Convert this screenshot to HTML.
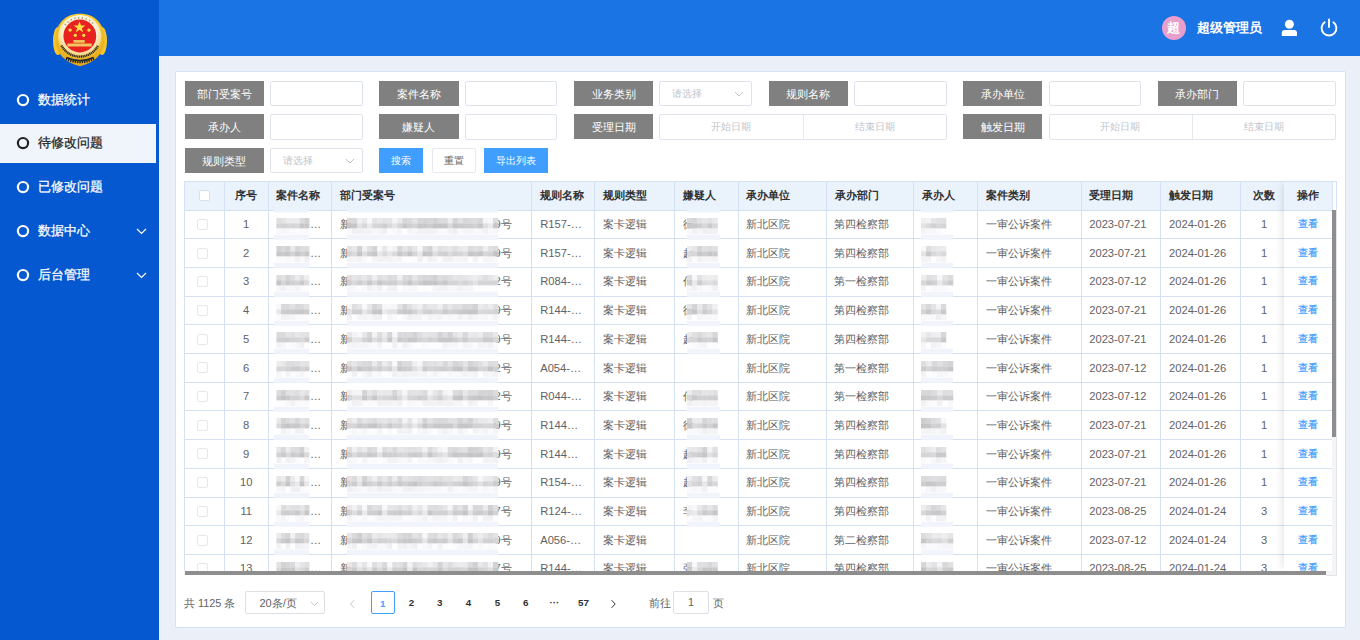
<!DOCTYPE html><html><head><meta charset="utf-8"><style>
*{margin:0;padding:0;box-sizing:border-box}
html,body{width:1360px;height:640px;overflow:hidden;background:#ebf0f8;font-family:"Liberation Sans", sans-serif;}
.ab{position:absolute}
.t{position:absolute;white-space:nowrap}
.lbl{position:absolute;background:#808080;color:#fff;font-size:11.2px;text-align:center;height:25px;line-height:26px;width:79.3px}
.inp{position:absolute;background:#fff;border:1px solid #dfe3ee;border-radius:2px;height:25.5px;width:92.5px}
.ph{position:absolute;color:#c0c4cc;font-size:10.4px;white-space:nowrap}
.hl{position:absolute;height:1px;background:#d3e1f3}
.vl{position:absolute;width:1px;background:#d3e1f3}
.ht{position:absolute;font-size:11.2px;font-weight:bold;color:#303133;white-space:nowrap;line-height:29px;top:181px}
.bt{position:absolute;font-size:11.2px;color:#606266;white-space:nowrap}
.cb{position:absolute;width:11px;height:11px;border:1px solid #dcdfe6;border-radius:2px;background:#fff}
.pg{position:absolute;font-size:9.8px;font-weight:bold;color:#303133;white-space:nowrap;top:591.6px;line-height:22px;text-align:center}

</style></head><body>
<svg width="0" height="0" style="position:absolute"><defs><filter id="mb" x="-10%" y="-30%" width="120%" height="160%"><feGaussianBlur stdDeviation="0.6"/></filter></defs></svg>
<div class="ab" style="left:0;top:0;width:159px;height:640px;background:#0558d0"></div>
<svg class="ab" style="left:50px;top:10px" width="60" height="60" viewBox="0 0 60 60">
<defs><radialGradient id="gd" cx="50%" cy="35%" r="65%"><stop offset="0" stop-color="#fff3a8"/><stop offset="0.55" stop-color="#f7cc2e"/><stop offset="1" stop-color="#e0a318"/></radialGradient>
<radialGradient id="rg" cx="50%" cy="40%" r="55%"><stop offset="0.7" stop-color="#fbf3d6"/><stop offset="1" stop-color="#efd27a"/></radialGradient></defs>
<ellipse cx="8" cy="31" rx="5" ry="14" fill="#f5c52c"/><ellipse cx="52" cy="31" rx="5" ry="14" fill="#f5c52c"/>
<path d="M30 3.8 C45 3.8 54.5 14 54.5 29 C54.5 43 46 52 30 56.2 C14 52 5.5 43 5.5 29 C5.5 14 15 3.8 30 3.8Z" fill="url(#gd)"/>
<circle cx="29.8" cy="26.5" r="21.6" fill="url(#rg)"/>
<circle cx="29.8" cy="26" r="16.4" fill="#e8231f"/>
<path d="M15 15 A18.8 18.8 0 0 1 44.6 15" fill="none" stroke="#6b5a3a" stroke-width="1.6" stroke-dasharray="1.2 2.6" opacity="0.6"/>
<polygon points="29.5,13.1 30.5,16 33.5,16 31.1,17.8 32,20.7 29.5,18.9 27,20.7 27.9,17.8 25.5,16 28.5,16" fill="#ffe04a" transform="translate(29.5 17) scale(1.45) translate(-29.5 -17)"/>
<circle cx="20.1" cy="20.1" r="1.7" fill="#ffe04a"/><circle cx="38.9" cy="20.1" r="1.7" fill="#ffe04a"/>
<circle cx="25.3" cy="25.3" r="1.6" fill="#ffe04a"/><circle cx="33.7" cy="25.3" r="1.6" fill="#ffe04a"/>
<rect x="23.4" y="30" width="11.3" height="2.8" fill="#f0bf5a"/><rect x="17.3" y="33.5" width="24.4" height="3" fill="#f3c55e"/>
<path d="M11.5 35.5 A20.6 20.6 0 0 0 48.1 35.5" fill="none" stroke="#3b2b0c" stroke-width="2.4" stroke-dasharray="1.3 0.5"/>
<path d="M16 48.5 Q30 55 44 48.5" fill="none" stroke="#222" stroke-width="3" stroke-dasharray="1.4 0.9"/>
<path d="M16.5 47.5 Q30 53.5 43.5 47.5" fill="none" stroke="#2a2a2a" stroke-width="1.6"/>
</svg>
<svg class="ab" style="left:15px;top:91.50px" width="16" height="16" viewBox="0 0 16 16"><circle cx="8" cy="8.1" r="5.1" fill="none" stroke="#fff" stroke-width="2.2"/></svg>
<div class="t" style="left:38px;top:90.50px;font-size:12.8px;line-height:18px;-webkit-text-stroke:0.25px #fff;color:#fff">数据统计</div>
<div class="ab" style="left:0;top:123.75px;width:156px;height:39.4px;background:#f0f5fc"></div>
<svg class="ab" style="left:15px;top:135.35px" width="16" height="16" viewBox="0 0 16 16"><circle cx="8" cy="8.1" r="5.1" fill="none" stroke="#222" stroke-width="2.2"/></svg>
<div class="t" style="left:38px;top:134.35px;font-size:12.8px;line-height:18px;-webkit-text-stroke:0.25px #222;color:#222">待修改问题</div>
<svg class="ab" style="left:15px;top:179.20px" width="16" height="16" viewBox="0 0 16 16"><circle cx="8" cy="8.1" r="5.1" fill="none" stroke="#fff" stroke-width="2.2"/></svg>
<div class="t" style="left:38px;top:178.20px;font-size:12.8px;line-height:18px;-webkit-text-stroke:0.25px #fff;color:#fff">已修改问题</div>
<svg class="ab" style="left:15px;top:223.05px" width="16" height="16" viewBox="0 0 16 16"><circle cx="8" cy="8.1" r="5.1" fill="none" stroke="#fff" stroke-width="2.2"/></svg>
<div class="t" style="left:38px;top:222.05px;font-size:12.8px;line-height:18px;-webkit-text-stroke:0.25px #fff;color:#fff">数据中心</div>
<svg class="ab" style="left:136px;top:228.05px" width="11" height="7" viewBox="0 0 11 7"><path d="M1 1 L5.5 5.5 L10 1" fill="none" stroke="#fff" stroke-width="1.2"/></svg>
<svg class="ab" style="left:15px;top:266.90px" width="16" height="16" viewBox="0 0 16 16"><circle cx="8" cy="8.1" r="5.1" fill="none" stroke="#fff" stroke-width="2.2"/></svg>
<div class="t" style="left:38px;top:265.90px;font-size:12.8px;line-height:18px;-webkit-text-stroke:0.25px #fff;color:#fff">后台管理</div>
<svg class="ab" style="left:136px;top:271.90px" width="11" height="7" viewBox="0 0 11 7"><path d="M1 1 L5.5 5.5 L10 1" fill="none" stroke="#fff" stroke-width="1.2"/></svg>
<div class="ab" style="left:159px;top:0;width:1201px;height:55.5px;background:#1b74e4"></div>
<div class="ab" style="left:1161.6px;top:15.7px;width:24.5px;height:24.5px;border-radius:50%;background:#e89fcb;color:#fff;font-size:13px;font-weight:bold;line-height:24.5px;text-align:center">超</div>
<div class="t" style="left:1197px;top:19px;font-size:12.8px;line-height:18px;font-weight:bold;color:#fff">超级管理员</div>
<svg class="ab" style="left:1280px;top:19px" width="18" height="18" viewBox="0 0 18 18"><circle cx="9.4" cy="5.2" r="4.5" fill="#fff"/><path d="M1.8 16.9 V14 Q1.8 11 4.8 11 H14 Q17 11 17 14 V16.9 Z" fill="#fff"/></svg>
<svg class="ab" style="left:1319px;top:17px" width="20" height="21" viewBox="0 0 20 21"><path d="M5.6 5.2 A7.4 7.4 0 1 0 14.4 5.2" fill="none" stroke="#fff" stroke-width="1.9" stroke-linecap="round"/><path d="M10 2.5 V10" stroke="#fff" stroke-width="1.9" stroke-linecap="round"/></svg>
<div class="ab" style="left:175px;top:71px;width:1170.5px;height:557px;background:#fff;border:1px solid #d5e2f3;border-radius:2px"></div>
<div class="lbl" style="left:184.70px;top:80.9px">部门受案号</div>
<div class="inp" style="left:270.20px;top:80.70px"></div>
<div class="lbl" style="left:379.30px;top:80.9px">案件名称</div>
<div class="inp" style="left:464.80px;top:80.70px"></div>
<div class="lbl" style="left:573.90px;top:80.9px">业务类别</div>
<div class="inp" style="left:659.40px;top:80.70px"></div>
<div class="ph" style="left:672.20px;top:86.9px;line-height:13px">请选择</div>
<svg class="ab" style="left:733.90px;top:90.9px" width="10" height="6" viewBox="0 0 10 6"><path d="M1 1 L5 5 L9 1" fill="none" stroke="#c0c4cc" stroke-width="1"/></svg>
<div class="lbl" style="left:768.50px;top:80.9px">规则名称</div>
<div class="inp" style="left:854.00px;top:80.70px"></div>
<div class="lbl" style="left:963.10px;top:80.9px">承办单位</div>
<div class="inp" style="left:1048.60px;top:80.70px"></div>
<div class="lbl" style="left:1157.70px;top:80.9px">承办部门</div>
<div class="inp" style="left:1243.20px;top:80.70px"></div>
<div class="lbl" style="left:184.70px;top:114.4px">承办人</div>
<div class="inp" style="left:270.20px;top:114.20px"></div>
<div class="lbl" style="left:379.30px;top:114.4px">嫌疑人</div>
<div class="inp" style="left:464.80px;top:114.20px"></div>
<div class="lbl" style="left:573.90px;top:114.4px">受理日期</div>
<div class="inp" style="left:659.40px;top:114.20px;width:287.2px"></div>
<div class="ab" style="left:803.00px;top:115.4px;width:1px;height:24px;background:#e4e7ed"></div>
<div class="ph" style="left:659.40px;width:143.60px;text-align:center;top:120.4px;line-height:13px">开始日期</div>
<div class="ph" style="left:803.00px;width:143.60px;text-align:center;top:120.4px;line-height:13px">结束日期</div>
<div class="lbl" style="left:963.10px;top:114.4px">触发日期</div>
<div class="inp" style="left:1048.60px;top:114.20px;width:287.2px"></div>
<div class="ab" style="left:1192.20px;top:115.4px;width:1px;height:24px;background:#e4e7ed"></div>
<div class="ph" style="left:1048.60px;width:143.60px;text-align:center;top:120.4px;line-height:13px">开始日期</div>
<div class="ph" style="left:1192.20px;width:143.60px;text-align:center;top:120.4px;line-height:13px">结束日期</div>
<div class="lbl" style="left:184.7px;top:147.8px">规则类型</div>
<div class="inp" style="left:270.20px;top:147.60px"></div>
<div class="ph" style="left:283.00px;top:153.8px;line-height:13px">请选择</div>
<svg class="ab" style="left:344.70px;top:157.8px" width="10" height="6" viewBox="0 0 10 6"><path d="M1 1 L5 5 L9 1" fill="none" stroke="#c0c4cc" stroke-width="1"/></svg>
<div class="ab" style="left:379px;top:148px;width:44px;height:25px;background:#409eff;color:#fff;font-size:9.6px;line-height:25px;text-align:center">搜索</div>
<div class="ab" style="left:431.8px;top:148px;width:44px;height:25px;background:#fff;border:1px solid #e6e9f0;border-radius:2px;color:#606266;font-size:9.6px;line-height:24px;text-align:center">重置</div>
<div class="ab" style="left:484.3px;top:148px;width:63.4px;height:25px;background:#409eff;color:#fff;font-size:9.6px;line-height:25px;text-align:center">导出列表</div>
<div class="ab" style="left:184.3px;top:181.0px;width:1147.7px;height:29.0px;background:#eaf2fc"></div>
<div class="hl" style="left:184.3px;top:181.0px;width:1147.7px"></div>
<div class="hl" style="left:184.3px;top:209.50px;width:1147.7px"></div>
<div class="hl" style="left:184.3px;top:238.20px;width:1147.7px"></div>
<div class="hl" style="left:184.3px;top:266.90px;width:1147.7px"></div>
<div class="hl" style="left:184.3px;top:295.60px;width:1147.7px"></div>
<div class="hl" style="left:184.3px;top:324.30px;width:1147.7px"></div>
<div class="hl" style="left:184.3px;top:353.00px;width:1147.7px"></div>
<div class="hl" style="left:184.3px;top:381.70px;width:1147.7px"></div>
<div class="hl" style="left:184.3px;top:410.40px;width:1147.7px"></div>
<div class="hl" style="left:184.3px;top:439.10px;width:1147.7px"></div>
<div class="hl" style="left:184.3px;top:467.80px;width:1147.7px"></div>
<div class="hl" style="left:184.3px;top:496.50px;width:1147.7px"></div>
<div class="hl" style="left:184.3px;top:525.20px;width:1147.7px"></div>
<div class="hl" style="left:184.3px;top:553.90px;width:1147.7px"></div>
<div class="vl" style="left:183.80px;top:181.0px;height:390.29999999999995px"></div>
<div class="vl" style="left:223.90px;top:181.0px;height:390.29999999999995px"></div>
<div class="vl" style="left:267.50px;top:181.0px;height:390.29999999999995px"></div>
<div class="vl" style="left:331.10px;top:181.0px;height:390.29999999999995px"></div>
<div class="vl" style="left:531.10px;top:181.0px;height:390.29999999999995px"></div>
<div class="vl" style="left:594.30px;top:181.0px;height:390.29999999999995px"></div>
<div class="vl" style="left:674.00px;top:181.0px;height:390.29999999999995px"></div>
<div class="vl" style="left:737.70px;top:181.0px;height:390.29999999999995px"></div>
<div class="vl" style="left:825.90px;top:181.0px;height:390.29999999999995px"></div>
<div class="vl" style="left:913.10px;top:181.0px;height:390.29999999999995px"></div>
<div class="vl" style="left:977.10px;top:181.0px;height:390.29999999999995px"></div>
<div class="vl" style="left:1080.70px;top:181.0px;height:390.29999999999995px"></div>
<div class="vl" style="left:1160.10px;top:181.0px;height:390.29999999999995px"></div>
<div class="vl" style="left:1240.10px;top:181.0px;height:390.29999999999995px"></div>
<div class="cb" style="left:198.7px;top:190.4px"></div>
<div class="ht" style="left:224.4px;width:43.599999999999994px;text-align:center">序号</div>
<div class="ht" style="left:276.20px">案件名称</div>
<div class="ht" style="left:339.80px">部门受案号</div>
<div class="ht" style="left:539.80px">规则名称</div>
<div class="ht" style="left:603.00px">规则类型</div>
<div class="ht" style="left:682.70px">嫌疑人</div>
<div class="ht" style="left:746.40px">承办单位</div>
<div class="ht" style="left:834.60px">承办部门</div>
<div class="ht" style="left:921.80px">承办人</div>
<div class="ht" style="left:985.80px">案件类别</div>
<div class="ht" style="left:1089.40px">受理日期</div>
<div class="ht" style="left:1168.80px">触发日期</div>
<div class="ht" style="left:1240.6px;width:47px;text-align:center">次数</div>
<div class="ab" style="left:184.3px;top:210.0px;width:1147.7px;height:361.29999999999995px;overflow:hidden">
<div class="cb" style="left:13.20px;top:8.85px;border-color:#e6e8ee"></div>
<div class="bt" style="left:40.10px;top:0.00px;line-height:28.7px;width:43.599999999999994px;text-align:center;">1</div>
<div class="bt" style="left:125.70px;top:0.00px;line-height:28.7px;">…</div>
<div class="bt" style="left:155.70px;top:0.00px;line-height:28.7px;">新</div>
<div class="bt" style="left:310.20px;top:0.00px;line-height:28.7px;">9号</div>
<svg class="ab" style="left:89.60px;top:-2.50px;overflow:visible" width="35.10" height="32" viewBox="0 0 35.10 32"><g filter="url(#mb)"><rect x="2.40" y="10.0" width="4.97" height="5.3" fill="rgb(224,224,226)"/><rect x="7.07" y="10.0" width="4.97" height="5.3" fill="rgb(228,228,230)"/><rect x="11.74" y="10.0" width="4.97" height="5.3" fill="rgb(236,236,238)"/><rect x="16.41" y="10.0" width="4.97" height="5.3" fill="rgb(236,236,238)"/><rect x="21.09" y="10.0" width="4.97" height="5.3" fill="rgb(236,236,238)"/><rect x="25.76" y="10.0" width="4.97" height="5.3" fill="rgb(219,219,221)"/><rect x="30.43" y="10.0" width="4.97" height="5.3" fill="rgb(210,210,212)"/><rect x="2.40" y="15.3" width="4.97" height="5.3" fill="rgb(213,213,215)"/><rect x="7.07" y="15.3" width="4.97" height="5.3" fill="rgb(210,210,212)"/><rect x="11.74" y="15.3" width="4.97" height="5.3" fill="rgb(214,214,216)"/><rect x="16.41" y="15.3" width="4.97" height="5.3" fill="rgb(212,212,214)"/><rect x="21.09" y="15.3" width="4.97" height="5.3" fill="rgb(215,215,217)"/><rect x="25.76" y="15.3" width="4.97" height="5.3" fill="rgb(199,199,201)"/><rect x="30.43" y="15.3" width="4.97" height="5.3" fill="rgb(200,200,202)"/><rect x="2.40" y="20.6" width="4.97" height="5.3" fill="rgb(249,249,251)"/><rect x="7.07" y="20.6" width="4.97" height="5.3" fill="rgb(246,246,248)"/><rect x="11.74" y="20.6" width="4.97" height="5.3" fill="rgb(247,247,249)"/><rect x="16.41" y="20.6" width="4.97" height="5.3" fill="rgb(250,250,252)"/><rect x="21.09" y="20.6" width="4.97" height="5.3" fill="rgb(251,251,253)"/><rect x="25.76" y="20.6" width="4.97" height="5.3" fill="rgb(249,249,251)"/><rect x="30.43" y="20.6" width="4.97" height="5.3" fill="rgb(250,250,252)"/></g><rect x="0" y="26.6" width="35.10" height="5.2" fill="#f1f5fb"/><rect x="0" y="0" width="35.10" height="4.5" fill="#edf3fb"/></svg>
<svg class="ab" style="left:163.00px;top:-2.50px;overflow:visible" width="151.00" height="32" viewBox="0 0 151.00 32"><g filter="url(#mb)"><rect x="0.00" y="10.0" width="5.33" height="5.3" fill="rgb(216,216,218)"/><rect x="5.03" y="10.0" width="5.33" height="5.3" fill="rgb(216,216,218)"/><rect x="10.07" y="10.0" width="5.33" height="5.3" fill="rgb(239,239,241)"/><rect x="15.10" y="10.0" width="5.33" height="5.3" fill="rgb(232,232,234)"/><rect x="20.13" y="10.0" width="5.33" height="5.3" fill="rgb(248,248,250)"/><rect x="25.17" y="10.0" width="5.33" height="5.3" fill="rgb(227,227,229)"/><rect x="30.20" y="10.0" width="5.33" height="5.3" fill="rgb(233,233,235)"/><rect x="35.23" y="10.0" width="5.33" height="5.3" fill="rgb(227,227,229)"/><rect x="40.27" y="10.0" width="5.33" height="5.3" fill="rgb(229,229,231)"/><rect x="45.30" y="10.0" width="5.33" height="5.3" fill="rgb(244,244,246)"/><rect x="50.33" y="10.0" width="5.33" height="5.3" fill="rgb(233,233,235)"/><rect x="55.37" y="10.0" width="5.33" height="5.3" fill="rgb(214,214,216)"/><rect x="60.40" y="10.0" width="5.33" height="5.3" fill="rgb(217,217,219)"/><rect x="65.43" y="10.0" width="5.33" height="5.3" fill="rgb(228,228,230)"/><rect x="70.47" y="10.0" width="5.33" height="5.3" fill="rgb(214,214,216)"/><rect x="75.50" y="10.0" width="5.33" height="5.3" fill="rgb(212,212,214)"/><rect x="80.53" y="10.0" width="5.33" height="5.3" fill="rgb(215,215,217)"/><rect x="85.57" y="10.0" width="5.33" height="5.3" fill="rgb(210,210,212)"/><rect x="90.60" y="10.0" width="5.33" height="5.3" fill="rgb(219,219,221)"/><rect x="95.63" y="10.0" width="5.33" height="5.3" fill="rgb(219,219,221)"/><rect x="100.67" y="10.0" width="5.33" height="5.3" fill="rgb(237,237,239)"/><rect x="105.70" y="10.0" width="5.33" height="5.3" fill="rgb(212,212,214)"/><rect x="110.73" y="10.0" width="5.33" height="5.3" fill="rgb(226,226,228)"/><rect x="115.77" y="10.0" width="5.33" height="5.3" fill="rgb(214,214,216)"/><rect x="120.80" y="10.0" width="5.33" height="5.3" fill="rgb(218,218,220)"/><rect x="125.83" y="10.0" width="5.33" height="5.3" fill="rgb(221,221,223)"/><rect x="130.87" y="10.0" width="5.33" height="5.3" fill="rgb(215,215,217)"/><rect x="135.90" y="10.0" width="5.33" height="5.3" fill="rgb(246,246,248)"/><rect x="140.93" y="10.0" width="5.33" height="5.3" fill="rgb(248,248,250)"/><rect x="145.97" y="10.0" width="5.33" height="5.3" fill="rgb(221,221,223)"/><rect x="0.00" y="15.3" width="5.33" height="5.3" fill="rgb(196,196,198)"/><rect x="5.03" y="15.3" width="5.33" height="5.3" fill="rgb(198,198,200)"/><rect x="10.07" y="15.3" width="5.33" height="5.3" fill="rgb(226,226,228)"/><rect x="15.10" y="15.3" width="5.33" height="5.3" fill="rgb(215,215,217)"/><rect x="20.13" y="15.3" width="5.33" height="5.3" fill="rgb(234,234,236)"/><rect x="25.17" y="15.3" width="5.33" height="5.3" fill="rgb(214,214,216)"/><rect x="30.20" y="15.3" width="5.33" height="5.3" fill="rgb(212,212,214)"/><rect x="35.23" y="15.3" width="5.33" height="5.3" fill="rgb(205,205,207)"/><rect x="40.27" y="15.3" width="5.33" height="5.3" fill="rgb(217,217,219)"/><rect x="45.30" y="15.3" width="5.33" height="5.3" fill="rgb(228,228,230)"/><rect x="50.33" y="15.3" width="5.33" height="5.3" fill="rgb(213,213,215)"/><rect x="55.37" y="15.3" width="5.33" height="5.3" fill="rgb(198,198,200)"/><rect x="60.40" y="15.3" width="5.33" height="5.3" fill="rgb(206,206,208)"/><rect x="65.43" y="15.3" width="5.33" height="5.3" fill="rgb(212,212,214)"/><rect x="70.47" y="15.3" width="5.33" height="5.3" fill="rgb(198,198,200)"/><rect x="75.50" y="15.3" width="5.33" height="5.3" fill="rgb(199,199,201)"/><rect x="80.53" y="15.3" width="5.33" height="5.3" fill="rgb(205,205,207)"/><rect x="85.57" y="15.3" width="5.33" height="5.3" fill="rgb(196,196,198)"/><rect x="90.60" y="15.3" width="5.33" height="5.3" fill="rgb(196,196,198)"/><rect x="95.63" y="15.3" width="5.33" height="5.3" fill="rgb(197,197,199)"/><rect x="100.67" y="15.3" width="5.33" height="5.3" fill="rgb(218,218,220)"/><rect x="105.70" y="15.3" width="5.33" height="5.3" fill="rgb(198,198,200)"/><rect x="110.73" y="15.3" width="5.33" height="5.3" fill="rgb(202,202,204)"/><rect x="115.77" y="15.3" width="5.33" height="5.3" fill="rgb(204,204,206)"/><rect x="120.80" y="15.3" width="5.33" height="5.3" fill="rgb(205,205,207)"/><rect x="125.83" y="15.3" width="5.33" height="5.3" fill="rgb(209,209,211)"/><rect x="130.87" y="15.3" width="5.33" height="5.3" fill="rgb(199,199,201)"/><rect x="135.90" y="15.3" width="5.33" height="5.3" fill="rgb(223,223,225)"/><rect x="140.93" y="15.3" width="5.33" height="5.3" fill="rgb(234,234,236)"/><rect x="145.97" y="15.3" width="5.33" height="5.3" fill="rgb(201,201,203)"/><rect x="0.00" y="20.6" width="5.33" height="5.3" fill="rgb(249,249,251)"/><rect x="5.03" y="20.6" width="5.33" height="5.3" fill="rgb(241,241,243)"/><rect x="10.07" y="20.6" width="5.33" height="5.3" fill="rgb(240,240,242)"/><rect x="15.10" y="20.6" width="5.33" height="5.3" fill="rgb(242,242,244)"/><rect x="20.13" y="20.6" width="5.33" height="5.3" fill="rgb(243,243,245)"/><rect x="25.17" y="20.6" width="5.33" height="5.3" fill="rgb(247,247,249)"/><rect x="30.20" y="20.6" width="5.33" height="5.3" fill="rgb(244,244,246)"/><rect x="35.23" y="20.6" width="5.33" height="5.3" fill="rgb(240,240,242)"/><rect x="40.27" y="20.6" width="5.33" height="5.3" fill="rgb(252,252,254)"/><rect x="45.30" y="20.6" width="5.33" height="5.3" fill="rgb(249,249,251)"/><rect x="50.33" y="20.6" width="5.33" height="5.3" fill="rgb(245,245,247)"/><rect x="55.37" y="20.6" width="5.33" height="5.3" fill="rgb(253,253,255)"/><rect x="60.40" y="20.6" width="5.33" height="5.3" fill="rgb(244,244,246)"/><rect x="65.43" y="20.6" width="5.33" height="5.3" fill="rgb(246,246,248)"/><rect x="70.47" y="20.6" width="5.33" height="5.3" fill="rgb(241,241,243)"/><rect x="75.50" y="20.6" width="5.33" height="5.3" fill="rgb(241,241,243)"/><rect x="80.53" y="20.6" width="5.33" height="5.3" fill="rgb(241,241,243)"/><rect x="85.57" y="20.6" width="5.33" height="5.3" fill="rgb(243,243,245)"/><rect x="90.60" y="20.6" width="5.33" height="5.3" fill="rgb(249,249,251)"/><rect x="95.63" y="20.6" width="5.33" height="5.3" fill="rgb(250,250,252)"/><rect x="100.67" y="20.6" width="5.33" height="5.3" fill="rgb(243,243,245)"/><rect x="105.70" y="20.6" width="5.33" height="5.3" fill="rgb(240,240,242)"/><rect x="110.73" y="20.6" width="5.33" height="5.3" fill="rgb(249,249,251)"/><rect x="115.77" y="20.6" width="5.33" height="5.3" fill="rgb(245,245,247)"/><rect x="120.80" y="20.6" width="5.33" height="5.3" fill="rgb(245,245,247)"/><rect x="125.83" y="20.6" width="5.33" height="5.3" fill="rgb(249,249,251)"/><rect x="130.87" y="20.6" width="5.33" height="5.3" fill="rgb(247,247,249)"/><rect x="135.90" y="20.6" width="5.33" height="5.3" fill="rgb(242,242,244)"/><rect x="140.93" y="20.6" width="5.33" height="5.3" fill="rgb(249,249,251)"/><rect x="145.97" y="20.6" width="5.33" height="5.3" fill="rgb(247,247,249)"/></g><rect x="0" y="26.6" width="151.00" height="5.2" fill="#f1f5fb"/><rect x="0" y="0" width="151.00" height="4.5" fill="#edf3fb"/></svg>
<div class="bt" style="left:355.90px;top:0.00px;line-height:28.7px;">R157-…</div>
<div class="bt" style="left:418.90px;top:0.00px;line-height:28.7px;">案卡逻辑</div>
<div class="bt" style="left:498.30px;top:0.00px;line-height:28.7px;">徐</div>
<svg class="ab" style="left:502.70px;top:-2.50px;overflow:visible" width="33.00" height="32" viewBox="0 0 33.00 32"><g filter="url(#mb)"><rect x="0.00" y="10.0" width="5.38" height="5.3" fill="rgb(218,218,220)"/><rect x="5.08" y="10.0" width="5.38" height="5.3" fill="rgb(214,214,216)"/><rect x="10.17" y="10.0" width="5.38" height="5.3" fill="rgb(225,225,227)"/><rect x="15.25" y="10.0" width="5.38" height="5.3" fill="rgb(231,231,233)"/><rect x="20.33" y="10.0" width="5.38" height="5.3" fill="rgb(226,226,228)"/><rect x="25.42" y="10.0" width="5.38" height="5.3" fill="rgb(233,233,235)"/><rect x="0.00" y="15.3" width="5.38" height="5.3" fill="rgb(200,200,202)"/><rect x="5.08" y="15.3" width="5.38" height="5.3" fill="rgb(201,201,203)"/><rect x="10.17" y="15.3" width="5.38" height="5.3" fill="rgb(205,205,207)"/><rect x="15.25" y="15.3" width="5.38" height="5.3" fill="rgb(215,215,217)"/><rect x="20.33" y="15.3" width="5.38" height="5.3" fill="rgb(202,202,204)"/><rect x="25.42" y="15.3" width="5.38" height="5.3" fill="rgb(216,216,218)"/><rect x="0.00" y="20.6" width="5.38" height="5.3" fill="rgb(249,249,251)"/><rect x="5.08" y="20.6" width="5.38" height="5.3" fill="rgb(241,241,243)"/><rect x="10.17" y="20.6" width="5.38" height="5.3" fill="rgb(246,246,248)"/><rect x="15.25" y="20.6" width="5.38" height="5.3" fill="rgb(240,240,242)"/><rect x="20.33" y="20.6" width="5.38" height="5.3" fill="rgb(241,241,243)"/><rect x="25.42" y="20.6" width="5.38" height="5.3" fill="rgb(241,241,243)"/></g><rect x="0" y="26.6" width="33.00" height="5.2" fill="#f1f5fb"/><rect x="0" y="0" width="33.00" height="4.5" fill="#edf3fb"/></svg>
<div class="bt" style="left:562.20px;top:0.00px;line-height:28.7px;">新北区院</div>
<div class="bt" style="left:650.00px;top:0.00px;line-height:28.7px;">第四检察部</div>
<svg class="ab" style="left:736.70px;top:-2.50px;overflow:visible" width="32.00" height="32" viewBox="0 0 32.00 32"><g filter="url(#mb)"><rect x="0.00" y="10.0" width="5.30" height="5.3" fill="rgb(240,240,242)"/><rect x="5.00" y="10.0" width="5.30" height="5.3" fill="rgb(242,242,244)"/><rect x="10.00" y="10.0" width="5.30" height="5.3" fill="rgb(230,230,232)"/><rect x="15.00" y="10.0" width="5.30" height="5.3" fill="rgb(226,226,228)"/><rect x="20.00" y="10.0" width="5.30" height="5.3" fill="rgb(224,224,226)"/><rect x="0.00" y="15.3" width="5.30" height="5.3" fill="rgb(228,228,230)"/><rect x="5.00" y="15.3" width="5.30" height="5.3" fill="rgb(218,218,220)"/><rect x="10.00" y="15.3" width="5.30" height="5.3" fill="rgb(209,209,211)"/><rect x="15.00" y="15.3" width="5.30" height="5.3" fill="rgb(215,215,217)"/><rect x="20.00" y="15.3" width="5.30" height="5.3" fill="rgb(212,212,214)"/><rect x="0.00" y="20.6" width="5.30" height="5.3" fill="rgb(243,243,245)"/><rect x="5.00" y="20.6" width="5.30" height="5.3" fill="rgb(247,247,249)"/><rect x="10.00" y="20.6" width="5.30" height="5.3" fill="rgb(248,248,250)"/><rect x="15.00" y="20.6" width="5.30" height="5.3" fill="rgb(250,250,252)"/><rect x="20.00" y="20.6" width="5.30" height="5.3" fill="rgb(253,253,255)"/></g><rect x="0" y="26.6" width="32.00" height="5.2" fill="#f1f5fb"/><rect x="0" y="0" width="32.00" height="4.5" fill="#edf3fb"/></svg>
<div class="bt" style="left:801.50px;top:0.00px;line-height:28.7px;">一审公诉案件</div>
<div class="bt" style="left:904.90px;top:0.00px;line-height:28.7px;">2023-07-21</div>
<div class="bt" style="left:984.70px;top:0.00px;line-height:28.7px;">2024-01-26</div>
<div class="bt" style="left:1056.30px;top:0.00px;line-height:28.7px;width:47px;text-align:center;">1</div>
<div class="cb" style="left:13.20px;top:37.55px;border-color:#e6e8ee"></div>
<div class="bt" style="left:40.10px;top:28.70px;line-height:28.7px;width:43.599999999999994px;text-align:center;">2</div>
<div class="bt" style="left:125.70px;top:28.70px;line-height:28.7px;">…</div>
<div class="bt" style="left:155.70px;top:28.70px;line-height:28.7px;">新</div>
<div class="bt" style="left:310.20px;top:28.70px;line-height:28.7px;">9号</div>
<svg class="ab" style="left:89.60px;top:26.20px;overflow:visible" width="35.10" height="32" viewBox="0 0 35.10 32"><g filter="url(#mb)"><rect x="2.40" y="10.0" width="4.97" height="5.3" fill="rgb(209,209,211)"/><rect x="7.07" y="10.0" width="4.97" height="5.3" fill="rgb(217,217,219)"/><rect x="11.74" y="10.0" width="4.97" height="5.3" fill="rgb(210,210,212)"/><rect x="16.41" y="10.0" width="4.97" height="5.3" fill="rgb(234,234,236)"/><rect x="21.09" y="10.0" width="4.97" height="5.3" fill="rgb(214,214,216)"/><rect x="25.76" y="10.0" width="4.97" height="5.3" fill="rgb(222,222,224)"/><rect x="30.43" y="10.0" width="4.97" height="5.3" fill="rgb(220,220,222)"/><rect x="2.40" y="15.3" width="4.97" height="5.3" fill="rgb(198,198,200)"/><rect x="7.07" y="15.3" width="4.97" height="5.3" fill="rgb(202,202,204)"/><rect x="11.74" y="15.3" width="4.97" height="5.3" fill="rgb(198,198,200)"/><rect x="16.41" y="15.3" width="4.97" height="5.3" fill="rgb(210,210,212)"/><rect x="21.09" y="15.3" width="4.97" height="5.3" fill="rgb(197,197,199)"/><rect x="25.76" y="15.3" width="4.97" height="5.3" fill="rgb(207,207,209)"/><rect x="30.43" y="15.3" width="4.97" height="5.3" fill="rgb(200,200,202)"/><rect x="2.40" y="20.6" width="4.97" height="5.3" fill="rgb(251,251,253)"/><rect x="7.07" y="20.6" width="4.97" height="5.3" fill="rgb(251,251,253)"/><rect x="11.74" y="20.6" width="4.97" height="5.3" fill="rgb(248,248,250)"/><rect x="16.41" y="20.6" width="4.97" height="5.3" fill="rgb(249,249,251)"/><rect x="21.09" y="20.6" width="4.97" height="5.3" fill="rgb(242,242,244)"/><rect x="25.76" y="20.6" width="4.97" height="5.3" fill="rgb(249,249,251)"/><rect x="30.43" y="20.6" width="4.97" height="5.3" fill="rgb(240,240,242)"/></g><rect x="0" y="26.6" width="35.10" height="5.2" fill="#f1f5fb"/></svg>
<svg class="ab" style="left:163.00px;top:26.20px;overflow:visible" width="151.00" height="32" viewBox="0 0 151.00 32"><g filter="url(#mb)"><rect x="0.00" y="10.0" width="5.33" height="5.3" fill="rgb(226,226,228)"/><rect x="5.03" y="10.0" width="5.33" height="5.3" fill="rgb(232,232,234)"/><rect x="10.07" y="10.0" width="5.33" height="5.3" fill="rgb(209,209,211)"/><rect x="15.10" y="10.0" width="5.33" height="5.3" fill="rgb(242,242,244)"/><rect x="20.13" y="10.0" width="5.33" height="5.3" fill="rgb(224,224,226)"/><rect x="25.17" y="10.0" width="5.33" height="5.3" fill="rgb(211,211,213)"/><rect x="30.20" y="10.0" width="5.33" height="5.3" fill="rgb(248,248,250)"/><rect x="35.23" y="10.0" width="5.33" height="5.3" fill="rgb(230,230,232)"/><rect x="40.27" y="10.0" width="5.33" height="5.3" fill="rgb(248,248,250)"/><rect x="45.30" y="10.0" width="5.33" height="5.3" fill="rgb(241,241,243)"/><rect x="50.33" y="10.0" width="5.33" height="5.3" fill="rgb(213,213,215)"/><rect x="55.37" y="10.0" width="5.33" height="5.3" fill="rgb(229,229,231)"/><rect x="60.40" y="10.0" width="5.33" height="5.3" fill="rgb(220,220,222)"/><rect x="65.43" y="10.0" width="5.33" height="5.3" fill="rgb(231,231,233)"/><rect x="70.47" y="10.0" width="5.33" height="5.3" fill="rgb(248,248,250)"/><rect x="75.50" y="10.0" width="5.33" height="5.3" fill="rgb(220,220,222)"/><rect x="80.53" y="10.0" width="5.33" height="5.3" fill="rgb(211,211,213)"/><rect x="85.57" y="10.0" width="5.33" height="5.3" fill="rgb(238,238,240)"/><rect x="90.60" y="10.0" width="5.33" height="5.3" fill="rgb(225,225,227)"/><rect x="95.63" y="10.0" width="5.33" height="5.3" fill="rgb(228,228,230)"/><rect x="100.67" y="10.0" width="5.33" height="5.3" fill="rgb(232,232,234)"/><rect x="105.70" y="10.0" width="5.33" height="5.3" fill="rgb(223,223,225)"/><rect x="110.73" y="10.0" width="5.33" height="5.3" fill="rgb(233,233,235)"/><rect x="115.77" y="10.0" width="5.33" height="5.3" fill="rgb(236,236,238)"/><rect x="120.80" y="10.0" width="5.33" height="5.3" fill="rgb(220,220,222)"/><rect x="125.83" y="10.0" width="5.33" height="5.3" fill="rgb(225,225,227)"/><rect x="130.87" y="10.0" width="5.33" height="5.3" fill="rgb(221,221,223)"/><rect x="135.90" y="10.0" width="5.33" height="5.3" fill="rgb(239,239,241)"/><rect x="140.93" y="10.0" width="5.33" height="5.3" fill="rgb(224,224,226)"/><rect x="145.97" y="10.0" width="5.33" height="5.3" fill="rgb(220,220,222)"/><rect x="0.00" y="15.3" width="5.33" height="5.3" fill="rgb(211,211,213)"/><rect x="5.03" y="15.3" width="5.33" height="5.3" fill="rgb(218,218,220)"/><rect x="10.07" y="15.3" width="5.33" height="5.3" fill="rgb(197,197,199)"/><rect x="15.10" y="15.3" width="5.33" height="5.3" fill="rgb(222,222,224)"/><rect x="20.13" y="15.3" width="5.33" height="5.3" fill="rgb(205,205,207)"/><rect x="25.17" y="15.3" width="5.33" height="5.3" fill="rgb(198,198,200)"/><rect x="30.20" y="15.3" width="5.33" height="5.3" fill="rgb(231,231,233)"/><rect x="35.23" y="15.3" width="5.33" height="5.3" fill="rgb(218,218,220)"/><rect x="40.27" y="15.3" width="5.33" height="5.3" fill="rgb(230,230,232)"/><rect x="45.30" y="15.3" width="5.33" height="5.3" fill="rgb(217,217,219)"/><rect x="50.33" y="15.3" width="5.33" height="5.3" fill="rgb(198,198,200)"/><rect x="55.37" y="15.3" width="5.33" height="5.3" fill="rgb(209,209,211)"/><rect x="60.40" y="15.3" width="5.33" height="5.3" fill="rgb(196,196,198)"/><rect x="65.43" y="15.3" width="5.33" height="5.3" fill="rgb(214,214,216)"/><rect x="70.47" y="15.3" width="5.33" height="5.3" fill="rgb(232,232,234)"/><rect x="75.50" y="15.3" width="5.33" height="5.3" fill="rgb(196,196,198)"/><rect x="80.53" y="15.3" width="5.33" height="5.3" fill="rgb(198,198,200)"/><rect x="85.57" y="15.3" width="5.33" height="5.3" fill="rgb(223,223,225)"/><rect x="90.60" y="15.3" width="5.33" height="5.3" fill="rgb(209,209,211)"/><rect x="95.63" y="15.3" width="5.33" height="5.3" fill="rgb(208,208,210)"/><rect x="100.67" y="15.3" width="5.33" height="5.3" fill="rgb(218,218,220)"/><rect x="105.70" y="15.3" width="5.33" height="5.3" fill="rgb(210,210,212)"/><rect x="110.73" y="15.3" width="5.33" height="5.3" fill="rgb(213,213,215)"/><rect x="115.77" y="15.3" width="5.33" height="5.3" fill="rgb(220,220,222)"/><rect x="120.80" y="15.3" width="5.33" height="5.3" fill="rgb(198,198,200)"/><rect x="125.83" y="15.3" width="5.33" height="5.3" fill="rgb(203,203,205)"/><rect x="130.87" y="15.3" width="5.33" height="5.3" fill="rgb(199,199,201)"/><rect x="135.90" y="15.3" width="5.33" height="5.3" fill="rgb(215,215,217)"/><rect x="140.93" y="15.3" width="5.33" height="5.3" fill="rgb(211,211,213)"/><rect x="145.97" y="15.3" width="5.33" height="5.3" fill="rgb(196,196,198)"/><rect x="0.00" y="20.6" width="5.33" height="5.3" fill="rgb(243,243,245)"/><rect x="5.03" y="20.6" width="5.33" height="5.3" fill="rgb(246,246,248)"/><rect x="10.07" y="20.6" width="5.33" height="5.3" fill="rgb(243,243,245)"/><rect x="15.10" y="20.6" width="5.33" height="5.3" fill="rgb(249,249,251)"/><rect x="20.13" y="20.6" width="5.33" height="5.3" fill="rgb(254,254,256)"/><rect x="25.17" y="20.6" width="5.33" height="5.3" fill="rgb(245,245,247)"/><rect x="30.20" y="20.6" width="5.33" height="5.3" fill="rgb(243,243,245)"/><rect x="35.23" y="20.6" width="5.33" height="5.3" fill="rgb(242,242,244)"/><rect x="40.27" y="20.6" width="5.33" height="5.3" fill="rgb(242,242,244)"/><rect x="45.30" y="20.6" width="5.33" height="5.3" fill="rgb(247,247,249)"/><rect x="50.33" y="20.6" width="5.33" height="5.3" fill="rgb(245,245,247)"/><rect x="55.37" y="20.6" width="5.33" height="5.3" fill="rgb(253,253,255)"/><rect x="60.40" y="20.6" width="5.33" height="5.3" fill="rgb(254,254,256)"/><rect x="65.43" y="20.6" width="5.33" height="5.3" fill="rgb(253,253,255)"/><rect x="70.47" y="20.6" width="5.33" height="5.3" fill="rgb(240,240,242)"/><rect x="75.50" y="20.6" width="5.33" height="5.3" fill="rgb(251,251,253)"/><rect x="80.53" y="20.6" width="5.33" height="5.3" fill="rgb(241,241,243)"/><rect x="85.57" y="20.6" width="5.33" height="5.3" fill="rgb(244,244,246)"/><rect x="90.60" y="20.6" width="5.33" height="5.3" fill="rgb(253,253,255)"/><rect x="95.63" y="20.6" width="5.33" height="5.3" fill="rgb(242,242,244)"/><rect x="100.67" y="20.6" width="5.33" height="5.3" fill="rgb(241,241,243)"/><rect x="105.70" y="20.6" width="5.33" height="5.3" fill="rgb(247,247,249)"/><rect x="110.73" y="20.6" width="5.33" height="5.3" fill="rgb(247,247,249)"/><rect x="115.77" y="20.6" width="5.33" height="5.3" fill="rgb(244,244,246)"/><rect x="120.80" y="20.6" width="5.33" height="5.3" fill="rgb(254,254,256)"/><rect x="125.83" y="20.6" width="5.33" height="5.3" fill="rgb(243,243,245)"/><rect x="130.87" y="20.6" width="5.33" height="5.3" fill="rgb(253,253,255)"/><rect x="135.90" y="20.6" width="5.33" height="5.3" fill="rgb(246,246,248)"/><rect x="140.93" y="20.6" width="5.33" height="5.3" fill="rgb(246,246,248)"/><rect x="145.97" y="20.6" width="5.33" height="5.3" fill="rgb(250,250,252)"/></g><rect x="0" y="26.6" width="151.00" height="5.2" fill="#f1f5fb"/></svg>
<div class="bt" style="left:355.90px;top:28.70px;line-height:28.7px;">R157-…</div>
<div class="bt" style="left:418.90px;top:28.70px;line-height:28.7px;">案卡逻辑</div>
<div class="bt" style="left:498.30px;top:28.70px;line-height:28.7px;">赵</div>
<svg class="ab" style="left:502.70px;top:26.20px;overflow:visible" width="33.00" height="32" viewBox="0 0 33.00 32"><g filter="url(#mb)"><rect x="0.00" y="10.0" width="5.38" height="5.3" fill="rgb(236,236,238)"/><rect x="5.08" y="10.0" width="5.38" height="5.3" fill="rgb(230,230,232)"/><rect x="10.17" y="10.0" width="5.38" height="5.3" fill="rgb(212,212,214)"/><rect x="15.25" y="10.0" width="5.38" height="5.3" fill="rgb(224,224,226)"/><rect x="20.33" y="10.0" width="5.38" height="5.3" fill="rgb(219,219,221)"/><rect x="25.42" y="10.0" width="5.38" height="5.3" fill="rgb(223,223,225)"/><rect x="0.00" y="15.3" width="5.38" height="5.3" fill="rgb(217,217,219)"/><rect x="5.08" y="15.3" width="5.38" height="5.3" fill="rgb(215,215,217)"/><rect x="10.17" y="15.3" width="5.38" height="5.3" fill="rgb(198,198,200)"/><rect x="15.25" y="15.3" width="5.38" height="5.3" fill="rgb(204,204,206)"/><rect x="20.33" y="15.3" width="5.38" height="5.3" fill="rgb(197,197,199)"/><rect x="25.42" y="15.3" width="5.38" height="5.3" fill="rgb(204,204,206)"/><rect x="0.00" y="20.6" width="5.38" height="5.3" fill="rgb(240,240,242)"/><rect x="5.08" y="20.6" width="5.38" height="5.3" fill="rgb(250,250,252)"/><rect x="10.17" y="20.6" width="5.38" height="5.3" fill="rgb(242,242,244)"/><rect x="15.25" y="20.6" width="5.38" height="5.3" fill="rgb(246,246,248)"/><rect x="20.33" y="20.6" width="5.38" height="5.3" fill="rgb(247,247,249)"/><rect x="25.42" y="20.6" width="5.38" height="5.3" fill="rgb(243,243,245)"/></g><rect x="0" y="26.6" width="33.00" height="5.2" fill="#f1f5fb"/></svg>
<div class="bt" style="left:562.20px;top:28.70px;line-height:28.7px;">新北区院</div>
<div class="bt" style="left:650.00px;top:28.70px;line-height:28.7px;">第四检察部</div>
<svg class="ab" style="left:736.70px;top:26.20px;overflow:visible" width="32.00" height="32" viewBox="0 0 32.00 32"><g filter="url(#mb)"><rect x="0.00" y="10.0" width="5.30" height="5.3" fill="rgb(248,248,250)"/><rect x="5.00" y="10.0" width="5.30" height="5.3" fill="rgb(222,222,224)"/><rect x="10.00" y="10.0" width="5.30" height="5.3" fill="rgb(231,231,233)"/><rect x="15.00" y="10.0" width="5.30" height="5.3" fill="rgb(234,234,236)"/><rect x="20.00" y="10.0" width="5.30" height="5.3" fill="rgb(236,236,238)"/><rect x="0.00" y="15.3" width="5.30" height="5.3" fill="rgb(228,228,230)"/><rect x="5.00" y="15.3" width="5.30" height="5.3" fill="rgb(200,200,202)"/><rect x="10.00" y="15.3" width="5.30" height="5.3" fill="rgb(216,216,218)"/><rect x="15.00" y="15.3" width="5.30" height="5.3" fill="rgb(223,223,225)"/><rect x="20.00" y="15.3" width="5.30" height="5.3" fill="rgb(216,216,218)"/><rect x="0.00" y="20.6" width="5.30" height="5.3" fill="rgb(243,243,245)"/><rect x="5.00" y="20.6" width="5.30" height="5.3" fill="rgb(243,243,245)"/><rect x="10.00" y="20.6" width="5.30" height="5.3" fill="rgb(253,253,255)"/><rect x="15.00" y="20.6" width="5.30" height="5.3" fill="rgb(247,247,249)"/><rect x="20.00" y="20.6" width="5.30" height="5.3" fill="rgb(244,244,246)"/></g><rect x="0" y="26.6" width="32.00" height="5.2" fill="#f1f5fb"/></svg>
<div class="bt" style="left:801.50px;top:28.70px;line-height:28.7px;">一审公诉案件</div>
<div class="bt" style="left:904.90px;top:28.70px;line-height:28.7px;">2023-07-21</div>
<div class="bt" style="left:984.70px;top:28.70px;line-height:28.7px;">2024-01-26</div>
<div class="bt" style="left:1056.30px;top:28.70px;line-height:28.7px;width:47px;text-align:center;">1</div>
<div class="cb" style="left:13.20px;top:66.25px;border-color:#e6e8ee"></div>
<div class="bt" style="left:40.10px;top:57.40px;line-height:28.7px;width:43.599999999999994px;text-align:center;">3</div>
<div class="bt" style="left:125.70px;top:57.40px;line-height:28.7px;">…</div>
<div class="bt" style="left:155.70px;top:57.40px;line-height:28.7px;">新</div>
<div class="bt" style="left:310.20px;top:57.40px;line-height:28.7px;">2号</div>
<svg class="ab" style="left:89.60px;top:54.90px;overflow:visible" width="35.10" height="32" viewBox="0 0 35.10 32"><g filter="url(#mb)"><rect x="2.40" y="10.0" width="4.97" height="5.3" fill="rgb(220,220,222)"/><rect x="7.07" y="10.0" width="4.97" height="5.3" fill="rgb(226,226,228)"/><rect x="11.74" y="10.0" width="4.97" height="5.3" fill="rgb(212,212,214)"/><rect x="16.41" y="10.0" width="4.97" height="5.3" fill="rgb(223,223,225)"/><rect x="21.09" y="10.0" width="4.97" height="5.3" fill="rgb(236,236,238)"/><rect x="25.76" y="10.0" width="4.97" height="5.3" fill="rgb(225,225,227)"/><rect x="30.43" y="10.0" width="4.97" height="5.3" fill="rgb(239,239,241)"/><rect x="2.40" y="15.3" width="4.97" height="5.3" fill="rgb(196,196,198)"/><rect x="7.07" y="15.3" width="4.97" height="5.3" fill="rgb(213,213,215)"/><rect x="11.74" y="15.3" width="4.97" height="5.3" fill="rgb(201,201,203)"/><rect x="16.41" y="15.3" width="4.97" height="5.3" fill="rgb(207,207,209)"/><rect x="21.09" y="15.3" width="4.97" height="5.3" fill="rgb(212,212,214)"/><rect x="25.76" y="15.3" width="4.97" height="5.3" fill="rgb(201,201,203)"/><rect x="30.43" y="15.3" width="4.97" height="5.3" fill="rgb(218,218,220)"/><rect x="2.40" y="20.6" width="4.97" height="5.3" fill="rgb(246,246,248)"/><rect x="7.07" y="20.6" width="4.97" height="5.3" fill="rgb(242,242,244)"/><rect x="11.74" y="20.6" width="4.97" height="5.3" fill="rgb(247,247,249)"/><rect x="16.41" y="20.6" width="4.97" height="5.3" fill="rgb(247,247,249)"/><rect x="21.09" y="20.6" width="4.97" height="5.3" fill="rgb(243,243,245)"/><rect x="25.76" y="20.6" width="4.97" height="5.3" fill="rgb(250,250,252)"/><rect x="30.43" y="20.6" width="4.97" height="5.3" fill="rgb(254,254,256)"/></g><rect x="0" y="26.6" width="35.10" height="5.2" fill="#f1f5fb"/></svg>
<svg class="ab" style="left:163.00px;top:54.90px;overflow:visible" width="151.00" height="32" viewBox="0 0 151.00 32"><g filter="url(#mb)"><rect x="0.00" y="10.0" width="5.33" height="5.3" fill="rgb(222,222,224)"/><rect x="5.03" y="10.0" width="5.33" height="5.3" fill="rgb(230,230,232)"/><rect x="10.07" y="10.0" width="5.33" height="5.3" fill="rgb(226,226,228)"/><rect x="15.10" y="10.0" width="5.33" height="5.3" fill="rgb(232,232,234)"/><rect x="20.13" y="10.0" width="5.33" height="5.3" fill="rgb(222,222,224)"/><rect x="25.17" y="10.0" width="5.33" height="5.3" fill="rgb(239,239,241)"/><rect x="30.20" y="10.0" width="5.33" height="5.3" fill="rgb(223,223,225)"/><rect x="35.23" y="10.0" width="5.33" height="5.3" fill="rgb(227,227,229)"/><rect x="40.27" y="10.0" width="5.33" height="5.3" fill="rgb(218,218,220)"/><rect x="45.30" y="10.0" width="5.33" height="5.3" fill="rgb(220,220,222)"/><rect x="50.33" y="10.0" width="5.33" height="5.3" fill="rgb(241,241,243)"/><rect x="55.37" y="10.0" width="5.33" height="5.3" fill="rgb(219,219,221)"/><rect x="60.40" y="10.0" width="5.33" height="5.3" fill="rgb(215,215,217)"/><rect x="65.43" y="10.0" width="5.33" height="5.3" fill="rgb(231,231,233)"/><rect x="70.47" y="10.0" width="5.33" height="5.3" fill="rgb(218,218,220)"/><rect x="75.50" y="10.0" width="5.33" height="5.3" fill="rgb(215,215,217)"/><rect x="80.53" y="10.0" width="5.33" height="5.3" fill="rgb(215,215,217)"/><rect x="85.57" y="10.0" width="5.33" height="5.3" fill="rgb(210,210,212)"/><rect x="90.60" y="10.0" width="5.33" height="5.3" fill="rgb(222,222,224)"/><rect x="95.63" y="10.0" width="5.33" height="5.3" fill="rgb(218,218,220)"/><rect x="100.67" y="10.0" width="5.33" height="5.3" fill="rgb(223,223,225)"/><rect x="105.70" y="10.0" width="5.33" height="5.3" fill="rgb(230,230,232)"/><rect x="110.73" y="10.0" width="5.33" height="5.3" fill="rgb(228,228,230)"/><rect x="115.77" y="10.0" width="5.33" height="5.3" fill="rgb(230,230,232)"/><rect x="120.80" y="10.0" width="5.33" height="5.3" fill="rgb(234,234,236)"/><rect x="125.83" y="10.0" width="5.33" height="5.3" fill="rgb(237,237,239)"/><rect x="130.87" y="10.0" width="5.33" height="5.3" fill="rgb(231,231,233)"/><rect x="135.90" y="10.0" width="5.33" height="5.3" fill="rgb(223,223,225)"/><rect x="140.93" y="10.0" width="5.33" height="5.3" fill="rgb(230,230,232)"/><rect x="145.97" y="10.0" width="5.33" height="5.3" fill="rgb(237,237,239)"/><rect x="0.00" y="15.3" width="5.33" height="5.3" fill="rgb(208,208,210)"/><rect x="5.03" y="15.3" width="5.33" height="5.3" fill="rgb(216,216,218)"/><rect x="10.07" y="15.3" width="5.33" height="5.3" fill="rgb(206,206,208)"/><rect x="15.10" y="15.3" width="5.33" height="5.3" fill="rgb(216,216,218)"/><rect x="20.13" y="15.3" width="5.33" height="5.3" fill="rgb(199,199,201)"/><rect x="25.17" y="15.3" width="5.33" height="5.3" fill="rgb(216,216,218)"/><rect x="30.20" y="15.3" width="5.33" height="5.3" fill="rgb(199,199,201)"/><rect x="35.23" y="15.3" width="5.33" height="5.3" fill="rgb(208,208,210)"/><rect x="40.27" y="15.3" width="5.33" height="5.3" fill="rgb(205,205,207)"/><rect x="45.30" y="15.3" width="5.33" height="5.3" fill="rgb(206,206,208)"/><rect x="50.33" y="15.3" width="5.33" height="5.3" fill="rgb(218,218,220)"/><rect x="55.37" y="15.3" width="5.33" height="5.3" fill="rgb(207,207,209)"/><rect x="60.40" y="15.3" width="5.33" height="5.3" fill="rgb(197,197,199)"/><rect x="65.43" y="15.3" width="5.33" height="5.3" fill="rgb(213,213,215)"/><rect x="70.47" y="15.3" width="5.33" height="5.3" fill="rgb(204,204,206)"/><rect x="75.50" y="15.3" width="5.33" height="5.3" fill="rgb(196,196,198)"/><rect x="80.53" y="15.3" width="5.33" height="5.3" fill="rgb(198,198,200)"/><rect x="85.57" y="15.3" width="5.33" height="5.3" fill="rgb(197,197,199)"/><rect x="90.60" y="15.3" width="5.33" height="5.3" fill="rgb(206,206,208)"/><rect x="95.63" y="15.3" width="5.33" height="5.3" fill="rgb(200,200,202)"/><rect x="100.67" y="15.3" width="5.33" height="5.3" fill="rgb(212,212,214)"/><rect x="105.70" y="15.3" width="5.33" height="5.3" fill="rgb(212,212,214)"/><rect x="110.73" y="15.3" width="5.33" height="5.3" fill="rgb(218,218,220)"/><rect x="115.77" y="15.3" width="5.33" height="5.3" fill="rgb(211,211,213)"/><rect x="120.80" y="15.3" width="5.33" height="5.3" fill="rgb(218,218,220)"/><rect x="125.83" y="15.3" width="5.33" height="5.3" fill="rgb(227,227,229)"/><rect x="130.87" y="15.3" width="5.33" height="5.3" fill="rgb(213,213,215)"/><rect x="135.90" y="15.3" width="5.33" height="5.3" fill="rgb(213,213,215)"/><rect x="140.93" y="15.3" width="5.33" height="5.3" fill="rgb(212,212,214)"/><rect x="145.97" y="15.3" width="5.33" height="5.3" fill="rgb(213,213,215)"/><rect x="0.00" y="20.6" width="5.33" height="5.3" fill="rgb(246,246,248)"/><rect x="5.03" y="20.6" width="5.33" height="5.3" fill="rgb(248,248,250)"/><rect x="10.07" y="20.6" width="5.33" height="5.3" fill="rgb(252,252,254)"/><rect x="15.10" y="20.6" width="5.33" height="5.3" fill="rgb(249,249,251)"/><rect x="20.13" y="20.6" width="5.33" height="5.3" fill="rgb(241,241,243)"/><rect x="25.17" y="20.6" width="5.33" height="5.3" fill="rgb(247,247,249)"/><rect x="30.20" y="20.6" width="5.33" height="5.3" fill="rgb(241,241,243)"/><rect x="35.23" y="20.6" width="5.33" height="5.3" fill="rgb(251,251,253)"/><rect x="40.27" y="20.6" width="5.33" height="5.3" fill="rgb(242,242,244)"/><rect x="45.30" y="20.6" width="5.33" height="5.3" fill="rgb(241,241,243)"/><rect x="50.33" y="20.6" width="5.33" height="5.3" fill="rgb(254,254,256)"/><rect x="55.37" y="20.6" width="5.33" height="5.3" fill="rgb(248,248,250)"/><rect x="60.40" y="20.6" width="5.33" height="5.3" fill="rgb(247,247,249)"/><rect x="65.43" y="20.6" width="5.33" height="5.3" fill="rgb(246,246,248)"/><rect x="70.47" y="20.6" width="5.33" height="5.3" fill="rgb(254,254,256)"/><rect x="75.50" y="20.6" width="5.33" height="5.3" fill="rgb(252,252,254)"/><rect x="80.53" y="20.6" width="5.33" height="5.3" fill="rgb(254,254,256)"/><rect x="85.57" y="20.6" width="5.33" height="5.3" fill="rgb(246,246,248)"/><rect x="90.60" y="20.6" width="5.33" height="5.3" fill="rgb(244,244,246)"/><rect x="95.63" y="20.6" width="5.33" height="5.3" fill="rgb(243,243,245)"/><rect x="100.67" y="20.6" width="5.33" height="5.3" fill="rgb(247,247,249)"/><rect x="105.70" y="20.6" width="5.33" height="5.3" fill="rgb(247,247,249)"/><rect x="110.73" y="20.6" width="5.33" height="5.3" fill="rgb(242,242,244)"/><rect x="115.77" y="20.6" width="5.33" height="5.3" fill="rgb(245,245,247)"/><rect x="120.80" y="20.6" width="5.33" height="5.3" fill="rgb(246,246,248)"/><rect x="125.83" y="20.6" width="5.33" height="5.3" fill="rgb(254,254,256)"/><rect x="130.87" y="20.6" width="5.33" height="5.3" fill="rgb(253,253,255)"/><rect x="135.90" y="20.6" width="5.33" height="5.3" fill="rgb(254,254,256)"/><rect x="140.93" y="20.6" width="5.33" height="5.3" fill="rgb(254,254,256)"/><rect x="145.97" y="20.6" width="5.33" height="5.3" fill="rgb(254,254,256)"/></g><rect x="0" y="26.6" width="151.00" height="5.2" fill="#f1f5fb"/></svg>
<div class="bt" style="left:355.90px;top:57.40px;line-height:28.7px;">R084-…</div>
<div class="bt" style="left:418.90px;top:57.40px;line-height:28.7px;">案卡逻辑</div>
<div class="bt" style="left:498.30px;top:57.40px;line-height:28.7px;">何</div>
<svg class="ab" style="left:502.70px;top:54.90px;overflow:visible" width="33.00" height="32" viewBox="0 0 33.00 32"><g filter="url(#mb)"><rect x="0.00" y="10.0" width="5.38" height="5.3" fill="rgb(220,220,222)"/><rect x="5.08" y="10.0" width="5.38" height="5.3" fill="rgb(248,248,250)"/><rect x="10.17" y="10.0" width="5.38" height="5.3" fill="rgb(225,225,227)"/><rect x="15.25" y="10.0" width="5.38" height="5.3" fill="rgb(235,235,237)"/><rect x="20.33" y="10.0" width="5.38" height="5.3" fill="rgb(237,237,239)"/><rect x="25.42" y="10.0" width="5.38" height="5.3" fill="rgb(236,236,238)"/><rect x="0.00" y="15.3" width="5.38" height="5.3" fill="rgb(206,206,208)"/><rect x="5.08" y="15.3" width="5.38" height="5.3" fill="rgb(233,233,235)"/><rect x="10.17" y="15.3" width="5.38" height="5.3" fill="rgb(204,204,206)"/><rect x="15.25" y="15.3" width="5.38" height="5.3" fill="rgb(220,220,222)"/><rect x="20.33" y="15.3" width="5.38" height="5.3" fill="rgb(224,224,226)"/><rect x="25.42" y="15.3" width="5.38" height="5.3" fill="rgb(217,217,219)"/><rect x="0.00" y="20.6" width="5.38" height="5.3" fill="rgb(247,247,249)"/><rect x="5.08" y="20.6" width="5.38" height="5.3" fill="rgb(241,241,243)"/><rect x="10.17" y="20.6" width="5.38" height="5.3" fill="rgb(247,247,249)"/><rect x="15.25" y="20.6" width="5.38" height="5.3" fill="rgb(251,251,253)"/><rect x="20.33" y="20.6" width="5.38" height="5.3" fill="rgb(249,249,251)"/><rect x="25.42" y="20.6" width="5.38" height="5.3" fill="rgb(241,241,243)"/></g><rect x="0" y="26.6" width="33.00" height="5.2" fill="#f1f5fb"/></svg>
<div class="bt" style="left:562.20px;top:57.40px;line-height:28.7px;">新北区院</div>
<div class="bt" style="left:650.00px;top:57.40px;line-height:28.7px;">第一检察部</div>
<svg class="ab" style="left:736.70px;top:54.90px;overflow:visible" width="32.00" height="32" viewBox="0 0 32.00 32"><g filter="url(#mb)"><rect x="0.00" y="10.0" width="5.63" height="5.3" fill="rgb(238,238,240)"/><rect x="5.33" y="10.0" width="5.63" height="5.3" fill="rgb(222,222,224)"/><rect x="10.67" y="10.0" width="5.63" height="5.3" fill="rgb(227,227,229)"/><rect x="16.00" y="10.0" width="5.63" height="5.3" fill="rgb(248,248,250)"/><rect x="21.33" y="10.0" width="5.63" height="5.3" fill="rgb(228,228,230)"/><rect x="26.67" y="10.0" width="5.63" height="5.3" fill="rgb(220,220,222)"/><rect x="0.00" y="15.3" width="5.63" height="5.3" fill="rgb(215,215,217)"/><rect x="5.33" y="15.3" width="5.63" height="5.3" fill="rgb(202,202,204)"/><rect x="10.67" y="15.3" width="5.63" height="5.3" fill="rgb(209,209,211)"/><rect x="16.00" y="15.3" width="5.63" height="5.3" fill="rgb(233,233,235)"/><rect x="21.33" y="15.3" width="5.63" height="5.3" fill="rgb(215,215,217)"/><rect x="26.67" y="15.3" width="5.63" height="5.3" fill="rgb(202,202,204)"/><rect x="0.00" y="20.6" width="5.63" height="5.3" fill="rgb(243,243,245)"/><rect x="5.33" y="20.6" width="5.63" height="5.3" fill="rgb(253,253,255)"/><rect x="10.67" y="20.6" width="5.63" height="5.3" fill="rgb(248,248,250)"/><rect x="16.00" y="20.6" width="5.63" height="5.3" fill="rgb(249,249,251)"/><rect x="21.33" y="20.6" width="5.63" height="5.3" fill="rgb(249,249,251)"/><rect x="26.67" y="20.6" width="5.63" height="5.3" fill="rgb(253,253,255)"/></g><rect x="0" y="26.6" width="32.00" height="5.2" fill="#f1f5fb"/></svg>
<div class="bt" style="left:801.50px;top:57.40px;line-height:28.7px;">一审公诉案件</div>
<div class="bt" style="left:904.90px;top:57.40px;line-height:28.7px;">2023-07-12</div>
<div class="bt" style="left:984.70px;top:57.40px;line-height:28.7px;">2024-01-26</div>
<div class="bt" style="left:1056.30px;top:57.40px;line-height:28.7px;width:47px;text-align:center;">1</div>
<div class="cb" style="left:13.20px;top:94.95px;border-color:#e6e8ee"></div>
<div class="bt" style="left:40.10px;top:86.10px;line-height:28.7px;width:43.599999999999994px;text-align:center;">4</div>
<div class="bt" style="left:125.70px;top:86.10px;line-height:28.7px;">…</div>
<div class="bt" style="left:155.70px;top:86.10px;line-height:28.7px;">新</div>
<div class="bt" style="left:310.20px;top:86.10px;line-height:28.7px;">9号</div>
<svg class="ab" style="left:89.60px;top:83.60px;overflow:visible" width="35.10" height="32" viewBox="0 0 35.10 32"><g filter="url(#mb)"><rect x="2.40" y="10.0" width="4.97" height="5.3" fill="rgb(247,247,249)"/><rect x="7.07" y="10.0" width="4.97" height="5.3" fill="rgb(217,217,219)"/><rect x="11.74" y="10.0" width="4.97" height="5.3" fill="rgb(218,218,220)"/><rect x="16.41" y="10.0" width="4.97" height="5.3" fill="rgb(225,225,227)"/><rect x="21.09" y="10.0" width="4.97" height="5.3" fill="rgb(216,216,218)"/><rect x="25.76" y="10.0" width="4.97" height="5.3" fill="rgb(218,218,220)"/><rect x="30.43" y="10.0" width="4.97" height="5.3" fill="rgb(226,226,228)"/><rect x="2.40" y="15.3" width="4.97" height="5.3" fill="rgb(231,231,233)"/><rect x="7.07" y="15.3" width="4.97" height="5.3" fill="rgb(206,206,208)"/><rect x="11.74" y="15.3" width="4.97" height="5.3" fill="rgb(202,202,204)"/><rect x="16.41" y="15.3" width="4.97" height="5.3" fill="rgb(202,202,204)"/><rect x="21.09" y="15.3" width="4.97" height="5.3" fill="rgb(200,200,202)"/><rect x="25.76" y="15.3" width="4.97" height="5.3" fill="rgb(200,200,202)"/><rect x="30.43" y="15.3" width="4.97" height="5.3" fill="rgb(204,204,206)"/><rect x="2.40" y="20.6" width="4.97" height="5.3" fill="rgb(251,251,253)"/><rect x="7.07" y="20.6" width="4.97" height="5.3" fill="rgb(242,242,244)"/><rect x="11.74" y="20.6" width="4.97" height="5.3" fill="rgb(243,243,245)"/><rect x="16.41" y="20.6" width="4.97" height="5.3" fill="rgb(246,246,248)"/><rect x="21.09" y="20.6" width="4.97" height="5.3" fill="rgb(250,250,252)"/><rect x="25.76" y="20.6" width="4.97" height="5.3" fill="rgb(250,250,252)"/><rect x="30.43" y="20.6" width="4.97" height="5.3" fill="rgb(252,252,254)"/></g><rect x="0" y="26.6" width="35.10" height="5.2" fill="#f1f5fb"/></svg>
<svg class="ab" style="left:163.00px;top:83.60px;overflow:visible" width="151.00" height="32" viewBox="0 0 151.00 32"><g filter="url(#mb)"><rect x="0.00" y="10.0" width="5.33" height="5.3" fill="rgb(245,245,247)"/><rect x="5.03" y="10.0" width="5.33" height="5.3" fill="rgb(222,222,224)"/><rect x="10.07" y="10.0" width="5.33" height="5.3" fill="rgb(229,229,231)"/><rect x="15.10" y="10.0" width="5.33" height="5.3" fill="rgb(248,248,250)"/><rect x="20.13" y="10.0" width="5.33" height="5.3" fill="rgb(231,231,233)"/><rect x="25.17" y="10.0" width="5.33" height="5.3" fill="rgb(212,212,214)"/><rect x="30.20" y="10.0" width="5.33" height="5.3" fill="rgb(220,220,222)"/><rect x="35.23" y="10.0" width="5.33" height="5.3" fill="rgb(246,246,248)"/><rect x="40.27" y="10.0" width="5.33" height="5.3" fill="rgb(246,246,248)"/><rect x="45.30" y="10.0" width="5.33" height="5.3" fill="rgb(246,246,248)"/><rect x="50.33" y="10.0" width="5.33" height="5.3" fill="rgb(227,227,229)"/><rect x="55.37" y="10.0" width="5.33" height="5.3" fill="rgb(211,211,213)"/><rect x="60.40" y="10.0" width="5.33" height="5.3" fill="rgb(223,223,225)"/><rect x="65.43" y="10.0" width="5.33" height="5.3" fill="rgb(234,234,236)"/><rect x="70.47" y="10.0" width="5.33" height="5.3" fill="rgb(239,239,241)"/><rect x="75.50" y="10.0" width="5.33" height="5.3" fill="rgb(222,222,224)"/><rect x="80.53" y="10.0" width="5.33" height="5.3" fill="rgb(231,231,233)"/><rect x="85.57" y="10.0" width="5.33" height="5.3" fill="rgb(230,230,232)"/><rect x="90.60" y="10.0" width="5.33" height="5.3" fill="rgb(240,240,242)"/><rect x="95.63" y="10.0" width="5.33" height="5.3" fill="rgb(220,220,222)"/><rect x="100.67" y="10.0" width="5.33" height="5.3" fill="rgb(231,231,233)"/><rect x="105.70" y="10.0" width="5.33" height="5.3" fill="rgb(222,222,224)"/><rect x="110.73" y="10.0" width="5.33" height="5.3" fill="rgb(224,224,226)"/><rect x="115.77" y="10.0" width="5.33" height="5.3" fill="rgb(215,215,217)"/><rect x="120.80" y="10.0" width="5.33" height="5.3" fill="rgb(218,218,220)"/><rect x="125.83" y="10.0" width="5.33" height="5.3" fill="rgb(210,210,212)"/><rect x="130.87" y="10.0" width="5.33" height="5.3" fill="rgb(234,234,236)"/><rect x="135.90" y="10.0" width="5.33" height="5.3" fill="rgb(229,229,231)"/><rect x="140.93" y="10.0" width="5.33" height="5.3" fill="rgb(235,235,237)"/><rect x="145.97" y="10.0" width="5.33" height="5.3" fill="rgb(224,224,226)"/><rect x="0.00" y="15.3" width="5.33" height="5.3" fill="rgb(226,226,228)"/><rect x="5.03" y="15.3" width="5.33" height="5.3" fill="rgb(207,207,209)"/><rect x="10.07" y="15.3" width="5.33" height="5.3" fill="rgb(207,207,209)"/><rect x="15.10" y="15.3" width="5.33" height="5.3" fill="rgb(230,230,232)"/><rect x="20.13" y="15.3" width="5.33" height="5.3" fill="rgb(217,217,219)"/><rect x="25.17" y="15.3" width="5.33" height="5.3" fill="rgb(198,198,200)"/><rect x="30.20" y="15.3" width="5.33" height="5.3" fill="rgb(196,196,198)"/><rect x="35.23" y="15.3" width="5.33" height="5.3" fill="rgb(235,235,237)"/><rect x="40.27" y="15.3" width="5.33" height="5.3" fill="rgb(225,225,227)"/><rect x="45.30" y="15.3" width="5.33" height="5.3" fill="rgb(225,225,227)"/><rect x="50.33" y="15.3" width="5.33" height="5.3" fill="rgb(205,205,207)"/><rect x="55.37" y="15.3" width="5.33" height="5.3" fill="rgb(199,199,201)"/><rect x="60.40" y="15.3" width="5.33" height="5.3" fill="rgb(200,200,202)"/><rect x="65.43" y="15.3" width="5.33" height="5.3" fill="rgb(210,210,212)"/><rect x="70.47" y="15.3" width="5.33" height="5.3" fill="rgb(223,223,225)"/><rect x="75.50" y="15.3" width="5.33" height="5.3" fill="rgb(210,210,212)"/><rect x="80.53" y="15.3" width="5.33" height="5.3" fill="rgb(207,207,209)"/><rect x="85.57" y="15.3" width="5.33" height="5.3" fill="rgb(215,215,217)"/><rect x="90.60" y="15.3" width="5.33" height="5.3" fill="rgb(216,216,218)"/><rect x="95.63" y="15.3" width="5.33" height="5.3" fill="rgb(202,202,204)"/><rect x="100.67" y="15.3" width="5.33" height="5.3" fill="rgb(210,210,212)"/><rect x="105.70" y="15.3" width="5.33" height="5.3" fill="rgb(207,207,209)"/><rect x="110.73" y="15.3" width="5.33" height="5.3" fill="rgb(202,202,204)"/><rect x="115.77" y="15.3" width="5.33" height="5.3" fill="rgb(199,199,201)"/><rect x="120.80" y="15.3" width="5.33" height="5.3" fill="rgb(196,196,198)"/><rect x="125.83" y="15.3" width="5.33" height="5.3" fill="rgb(198,198,200)"/><rect x="130.87" y="15.3" width="5.33" height="5.3" fill="rgb(218,218,220)"/><rect x="135.90" y="15.3" width="5.33" height="5.3" fill="rgb(216,216,218)"/><rect x="140.93" y="15.3" width="5.33" height="5.3" fill="rgb(214,214,216)"/><rect x="145.97" y="15.3" width="5.33" height="5.3" fill="rgb(212,212,214)"/><rect x="0.00" y="20.6" width="5.33" height="5.3" fill="rgb(241,241,243)"/><rect x="5.03" y="20.6" width="5.33" height="5.3" fill="rgb(252,252,254)"/><rect x="10.07" y="20.6" width="5.33" height="5.3" fill="rgb(245,245,247)"/><rect x="15.10" y="20.6" width="5.33" height="5.3" fill="rgb(244,244,246)"/><rect x="20.13" y="20.6" width="5.33" height="5.3" fill="rgb(247,247,249)"/><rect x="25.17" y="20.6" width="5.33" height="5.3" fill="rgb(241,241,243)"/><rect x="30.20" y="20.6" width="5.33" height="5.3" fill="rgb(240,240,242)"/><rect x="35.23" y="20.6" width="5.33" height="5.3" fill="rgb(254,254,256)"/><rect x="40.27" y="20.6" width="5.33" height="5.3" fill="rgb(245,245,247)"/><rect x="45.30" y="20.6" width="5.33" height="5.3" fill="rgb(250,250,252)"/><rect x="50.33" y="20.6" width="5.33" height="5.3" fill="rgb(254,254,256)"/><rect x="55.37" y="20.6" width="5.33" height="5.3" fill="rgb(249,249,251)"/><rect x="60.40" y="20.6" width="5.33" height="5.3" fill="rgb(240,240,242)"/><rect x="65.43" y="20.6" width="5.33" height="5.3" fill="rgb(243,243,245)"/><rect x="70.47" y="20.6" width="5.33" height="5.3" fill="rgb(244,244,246)"/><rect x="75.50" y="20.6" width="5.33" height="5.3" fill="rgb(250,250,252)"/><rect x="80.53" y="20.6" width="5.33" height="5.3" fill="rgb(244,244,246)"/><rect x="85.57" y="20.6" width="5.33" height="5.3" fill="rgb(245,245,247)"/><rect x="90.60" y="20.6" width="5.33" height="5.3" fill="rgb(243,243,245)"/><rect x="95.63" y="20.6" width="5.33" height="5.3" fill="rgb(250,250,252)"/><rect x="100.67" y="20.6" width="5.33" height="5.3" fill="rgb(246,246,248)"/><rect x="105.70" y="20.6" width="5.33" height="5.3" fill="rgb(249,249,251)"/><rect x="110.73" y="20.6" width="5.33" height="5.3" fill="rgb(242,242,244)"/><rect x="115.77" y="20.6" width="5.33" height="5.3" fill="rgb(248,248,250)"/><rect x="120.80" y="20.6" width="5.33" height="5.3" fill="rgb(241,241,243)"/><rect x="125.83" y="20.6" width="5.33" height="5.3" fill="rgb(246,246,248)"/><rect x="130.87" y="20.6" width="5.33" height="5.3" fill="rgb(248,248,250)"/><rect x="135.90" y="20.6" width="5.33" height="5.3" fill="rgb(247,247,249)"/><rect x="140.93" y="20.6" width="5.33" height="5.3" fill="rgb(250,250,252)"/><rect x="145.97" y="20.6" width="5.33" height="5.3" fill="rgb(243,243,245)"/></g><rect x="0" y="26.6" width="151.00" height="5.2" fill="#f1f5fb"/></svg>
<div class="bt" style="left:355.90px;top:86.10px;line-height:28.7px;">R144-…</div>
<div class="bt" style="left:418.90px;top:86.10px;line-height:28.7px;">案卡逻辑</div>
<div class="bt" style="left:498.30px;top:86.10px;line-height:28.7px;">徐</div>
<svg class="ab" style="left:502.70px;top:83.60px;overflow:visible" width="33.00" height="32" viewBox="0 0 33.00 32"><g filter="url(#mb)"><rect x="0.00" y="10.0" width="5.38" height="5.3" fill="rgb(228,228,230)"/><rect x="5.08" y="10.0" width="5.38" height="5.3" fill="rgb(212,212,214)"/><rect x="10.17" y="10.0" width="5.38" height="5.3" fill="rgb(233,233,235)"/><rect x="15.25" y="10.0" width="5.38" height="5.3" fill="rgb(215,215,217)"/><rect x="20.33" y="10.0" width="5.38" height="5.3" fill="rgb(226,226,228)"/><rect x="25.42" y="10.0" width="5.38" height="5.3" fill="rgb(240,240,242)"/><rect x="0.00" y="15.3" width="5.38" height="5.3" fill="rgb(208,208,210)"/><rect x="5.08" y="15.3" width="5.38" height="5.3" fill="rgb(196,196,198)"/><rect x="10.17" y="15.3" width="5.38" height="5.3" fill="rgb(223,223,225)"/><rect x="15.25" y="15.3" width="5.38" height="5.3" fill="rgb(204,204,206)"/><rect x="20.33" y="15.3" width="5.38" height="5.3" fill="rgb(212,212,214)"/><rect x="25.42" y="15.3" width="5.38" height="5.3" fill="rgb(226,226,228)"/><rect x="0.00" y="20.6" width="5.38" height="5.3" fill="rgb(244,244,246)"/><rect x="5.08" y="20.6" width="5.38" height="5.3" fill="rgb(254,254,256)"/><rect x="10.17" y="20.6" width="5.38" height="5.3" fill="rgb(245,245,247)"/><rect x="15.25" y="20.6" width="5.38" height="5.3" fill="rgb(248,248,250)"/><rect x="20.33" y="20.6" width="5.38" height="5.3" fill="rgb(248,248,250)"/><rect x="25.42" y="20.6" width="5.38" height="5.3" fill="rgb(248,248,250)"/></g><rect x="0" y="26.6" width="33.00" height="5.2" fill="#f1f5fb"/></svg>
<div class="bt" style="left:562.20px;top:86.10px;line-height:28.7px;">新北区院</div>
<div class="bt" style="left:650.00px;top:86.10px;line-height:28.7px;">第四检察部</div>
<svg class="ab" style="left:736.70px;top:83.60px;overflow:visible" width="32.00" height="32" viewBox="0 0 32.00 32"><g filter="url(#mb)"><rect x="0.00" y="10.0" width="5.30" height="5.3" fill="rgb(228,228,230)"/><rect x="5.00" y="10.0" width="5.30" height="5.3" fill="rgb(216,216,218)"/><rect x="10.00" y="10.0" width="5.30" height="5.3" fill="rgb(228,228,230)"/><rect x="15.00" y="10.0" width="5.30" height="5.3" fill="rgb(244,244,246)"/><rect x="20.00" y="10.0" width="5.30" height="5.3" fill="rgb(218,218,220)"/><rect x="0.00" y="15.3" width="5.30" height="5.3" fill="rgb(212,212,214)"/><rect x="5.00" y="15.3" width="5.30" height="5.3" fill="rgb(199,199,201)"/><rect x="10.00" y="15.3" width="5.30" height="5.3" fill="rgb(216,216,218)"/><rect x="15.00" y="15.3" width="5.30" height="5.3" fill="rgb(221,221,223)"/><rect x="20.00" y="15.3" width="5.30" height="5.3" fill="rgb(201,201,203)"/><rect x="0.00" y="20.6" width="5.30" height="5.3" fill="rgb(248,248,250)"/><rect x="5.00" y="20.6" width="5.30" height="5.3" fill="rgb(249,249,251)"/><rect x="10.00" y="20.6" width="5.30" height="5.3" fill="rgb(249,249,251)"/><rect x="15.00" y="20.6" width="5.30" height="5.3" fill="rgb(240,240,242)"/><rect x="20.00" y="20.6" width="5.30" height="5.3" fill="rgb(246,246,248)"/></g><rect x="0" y="26.6" width="32.00" height="5.2" fill="#f1f5fb"/></svg>
<div class="bt" style="left:801.50px;top:86.10px;line-height:28.7px;">一审公诉案件</div>
<div class="bt" style="left:904.90px;top:86.10px;line-height:28.7px;">2023-07-21</div>
<div class="bt" style="left:984.70px;top:86.10px;line-height:28.7px;">2024-01-26</div>
<div class="bt" style="left:1056.30px;top:86.10px;line-height:28.7px;width:47px;text-align:center;">1</div>
<div class="cb" style="left:13.20px;top:123.65px;border-color:#e6e8ee"></div>
<div class="bt" style="left:40.10px;top:114.80px;line-height:28.7px;width:43.599999999999994px;text-align:center;">5</div>
<div class="bt" style="left:125.70px;top:114.80px;line-height:28.7px;">…</div>
<div class="bt" style="left:155.70px;top:114.80px;line-height:28.7px;">新</div>
<div class="bt" style="left:310.20px;top:114.80px;line-height:28.7px;">9号</div>
<svg class="ab" style="left:89.60px;top:112.30px;overflow:visible" width="35.10" height="32" viewBox="0 0 35.10 32"><g filter="url(#mb)"><rect x="2.40" y="10.0" width="4.97" height="5.3" fill="rgb(219,219,221)"/><rect x="7.07" y="10.0" width="4.97" height="5.3" fill="rgb(218,218,220)"/><rect x="11.74" y="10.0" width="4.97" height="5.3" fill="rgb(229,229,231)"/><rect x="16.41" y="10.0" width="4.97" height="5.3" fill="rgb(224,224,226)"/><rect x="21.09" y="10.0" width="4.97" height="5.3" fill="rgb(232,232,234)"/><rect x="25.76" y="10.0" width="4.97" height="5.3" fill="rgb(227,227,229)"/><rect x="30.43" y="10.0" width="4.97" height="5.3" fill="rgb(225,225,227)"/><rect x="2.40" y="15.3" width="4.97" height="5.3" fill="rgb(209,209,211)"/><rect x="7.07" y="15.3" width="4.97" height="5.3" fill="rgb(208,208,210)"/><rect x="11.74" y="15.3" width="4.97" height="5.3" fill="rgb(207,207,209)"/><rect x="16.41" y="15.3" width="4.97" height="5.3" fill="rgb(211,211,213)"/><rect x="21.09" y="15.3" width="4.97" height="5.3" fill="rgb(213,213,215)"/><rect x="25.76" y="15.3" width="4.97" height="5.3" fill="rgb(217,217,219)"/><rect x="30.43" y="15.3" width="4.97" height="5.3" fill="rgb(205,205,207)"/><rect x="2.40" y="20.6" width="4.97" height="5.3" fill="rgb(242,242,244)"/><rect x="7.07" y="20.6" width="4.97" height="5.3" fill="rgb(246,246,248)"/><rect x="11.74" y="20.6" width="4.97" height="5.3" fill="rgb(252,252,254)"/><rect x="16.41" y="20.6" width="4.97" height="5.3" fill="rgb(250,250,252)"/><rect x="21.09" y="20.6" width="4.97" height="5.3" fill="rgb(246,246,248)"/><rect x="25.76" y="20.6" width="4.97" height="5.3" fill="rgb(240,240,242)"/><rect x="30.43" y="20.6" width="4.97" height="5.3" fill="rgb(254,254,256)"/></g><rect x="0" y="26.6" width="35.10" height="5.2" fill="#f1f5fb"/></svg>
<svg class="ab" style="left:163.00px;top:112.30px;overflow:visible" width="151.00" height="32" viewBox="0 0 151.00 32"><g filter="url(#mb)"><rect x="0.00" y="10.0" width="5.33" height="5.3" fill="rgb(232,232,234)"/><rect x="5.03" y="10.0" width="5.33" height="5.3" fill="rgb(243,243,245)"/><rect x="10.07" y="10.0" width="5.33" height="5.3" fill="rgb(248,248,250)"/><rect x="15.10" y="10.0" width="5.33" height="5.3" fill="rgb(231,231,233)"/><rect x="20.13" y="10.0" width="5.33" height="5.3" fill="rgb(213,213,215)"/><rect x="25.17" y="10.0" width="5.33" height="5.3" fill="rgb(243,243,245)"/><rect x="30.20" y="10.0" width="5.33" height="5.3" fill="rgb(220,220,222)"/><rect x="35.23" y="10.0" width="5.33" height="5.3" fill="rgb(237,237,239)"/><rect x="40.27" y="10.0" width="5.33" height="5.3" fill="rgb(213,213,215)"/><rect x="45.30" y="10.0" width="5.33" height="5.3" fill="rgb(247,247,249)"/><rect x="50.33" y="10.0" width="5.33" height="5.3" fill="rgb(218,218,220)"/><rect x="55.37" y="10.0" width="5.33" height="5.3" fill="rgb(217,217,219)"/><rect x="60.40" y="10.0" width="5.33" height="5.3" fill="rgb(218,218,220)"/><rect x="65.43" y="10.0" width="5.33" height="5.3" fill="rgb(210,210,212)"/><rect x="70.47" y="10.0" width="5.33" height="5.3" fill="rgb(221,221,223)"/><rect x="75.50" y="10.0" width="5.33" height="5.3" fill="rgb(229,229,231)"/><rect x="80.53" y="10.0" width="5.33" height="5.3" fill="rgb(227,227,229)"/><rect x="85.57" y="10.0" width="5.33" height="5.3" fill="rgb(226,226,228)"/><rect x="90.60" y="10.0" width="5.33" height="5.3" fill="rgb(211,211,213)"/><rect x="95.63" y="10.0" width="5.33" height="5.3" fill="rgb(222,222,224)"/><rect x="100.67" y="10.0" width="5.33" height="5.3" fill="rgb(210,210,212)"/><rect x="105.70" y="10.0" width="5.33" height="5.3" fill="rgb(229,229,231)"/><rect x="110.73" y="10.0" width="5.33" height="5.3" fill="rgb(235,235,237)"/><rect x="115.77" y="10.0" width="5.33" height="5.3" fill="rgb(216,216,218)"/><rect x="120.80" y="10.0" width="5.33" height="5.3" fill="rgb(235,235,237)"/><rect x="125.83" y="10.0" width="5.33" height="5.3" fill="rgb(231,231,233)"/><rect x="130.87" y="10.0" width="5.33" height="5.3" fill="rgb(236,236,238)"/><rect x="135.90" y="10.0" width="5.33" height="5.3" fill="rgb(218,218,220)"/><rect x="140.93" y="10.0" width="5.33" height="5.3" fill="rgb(220,220,222)"/><rect x="145.97" y="10.0" width="5.33" height="5.3" fill="rgb(233,233,235)"/><rect x="0.00" y="15.3" width="5.33" height="5.3" fill="rgb(208,208,210)"/><rect x="5.03" y="15.3" width="5.33" height="5.3" fill="rgb(230,230,232)"/><rect x="10.07" y="15.3" width="5.33" height="5.3" fill="rgb(227,227,229)"/><rect x="15.10" y="15.3" width="5.33" height="5.3" fill="rgb(211,211,213)"/><rect x="20.13" y="15.3" width="5.33" height="5.3" fill="rgb(203,203,205)"/><rect x="25.17" y="15.3" width="5.33" height="5.3" fill="rgb(223,223,225)"/><rect x="30.20" y="15.3" width="5.33" height="5.3" fill="rgb(210,210,212)"/><rect x="35.23" y="15.3" width="5.33" height="5.3" fill="rgb(227,227,229)"/><rect x="40.27" y="15.3" width="5.33" height="5.3" fill="rgb(199,199,201)"/><rect x="45.30" y="15.3" width="5.33" height="5.3" fill="rgb(233,233,235)"/><rect x="50.33" y="15.3" width="5.33" height="5.3" fill="rgb(202,202,204)"/><rect x="55.37" y="15.3" width="5.33" height="5.3" fill="rgb(207,207,209)"/><rect x="60.40" y="15.3" width="5.33" height="5.3" fill="rgb(199,199,201)"/><rect x="65.43" y="15.3" width="5.33" height="5.3" fill="rgb(200,200,202)"/><rect x="70.47" y="15.3" width="5.33" height="5.3" fill="rgb(210,210,212)"/><rect x="75.50" y="15.3" width="5.33" height="5.3" fill="rgb(216,216,218)"/><rect x="80.53" y="15.3" width="5.33" height="5.3" fill="rgb(209,209,211)"/><rect x="85.57" y="15.3" width="5.33" height="5.3" fill="rgb(212,212,214)"/><rect x="90.60" y="15.3" width="5.33" height="5.3" fill="rgb(200,200,202)"/><rect x="95.63" y="15.3" width="5.33" height="5.3" fill="rgb(200,200,202)"/><rect x="100.67" y="15.3" width="5.33" height="5.3" fill="rgb(199,199,201)"/><rect x="105.70" y="15.3" width="5.33" height="5.3" fill="rgb(205,205,207)"/><rect x="110.73" y="15.3" width="5.33" height="5.3" fill="rgb(215,215,217)"/><rect x="115.77" y="15.3" width="5.33" height="5.3" fill="rgb(204,204,206)"/><rect x="120.80" y="15.3" width="5.33" height="5.3" fill="rgb(217,217,219)"/><rect x="125.83" y="15.3" width="5.33" height="5.3" fill="rgb(218,218,220)"/><rect x="130.87" y="15.3" width="5.33" height="5.3" fill="rgb(216,216,218)"/><rect x="135.90" y="15.3" width="5.33" height="5.3" fill="rgb(203,203,205)"/><rect x="140.93" y="15.3" width="5.33" height="5.3" fill="rgb(203,203,205)"/><rect x="145.97" y="15.3" width="5.33" height="5.3" fill="rgb(216,216,218)"/><rect x="0.00" y="20.6" width="5.33" height="5.3" fill="rgb(245,245,247)"/><rect x="5.03" y="20.6" width="5.33" height="5.3" fill="rgb(243,243,245)"/><rect x="10.07" y="20.6" width="5.33" height="5.3" fill="rgb(245,245,247)"/><rect x="15.10" y="20.6" width="5.33" height="5.3" fill="rgb(245,245,247)"/><rect x="20.13" y="20.6" width="5.33" height="5.3" fill="rgb(247,247,249)"/><rect x="25.17" y="20.6" width="5.33" height="5.3" fill="rgb(251,251,253)"/><rect x="30.20" y="20.6" width="5.33" height="5.3" fill="rgb(242,242,244)"/><rect x="35.23" y="20.6" width="5.33" height="5.3" fill="rgb(253,253,255)"/><rect x="40.27" y="20.6" width="5.33" height="5.3" fill="rgb(253,253,255)"/><rect x="45.30" y="20.6" width="5.33" height="5.3" fill="rgb(241,241,243)"/><rect x="50.33" y="20.6" width="5.33" height="5.3" fill="rgb(252,252,254)"/><rect x="55.37" y="20.6" width="5.33" height="5.3" fill="rgb(241,241,243)"/><rect x="60.40" y="20.6" width="5.33" height="5.3" fill="rgb(247,247,249)"/><rect x="65.43" y="20.6" width="5.33" height="5.3" fill="rgb(252,252,254)"/><rect x="70.47" y="20.6" width="5.33" height="5.3" fill="rgb(253,253,255)"/><rect x="75.50" y="20.6" width="5.33" height="5.3" fill="rgb(249,249,251)"/><rect x="80.53" y="20.6" width="5.33" height="5.3" fill="rgb(253,253,255)"/><rect x="85.57" y="20.6" width="5.33" height="5.3" fill="rgb(252,252,254)"/><rect x="90.60" y="20.6" width="5.33" height="5.3" fill="rgb(252,252,254)"/><rect x="95.63" y="20.6" width="5.33" height="5.3" fill="rgb(243,243,245)"/><rect x="100.67" y="20.6" width="5.33" height="5.3" fill="rgb(247,247,249)"/><rect x="105.70" y="20.6" width="5.33" height="5.3" fill="rgb(246,246,248)"/><rect x="110.73" y="20.6" width="5.33" height="5.3" fill="rgb(251,251,253)"/><rect x="115.77" y="20.6" width="5.33" height="5.3" fill="rgb(244,244,246)"/><rect x="120.80" y="20.6" width="5.33" height="5.3" fill="rgb(246,246,248)"/><rect x="125.83" y="20.6" width="5.33" height="5.3" fill="rgb(252,252,254)"/><rect x="130.87" y="20.6" width="5.33" height="5.3" fill="rgb(242,242,244)"/><rect x="135.90" y="20.6" width="5.33" height="5.3" fill="rgb(245,245,247)"/><rect x="140.93" y="20.6" width="5.33" height="5.3" fill="rgb(242,242,244)"/><rect x="145.97" y="20.6" width="5.33" height="5.3" fill="rgb(250,250,252)"/></g><rect x="0" y="26.6" width="151.00" height="5.2" fill="#f1f5fb"/></svg>
<div class="bt" style="left:355.90px;top:114.80px;line-height:28.7px;">R144-…</div>
<div class="bt" style="left:418.90px;top:114.80px;line-height:28.7px;">案卡逻辑</div>
<div class="bt" style="left:498.30px;top:114.80px;line-height:28.7px;">赵</div>
<svg class="ab" style="left:502.70px;top:112.30px;overflow:visible" width="33.00" height="32" viewBox="0 0 33.00 32"><g filter="url(#mb)"><rect x="0.00" y="10.0" width="5.38" height="5.3" fill="rgb(233,233,235)"/><rect x="5.08" y="10.0" width="5.38" height="5.3" fill="rgb(224,224,226)"/><rect x="10.17" y="10.0" width="5.38" height="5.3" fill="rgb(217,217,219)"/><rect x="15.25" y="10.0" width="5.38" height="5.3" fill="rgb(226,226,228)"/><rect x="20.33" y="10.0" width="5.38" height="5.3" fill="rgb(229,229,231)"/><rect x="25.42" y="10.0" width="5.38" height="5.3" fill="rgb(215,215,217)"/><rect x="0.00" y="15.3" width="5.38" height="5.3" fill="rgb(215,215,217)"/><rect x="5.08" y="15.3" width="5.38" height="5.3" fill="rgb(213,213,215)"/><rect x="10.17" y="15.3" width="5.38" height="5.3" fill="rgb(201,201,203)"/><rect x="15.25" y="15.3" width="5.38" height="5.3" fill="rgb(207,207,209)"/><rect x="20.33" y="15.3" width="5.38" height="5.3" fill="rgb(210,210,212)"/><rect x="25.42" y="15.3" width="5.38" height="5.3" fill="rgb(198,198,200)"/><rect x="0.00" y="20.6" width="5.38" height="5.3" fill="rgb(253,253,255)"/><rect x="5.08" y="20.6" width="5.38" height="5.3" fill="rgb(250,250,252)"/><rect x="10.17" y="20.6" width="5.38" height="5.3" fill="rgb(247,247,249)"/><rect x="15.25" y="20.6" width="5.38" height="5.3" fill="rgb(244,244,246)"/><rect x="20.33" y="20.6" width="5.38" height="5.3" fill="rgb(253,253,255)"/><rect x="25.42" y="20.6" width="5.38" height="5.3" fill="rgb(252,252,254)"/></g><rect x="0" y="26.6" width="33.00" height="5.2" fill="#f1f5fb"/></svg>
<div class="bt" style="left:562.20px;top:114.80px;line-height:28.7px;">新北区院</div>
<div class="bt" style="left:650.00px;top:114.80px;line-height:28.7px;">第四检察部</div>
<svg class="ab" style="left:736.70px;top:112.30px;overflow:visible" width="32.00" height="32" viewBox="0 0 32.00 32"><g filter="url(#mb)"><rect x="0.00" y="10.0" width="5.30" height="5.3" fill="rgb(242,242,244)"/><rect x="5.00" y="10.0" width="5.30" height="5.3" fill="rgb(232,232,234)"/><rect x="10.00" y="10.0" width="5.30" height="5.3" fill="rgb(238,238,240)"/><rect x="15.00" y="10.0" width="5.30" height="5.3" fill="rgb(239,239,241)"/><rect x="20.00" y="10.0" width="5.30" height="5.3" fill="rgb(215,215,217)"/><rect x="0.00" y="15.3" width="5.30" height="5.3" fill="rgb(229,229,231)"/><rect x="5.00" y="15.3" width="5.30" height="5.3" fill="rgb(217,217,219)"/><rect x="10.00" y="15.3" width="5.30" height="5.3" fill="rgb(218,218,220)"/><rect x="15.00" y="15.3" width="5.30" height="5.3" fill="rgb(218,218,220)"/><rect x="20.00" y="15.3" width="5.30" height="5.3" fill="rgb(200,200,202)"/><rect x="0.00" y="20.6" width="5.30" height="5.3" fill="rgb(245,245,247)"/><rect x="5.00" y="20.6" width="5.30" height="5.3" fill="rgb(254,254,256)"/><rect x="10.00" y="20.6" width="5.30" height="5.3" fill="rgb(241,241,243)"/><rect x="15.00" y="20.6" width="5.30" height="5.3" fill="rgb(245,245,247)"/><rect x="20.00" y="20.6" width="5.30" height="5.3" fill="rgb(251,251,253)"/></g><rect x="0" y="26.6" width="32.00" height="5.2" fill="#f1f5fb"/></svg>
<div class="bt" style="left:801.50px;top:114.80px;line-height:28.7px;">一审公诉案件</div>
<div class="bt" style="left:904.90px;top:114.80px;line-height:28.7px;">2023-07-21</div>
<div class="bt" style="left:984.70px;top:114.80px;line-height:28.7px;">2024-01-26</div>
<div class="bt" style="left:1056.30px;top:114.80px;line-height:28.7px;width:47px;text-align:center;">1</div>
<div class="cb" style="left:13.20px;top:152.35px;border-color:#e6e8ee"></div>
<div class="bt" style="left:40.10px;top:143.50px;line-height:28.7px;width:43.599999999999994px;text-align:center;">6</div>
<div class="bt" style="left:125.70px;top:143.50px;line-height:28.7px;">…</div>
<div class="bt" style="left:155.70px;top:143.50px;line-height:28.7px;">新</div>
<div class="bt" style="left:310.20px;top:143.50px;line-height:28.7px;">2号</div>
<svg class="ab" style="left:89.60px;top:141.00px;overflow:visible" width="35.10" height="32" viewBox="0 0 35.10 32"><g filter="url(#mb)"><rect x="2.40" y="10.0" width="4.97" height="5.3" fill="rgb(238,238,240)"/><rect x="7.07" y="10.0" width="4.97" height="5.3" fill="rgb(232,232,234)"/><rect x="11.74" y="10.0" width="4.97" height="5.3" fill="rgb(220,220,222)"/><rect x="16.41" y="10.0" width="4.97" height="5.3" fill="rgb(220,220,222)"/><rect x="21.09" y="10.0" width="4.97" height="5.3" fill="rgb(223,223,225)"/><rect x="25.76" y="10.0" width="4.97" height="5.3" fill="rgb(228,228,230)"/><rect x="30.43" y="10.0" width="4.97" height="5.3" fill="rgb(226,226,228)"/><rect x="2.40" y="15.3" width="4.97" height="5.3" fill="rgb(215,215,217)"/><rect x="7.07" y="15.3" width="4.97" height="5.3" fill="rgb(217,217,219)"/><rect x="11.74" y="15.3" width="4.97" height="5.3" fill="rgb(210,210,212)"/><rect x="16.41" y="15.3" width="4.97" height="5.3" fill="rgb(205,205,207)"/><rect x="21.09" y="15.3" width="4.97" height="5.3" fill="rgb(203,203,205)"/><rect x="25.76" y="15.3" width="4.97" height="5.3" fill="rgb(212,212,214)"/><rect x="30.43" y="15.3" width="4.97" height="5.3" fill="rgb(207,207,209)"/><rect x="2.40" y="20.6" width="4.97" height="5.3" fill="rgb(246,246,248)"/><rect x="7.07" y="20.6" width="4.97" height="5.3" fill="rgb(252,252,254)"/><rect x="11.74" y="20.6" width="4.97" height="5.3" fill="rgb(243,243,245)"/><rect x="16.41" y="20.6" width="4.97" height="5.3" fill="rgb(251,251,253)"/><rect x="21.09" y="20.6" width="4.97" height="5.3" fill="rgb(249,249,251)"/><rect x="25.76" y="20.6" width="4.97" height="5.3" fill="rgb(245,245,247)"/><rect x="30.43" y="20.6" width="4.97" height="5.3" fill="rgb(252,252,254)"/></g><rect x="0" y="26.6" width="35.10" height="5.2" fill="#f1f5fb"/></svg>
<svg class="ab" style="left:163.00px;top:141.00px;overflow:visible" width="151.00" height="32" viewBox="0 0 151.00 32"><g filter="url(#mb)"><rect x="0.00" y="10.0" width="5.33" height="5.3" fill="rgb(224,224,226)"/><rect x="5.03" y="10.0" width="5.33" height="5.3" fill="rgb(230,230,232)"/><rect x="10.07" y="10.0" width="5.33" height="5.3" fill="rgb(222,222,224)"/><rect x="15.10" y="10.0" width="5.33" height="5.3" fill="rgb(217,217,219)"/><rect x="20.13" y="10.0" width="5.33" height="5.3" fill="rgb(216,216,218)"/><rect x="25.17" y="10.0" width="5.33" height="5.3" fill="rgb(234,234,236)"/><rect x="30.20" y="10.0" width="5.33" height="5.3" fill="rgb(217,217,219)"/><rect x="35.23" y="10.0" width="5.33" height="5.3" fill="rgb(236,236,238)"/><rect x="40.27" y="10.0" width="5.33" height="5.3" fill="rgb(225,225,227)"/><rect x="45.30" y="10.0" width="5.33" height="5.3" fill="rgb(248,248,250)"/><rect x="50.33" y="10.0" width="5.33" height="5.3" fill="rgb(210,210,212)"/><rect x="55.37" y="10.0" width="5.33" height="5.3" fill="rgb(219,219,221)"/><rect x="60.40" y="10.0" width="5.33" height="5.3" fill="rgb(219,219,221)"/><rect x="65.43" y="10.0" width="5.33" height="5.3" fill="rgb(240,240,242)"/><rect x="70.47" y="10.0" width="5.33" height="5.3" fill="rgb(248,248,250)"/><rect x="75.50" y="10.0" width="5.33" height="5.3" fill="rgb(221,221,223)"/><rect x="80.53" y="10.0" width="5.33" height="5.3" fill="rgb(226,226,228)"/><rect x="85.57" y="10.0" width="5.33" height="5.3" fill="rgb(224,224,226)"/><rect x="90.60" y="10.0" width="5.33" height="5.3" fill="rgb(230,230,232)"/><rect x="95.63" y="10.0" width="5.33" height="5.3" fill="rgb(216,216,218)"/><rect x="100.67" y="10.0" width="5.33" height="5.3" fill="rgb(228,228,230)"/><rect x="105.70" y="10.0" width="5.33" height="5.3" fill="rgb(212,212,214)"/><rect x="110.73" y="10.0" width="5.33" height="5.3" fill="rgb(218,218,220)"/><rect x="115.77" y="10.0" width="5.33" height="5.3" fill="rgb(228,228,230)"/><rect x="120.80" y="10.0" width="5.33" height="5.3" fill="rgb(210,210,212)"/><rect x="125.83" y="10.0" width="5.33" height="5.3" fill="rgb(218,218,220)"/><rect x="130.87" y="10.0" width="5.33" height="5.3" fill="rgb(225,225,227)"/><rect x="135.90" y="10.0" width="5.33" height="5.3" fill="rgb(234,234,236)"/><rect x="140.93" y="10.0" width="5.33" height="5.3" fill="rgb(220,220,222)"/><rect x="145.97" y="10.0" width="5.33" height="5.3" fill="rgb(221,221,223)"/><rect x="0.00" y="15.3" width="5.33" height="5.3" fill="rgb(200,200,202)"/><rect x="5.03" y="15.3" width="5.33" height="5.3" fill="rgb(214,214,216)"/><rect x="10.07" y="15.3" width="5.33" height="5.3" fill="rgb(198,198,200)"/><rect x="15.10" y="15.3" width="5.33" height="5.3" fill="rgb(205,205,207)"/><rect x="20.13" y="15.3" width="5.33" height="5.3" fill="rgb(203,203,205)"/><rect x="25.17" y="15.3" width="5.33" height="5.3" fill="rgb(213,213,215)"/><rect x="30.20" y="15.3" width="5.33" height="5.3" fill="rgb(205,205,207)"/><rect x="35.23" y="15.3" width="5.33" height="5.3" fill="rgb(216,216,218)"/><rect x="40.27" y="15.3" width="5.33" height="5.3" fill="rgb(209,209,211)"/><rect x="45.30" y="15.3" width="5.33" height="5.3" fill="rgb(229,229,231)"/><rect x="50.33" y="15.3" width="5.33" height="5.3" fill="rgb(198,198,200)"/><rect x="55.37" y="15.3" width="5.33" height="5.3" fill="rgb(204,204,206)"/><rect x="60.40" y="15.3" width="5.33" height="5.3" fill="rgb(206,206,208)"/><rect x="65.43" y="15.3" width="5.33" height="5.3" fill="rgb(224,224,226)"/><rect x="70.47" y="15.3" width="5.33" height="5.3" fill="rgb(233,233,235)"/><rect x="75.50" y="15.3" width="5.33" height="5.3" fill="rgb(203,203,205)"/><rect x="80.53" y="15.3" width="5.33" height="5.3" fill="rgb(212,212,214)"/><rect x="85.57" y="15.3" width="5.33" height="5.3" fill="rgb(210,210,212)"/><rect x="90.60" y="15.3" width="5.33" height="5.3" fill="rgb(206,206,208)"/><rect x="95.63" y="15.3" width="5.33" height="5.3" fill="rgb(206,206,208)"/><rect x="100.67" y="15.3" width="5.33" height="5.3" fill="rgb(211,211,213)"/><rect x="105.70" y="15.3" width="5.33" height="5.3" fill="rgb(198,198,200)"/><rect x="110.73" y="15.3" width="5.33" height="5.3" fill="rgb(197,197,199)"/><rect x="115.77" y="15.3" width="5.33" height="5.3" fill="rgb(217,217,219)"/><rect x="120.80" y="15.3" width="5.33" height="5.3" fill="rgb(196,196,198)"/><rect x="125.83" y="15.3" width="5.33" height="5.3" fill="rgb(198,198,200)"/><rect x="130.87" y="15.3" width="5.33" height="5.3" fill="rgb(213,213,215)"/><rect x="135.90" y="15.3" width="5.33" height="5.3" fill="rgb(212,212,214)"/><rect x="140.93" y="15.3" width="5.33" height="5.3" fill="rgb(196,196,198)"/><rect x="145.97" y="15.3" width="5.33" height="5.3" fill="rgb(209,209,211)"/><rect x="0.00" y="20.6" width="5.33" height="5.3" fill="rgb(254,254,256)"/><rect x="5.03" y="20.6" width="5.33" height="5.3" fill="rgb(240,240,242)"/><rect x="10.07" y="20.6" width="5.33" height="5.3" fill="rgb(252,252,254)"/><rect x="15.10" y="20.6" width="5.33" height="5.3" fill="rgb(247,247,249)"/><rect x="20.13" y="20.6" width="5.33" height="5.3" fill="rgb(240,240,242)"/><rect x="25.17" y="20.6" width="5.33" height="5.3" fill="rgb(249,249,251)"/><rect x="30.20" y="20.6" width="5.33" height="5.3" fill="rgb(247,247,249)"/><rect x="35.23" y="20.6" width="5.33" height="5.3" fill="rgb(254,254,256)"/><rect x="40.27" y="20.6" width="5.33" height="5.3" fill="rgb(252,252,254)"/><rect x="45.30" y="20.6" width="5.33" height="5.3" fill="rgb(240,240,242)"/><rect x="50.33" y="20.6" width="5.33" height="5.3" fill="rgb(245,245,247)"/><rect x="55.37" y="20.6" width="5.33" height="5.3" fill="rgb(241,241,243)"/><rect x="60.40" y="20.6" width="5.33" height="5.3" fill="rgb(243,243,245)"/><rect x="65.43" y="20.6" width="5.33" height="5.3" fill="rgb(242,242,244)"/><rect x="70.47" y="20.6" width="5.33" height="5.3" fill="rgb(245,245,247)"/><rect x="75.50" y="20.6" width="5.33" height="5.3" fill="rgb(243,243,245)"/><rect x="80.53" y="20.6" width="5.33" height="5.3" fill="rgb(249,249,251)"/><rect x="85.57" y="20.6" width="5.33" height="5.3" fill="rgb(243,243,245)"/><rect x="90.60" y="20.6" width="5.33" height="5.3" fill="rgb(249,249,251)"/><rect x="95.63" y="20.6" width="5.33" height="5.3" fill="rgb(251,251,253)"/><rect x="100.67" y="20.6" width="5.33" height="5.3" fill="rgb(247,247,249)"/><rect x="105.70" y="20.6" width="5.33" height="5.3" fill="rgb(249,249,251)"/><rect x="110.73" y="20.6" width="5.33" height="5.3" fill="rgb(248,248,250)"/><rect x="115.77" y="20.6" width="5.33" height="5.3" fill="rgb(243,243,245)"/><rect x="120.80" y="20.6" width="5.33" height="5.3" fill="rgb(247,247,249)"/><rect x="125.83" y="20.6" width="5.33" height="5.3" fill="rgb(242,242,244)"/><rect x="130.87" y="20.6" width="5.33" height="5.3" fill="rgb(254,254,256)"/><rect x="135.90" y="20.6" width="5.33" height="5.3" fill="rgb(244,244,246)"/><rect x="140.93" y="20.6" width="5.33" height="5.3" fill="rgb(246,246,248)"/><rect x="145.97" y="20.6" width="5.33" height="5.3" fill="rgb(242,242,244)"/></g><rect x="0" y="26.6" width="151.00" height="5.2" fill="#f1f5fb"/></svg>
<div class="bt" style="left:355.90px;top:143.50px;line-height:28.7px;">A054-…</div>
<div class="bt" style="left:418.90px;top:143.50px;line-height:28.7px;">案卡逻辑</div>
<div class="bt" style="left:562.20px;top:143.50px;line-height:28.7px;">新北区院</div>
<div class="bt" style="left:650.00px;top:143.50px;line-height:28.7px;">第一检察部</div>
<svg class="ab" style="left:736.70px;top:141.00px;overflow:visible" width="32.00" height="32" viewBox="0 0 32.00 32"><g filter="url(#mb)"><rect x="0.00" y="10.0" width="5.63" height="5.3" fill="rgb(222,222,224)"/><rect x="5.33" y="10.0" width="5.63" height="5.3" fill="rgb(236,236,238)"/><rect x="10.67" y="10.0" width="5.63" height="5.3" fill="rgb(217,217,219)"/><rect x="16.00" y="10.0" width="5.63" height="5.3" fill="rgb(224,224,226)"/><rect x="21.33" y="10.0" width="5.63" height="5.3" fill="rgb(216,216,218)"/><rect x="26.67" y="10.0" width="5.63" height="5.3" fill="rgb(211,211,213)"/><rect x="0.00" y="15.3" width="5.63" height="5.3" fill="rgb(205,205,207)"/><rect x="5.33" y="15.3" width="5.63" height="5.3" fill="rgb(213,213,215)"/><rect x="10.67" y="15.3" width="5.63" height="5.3" fill="rgb(204,204,206)"/><rect x="16.00" y="15.3" width="5.63" height="5.3" fill="rgb(208,208,210)"/><rect x="21.33" y="15.3" width="5.63" height="5.3" fill="rgb(206,206,208)"/><rect x="26.67" y="15.3" width="5.63" height="5.3" fill="rgb(198,198,200)"/><rect x="0.00" y="20.6" width="5.63" height="5.3" fill="rgb(242,242,244)"/><rect x="5.33" y="20.6" width="5.63" height="5.3" fill="rgb(252,252,254)"/><rect x="10.67" y="20.6" width="5.63" height="5.3" fill="rgb(252,252,254)"/><rect x="16.00" y="20.6" width="5.63" height="5.3" fill="rgb(246,246,248)"/><rect x="21.33" y="20.6" width="5.63" height="5.3" fill="rgb(248,248,250)"/><rect x="26.67" y="20.6" width="5.63" height="5.3" fill="rgb(252,252,254)"/></g><rect x="0" y="26.6" width="32.00" height="5.2" fill="#f1f5fb"/></svg>
<div class="bt" style="left:801.50px;top:143.50px;line-height:28.7px;">一审公诉案件</div>
<div class="bt" style="left:904.90px;top:143.50px;line-height:28.7px;">2023-07-12</div>
<div class="bt" style="left:984.70px;top:143.50px;line-height:28.7px;">2024-01-26</div>
<div class="bt" style="left:1056.30px;top:143.50px;line-height:28.7px;width:47px;text-align:center;">1</div>
<div class="cb" style="left:13.20px;top:181.05px;border-color:#e6e8ee"></div>
<div class="bt" style="left:40.10px;top:172.20px;line-height:28.7px;width:43.599999999999994px;text-align:center;">7</div>
<div class="bt" style="left:125.70px;top:172.20px;line-height:28.7px;">…</div>
<div class="bt" style="left:155.70px;top:172.20px;line-height:28.7px;">新</div>
<div class="bt" style="left:310.20px;top:172.20px;line-height:28.7px;">2号</div>
<svg class="ab" style="left:89.60px;top:169.70px;overflow:visible" width="35.10" height="32" viewBox="0 0 35.10 32"><g filter="url(#mb)"><rect x="2.40" y="10.0" width="4.97" height="5.3" fill="rgb(220,220,222)"/><rect x="7.07" y="10.0" width="4.97" height="5.3" fill="rgb(209,209,211)"/><rect x="11.74" y="10.0" width="4.97" height="5.3" fill="rgb(225,225,227)"/><rect x="16.41" y="10.0" width="4.97" height="5.3" fill="rgb(226,226,228)"/><rect x="21.09" y="10.0" width="4.97" height="5.3" fill="rgb(222,222,224)"/><rect x="25.76" y="10.0" width="4.97" height="5.3" fill="rgb(232,232,234)"/><rect x="30.43" y="10.0" width="4.97" height="5.3" fill="rgb(225,225,227)"/><rect x="2.40" y="15.3" width="4.97" height="5.3" fill="rgb(204,204,206)"/><rect x="7.07" y="15.3" width="4.97" height="5.3" fill="rgb(197,197,199)"/><rect x="11.74" y="15.3" width="4.97" height="5.3" fill="rgb(203,203,205)"/><rect x="16.41" y="15.3" width="4.97" height="5.3" fill="rgb(211,211,213)"/><rect x="21.09" y="15.3" width="4.97" height="5.3" fill="rgb(210,210,212)"/><rect x="25.76" y="15.3" width="4.97" height="5.3" fill="rgb(218,218,220)"/><rect x="30.43" y="15.3" width="4.97" height="5.3" fill="rgb(201,201,203)"/><rect x="2.40" y="20.6" width="4.97" height="5.3" fill="rgb(253,253,255)"/><rect x="7.07" y="20.6" width="4.97" height="5.3" fill="rgb(252,252,254)"/><rect x="11.74" y="20.6" width="4.97" height="5.3" fill="rgb(248,248,250)"/><rect x="16.41" y="20.6" width="4.97" height="5.3" fill="rgb(242,242,244)"/><rect x="21.09" y="20.6" width="4.97" height="5.3" fill="rgb(250,250,252)"/><rect x="25.76" y="20.6" width="4.97" height="5.3" fill="rgb(251,251,253)"/><rect x="30.43" y="20.6" width="4.97" height="5.3" fill="rgb(249,249,251)"/></g><rect x="0" y="26.6" width="35.10" height="5.2" fill="#f1f5fb"/></svg>
<svg class="ab" style="left:163.00px;top:169.70px;overflow:visible" width="151.00" height="32" viewBox="0 0 151.00 32"><g filter="url(#mb)"><rect x="0.00" y="10.0" width="5.33" height="5.3" fill="rgb(237,237,239)"/><rect x="5.03" y="10.0" width="5.33" height="5.3" fill="rgb(243,243,245)"/><rect x="10.07" y="10.0" width="5.33" height="5.3" fill="rgb(245,245,247)"/><rect x="15.10" y="10.0" width="5.33" height="5.3" fill="rgb(212,212,214)"/><rect x="20.13" y="10.0" width="5.33" height="5.3" fill="rgb(230,230,232)"/><rect x="25.17" y="10.0" width="5.33" height="5.3" fill="rgb(221,221,223)"/><rect x="30.20" y="10.0" width="5.33" height="5.3" fill="rgb(234,234,236)"/><rect x="35.23" y="10.0" width="5.33" height="5.3" fill="rgb(232,232,234)"/><rect x="40.27" y="10.0" width="5.33" height="5.3" fill="rgb(232,232,234)"/><rect x="45.30" y="10.0" width="5.33" height="5.3" fill="rgb(213,213,215)"/><rect x="50.33" y="10.0" width="5.33" height="5.3" fill="rgb(231,231,233)"/><rect x="55.37" y="10.0" width="5.33" height="5.3" fill="rgb(247,247,249)"/><rect x="60.40" y="10.0" width="5.33" height="5.3" fill="rgb(226,226,228)"/><rect x="65.43" y="10.0" width="5.33" height="5.3" fill="rgb(227,227,229)"/><rect x="70.47" y="10.0" width="5.33" height="5.3" fill="rgb(226,226,228)"/><rect x="75.50" y="10.0" width="5.33" height="5.3" fill="rgb(219,219,221)"/><rect x="80.53" y="10.0" width="5.33" height="5.3" fill="rgb(244,244,246)"/><rect x="85.57" y="10.0" width="5.33" height="5.3" fill="rgb(231,231,233)"/><rect x="90.60" y="10.0" width="5.33" height="5.3" fill="rgb(221,221,223)"/><rect x="95.63" y="10.0" width="5.33" height="5.3" fill="rgb(243,243,245)"/><rect x="100.67" y="10.0" width="5.33" height="5.3" fill="rgb(248,248,250)"/><rect x="105.70" y="10.0" width="5.33" height="5.3" fill="rgb(220,220,222)"/><rect x="110.73" y="10.0" width="5.33" height="5.3" fill="rgb(216,216,218)"/><rect x="115.77" y="10.0" width="5.33" height="5.3" fill="rgb(233,233,235)"/><rect x="120.80" y="10.0" width="5.33" height="5.3" fill="rgb(220,220,222)"/><rect x="125.83" y="10.0" width="5.33" height="5.3" fill="rgb(222,222,224)"/><rect x="130.87" y="10.0" width="5.33" height="5.3" fill="rgb(212,212,214)"/><rect x="135.90" y="10.0" width="5.33" height="5.3" fill="rgb(213,213,215)"/><rect x="140.93" y="10.0" width="5.33" height="5.3" fill="rgb(211,211,213)"/><rect x="145.97" y="10.0" width="5.33" height="5.3" fill="rgb(220,220,222)"/><rect x="0.00" y="15.3" width="5.33" height="5.3" fill="rgb(213,213,215)"/><rect x="5.03" y="15.3" width="5.33" height="5.3" fill="rgb(225,225,227)"/><rect x="10.07" y="15.3" width="5.33" height="5.3" fill="rgb(224,224,226)"/><rect x="15.10" y="15.3" width="5.33" height="5.3" fill="rgb(198,198,200)"/><rect x="20.13" y="15.3" width="5.33" height="5.3" fill="rgb(215,215,217)"/><rect x="25.17" y="15.3" width="5.33" height="5.3" fill="rgb(199,199,201)"/><rect x="30.20" y="15.3" width="5.33" height="5.3" fill="rgb(218,218,220)"/><rect x="35.23" y="15.3" width="5.33" height="5.3" fill="rgb(214,214,216)"/><rect x="40.27" y="15.3" width="5.33" height="5.3" fill="rgb(212,212,214)"/><rect x="45.30" y="15.3" width="5.33" height="5.3" fill="rgb(202,202,204)"/><rect x="50.33" y="15.3" width="5.33" height="5.3" fill="rgb(217,217,219)"/><rect x="55.37" y="15.3" width="5.33" height="5.3" fill="rgb(234,234,236)"/><rect x="60.40" y="15.3" width="5.33" height="5.3" fill="rgb(213,213,215)"/><rect x="65.43" y="15.3" width="5.33" height="5.3" fill="rgb(211,211,213)"/><rect x="70.47" y="15.3" width="5.33" height="5.3" fill="rgb(205,205,207)"/><rect x="75.50" y="15.3" width="5.33" height="5.3" fill="rgb(208,208,210)"/><rect x="80.53" y="15.3" width="5.33" height="5.3" fill="rgb(229,229,231)"/><rect x="85.57" y="15.3" width="5.33" height="5.3" fill="rgb(217,217,219)"/><rect x="90.60" y="15.3" width="5.33" height="5.3" fill="rgb(207,207,209)"/><rect x="95.63" y="15.3" width="5.33" height="5.3" fill="rgb(224,224,226)"/><rect x="100.67" y="15.3" width="5.33" height="5.3" fill="rgb(232,232,234)"/><rect x="105.70" y="15.3" width="5.33" height="5.3" fill="rgb(199,199,201)"/><rect x="110.73" y="15.3" width="5.33" height="5.3" fill="rgb(196,196,198)"/><rect x="115.77" y="15.3" width="5.33" height="5.3" fill="rgb(218,218,220)"/><rect x="120.80" y="15.3" width="5.33" height="5.3" fill="rgb(203,203,205)"/><rect x="125.83" y="15.3" width="5.33" height="5.3" fill="rgb(199,199,201)"/><rect x="130.87" y="15.3" width="5.33" height="5.3" fill="rgb(196,196,198)"/><rect x="135.90" y="15.3" width="5.33" height="5.3" fill="rgb(202,202,204)"/><rect x="140.93" y="15.3" width="5.33" height="5.3" fill="rgb(200,200,202)"/><rect x="145.97" y="15.3" width="5.33" height="5.3" fill="rgb(208,208,210)"/><rect x="0.00" y="20.6" width="5.33" height="5.3" fill="rgb(249,249,251)"/><rect x="5.03" y="20.6" width="5.33" height="5.3" fill="rgb(241,241,243)"/><rect x="10.07" y="20.6" width="5.33" height="5.3" fill="rgb(242,242,244)"/><rect x="15.10" y="20.6" width="5.33" height="5.3" fill="rgb(250,250,252)"/><rect x="20.13" y="20.6" width="5.33" height="5.3" fill="rgb(250,250,252)"/><rect x="25.17" y="20.6" width="5.33" height="5.3" fill="rgb(251,251,253)"/><rect x="30.20" y="20.6" width="5.33" height="5.3" fill="rgb(242,242,244)"/><rect x="35.23" y="20.6" width="5.33" height="5.3" fill="rgb(242,242,244)"/><rect x="40.27" y="20.6" width="5.33" height="5.3" fill="rgb(243,243,245)"/><rect x="45.30" y="20.6" width="5.33" height="5.3" fill="rgb(246,246,248)"/><rect x="50.33" y="20.6" width="5.33" height="5.3" fill="rgb(240,240,242)"/><rect x="55.37" y="20.6" width="5.33" height="5.3" fill="rgb(253,253,255)"/><rect x="60.40" y="20.6" width="5.33" height="5.3" fill="rgb(247,247,249)"/><rect x="65.43" y="20.6" width="5.33" height="5.3" fill="rgb(249,249,251)"/><rect x="70.47" y="20.6" width="5.33" height="5.3" fill="rgb(251,251,253)"/><rect x="75.50" y="20.6" width="5.33" height="5.3" fill="rgb(241,241,243)"/><rect x="80.53" y="20.6" width="5.33" height="5.3" fill="rgb(241,241,243)"/><rect x="85.57" y="20.6" width="5.33" height="5.3" fill="rgb(243,243,245)"/><rect x="90.60" y="20.6" width="5.33" height="5.3" fill="rgb(240,240,242)"/><rect x="95.63" y="20.6" width="5.33" height="5.3" fill="rgb(242,242,244)"/><rect x="100.67" y="20.6" width="5.33" height="5.3" fill="rgb(241,241,243)"/><rect x="105.70" y="20.6" width="5.33" height="5.3" fill="rgb(246,246,248)"/><rect x="110.73" y="20.6" width="5.33" height="5.3" fill="rgb(246,246,248)"/><rect x="115.77" y="20.6" width="5.33" height="5.3" fill="rgb(252,252,254)"/><rect x="120.80" y="20.6" width="5.33" height="5.3" fill="rgb(241,241,243)"/><rect x="125.83" y="20.6" width="5.33" height="5.3" fill="rgb(245,245,247)"/><rect x="130.87" y="20.6" width="5.33" height="5.3" fill="rgb(254,254,256)"/><rect x="135.90" y="20.6" width="5.33" height="5.3" fill="rgb(253,253,255)"/><rect x="140.93" y="20.6" width="5.33" height="5.3" fill="rgb(246,246,248)"/><rect x="145.97" y="20.6" width="5.33" height="5.3" fill="rgb(254,254,256)"/></g><rect x="0" y="26.6" width="151.00" height="5.2" fill="#f1f5fb"/></svg>
<div class="bt" style="left:355.90px;top:172.20px;line-height:28.7px;">R044-…</div>
<div class="bt" style="left:418.90px;top:172.20px;line-height:28.7px;">案卡逻辑</div>
<div class="bt" style="left:498.30px;top:172.20px;line-height:28.7px;">何</div>
<svg class="ab" style="left:502.70px;top:169.70px;overflow:visible" width="33.00" height="32" viewBox="0 0 33.00 32"><g filter="url(#mb)"><rect x="0.00" y="10.0" width="5.38" height="5.3" fill="rgb(238,238,240)"/><rect x="5.08" y="10.0" width="5.38" height="5.3" fill="rgb(222,222,224)"/><rect x="10.17" y="10.0" width="5.38" height="5.3" fill="rgb(221,221,223)"/><rect x="15.25" y="10.0" width="5.38" height="5.3" fill="rgb(229,229,231)"/><rect x="20.33" y="10.0" width="5.38" height="5.3" fill="rgb(227,227,229)"/><rect x="25.42" y="10.0" width="5.38" height="5.3" fill="rgb(224,224,226)"/><rect x="0.00" y="15.3" width="5.38" height="5.3" fill="rgb(216,216,218)"/><rect x="5.08" y="15.3" width="5.38" height="5.3" fill="rgb(200,200,202)"/><rect x="10.17" y="15.3" width="5.38" height="5.3" fill="rgb(208,208,210)"/><rect x="15.25" y="15.3" width="5.38" height="5.3" fill="rgb(209,209,211)"/><rect x="20.33" y="15.3" width="5.38" height="5.3" fill="rgb(208,208,210)"/><rect x="25.42" y="15.3" width="5.38" height="5.3" fill="rgb(206,206,208)"/><rect x="0.00" y="20.6" width="5.38" height="5.3" fill="rgb(240,240,242)"/><rect x="5.08" y="20.6" width="5.38" height="5.3" fill="rgb(244,244,246)"/><rect x="10.17" y="20.6" width="5.38" height="5.3" fill="rgb(245,245,247)"/><rect x="15.25" y="20.6" width="5.38" height="5.3" fill="rgb(243,243,245)"/><rect x="20.33" y="20.6" width="5.38" height="5.3" fill="rgb(245,245,247)"/><rect x="25.42" y="20.6" width="5.38" height="5.3" fill="rgb(244,244,246)"/></g><rect x="0" y="26.6" width="33.00" height="5.2" fill="#f1f5fb"/></svg>
<div class="bt" style="left:562.20px;top:172.20px;line-height:28.7px;">新北区院</div>
<div class="bt" style="left:650.00px;top:172.20px;line-height:28.7px;">第一检察部</div>
<svg class="ab" style="left:736.70px;top:169.70px;overflow:visible" width="32.00" height="32" viewBox="0 0 32.00 32"><g filter="url(#mb)"><rect x="0.00" y="10.0" width="5.63" height="5.3" fill="rgb(217,217,219)"/><rect x="5.33" y="10.0" width="5.63" height="5.3" fill="rgb(215,215,217)"/><rect x="10.67" y="10.0" width="5.63" height="5.3" fill="rgb(220,220,222)"/><rect x="16.00" y="10.0" width="5.63" height="5.3" fill="rgb(234,234,236)"/><rect x="21.33" y="10.0" width="5.63" height="5.3" fill="rgb(222,222,224)"/><rect x="26.67" y="10.0" width="5.63" height="5.3" fill="rgb(223,223,225)"/><rect x="0.00" y="15.3" width="5.63" height="5.3" fill="rgb(199,199,201)"/><rect x="5.33" y="15.3" width="5.63" height="5.3" fill="rgb(202,202,204)"/><rect x="10.67" y="15.3" width="5.63" height="5.3" fill="rgb(205,205,207)"/><rect x="16.00" y="15.3" width="5.63" height="5.3" fill="rgb(215,215,217)"/><rect x="21.33" y="15.3" width="5.63" height="5.3" fill="rgb(204,204,206)"/><rect x="26.67" y="15.3" width="5.63" height="5.3" fill="rgb(205,205,207)"/><rect x="0.00" y="20.6" width="5.63" height="5.3" fill="rgb(242,242,244)"/><rect x="5.33" y="20.6" width="5.63" height="5.3" fill="rgb(249,249,251)"/><rect x="10.67" y="20.6" width="5.63" height="5.3" fill="rgb(251,251,253)"/><rect x="16.00" y="20.6" width="5.63" height="5.3" fill="rgb(243,243,245)"/><rect x="21.33" y="20.6" width="5.63" height="5.3" fill="rgb(254,254,256)"/><rect x="26.67" y="20.6" width="5.63" height="5.3" fill="rgb(248,248,250)"/></g><rect x="0" y="26.6" width="32.00" height="5.2" fill="#f1f5fb"/></svg>
<div class="bt" style="left:801.50px;top:172.20px;line-height:28.7px;">一审公诉案件</div>
<div class="bt" style="left:904.90px;top:172.20px;line-height:28.7px;">2023-07-12</div>
<div class="bt" style="left:984.70px;top:172.20px;line-height:28.7px;">2024-01-26</div>
<div class="bt" style="left:1056.30px;top:172.20px;line-height:28.7px;width:47px;text-align:center;">1</div>
<div class="cb" style="left:13.20px;top:209.75px;border-color:#e6e8ee"></div>
<div class="bt" style="left:40.10px;top:200.90px;line-height:28.7px;width:43.599999999999994px;text-align:center;">8</div>
<div class="bt" style="left:125.70px;top:200.90px;line-height:28.7px;">…</div>
<div class="bt" style="left:155.70px;top:200.90px;line-height:28.7px;">新</div>
<div class="bt" style="left:310.20px;top:200.90px;line-height:28.7px;">9号</div>
<svg class="ab" style="left:89.60px;top:198.40px;overflow:visible" width="35.10" height="32" viewBox="0 0 35.10 32"><g filter="url(#mb)"><rect x="2.40" y="10.0" width="4.97" height="5.3" fill="rgb(233,233,235)"/><rect x="7.07" y="10.0" width="4.97" height="5.3" fill="rgb(213,213,215)"/><rect x="11.74" y="10.0" width="4.97" height="5.3" fill="rgb(220,220,222)"/><rect x="16.41" y="10.0" width="4.97" height="5.3" fill="rgb(225,225,227)"/><rect x="21.09" y="10.0" width="4.97" height="5.3" fill="rgb(215,215,217)"/><rect x="25.76" y="10.0" width="4.97" height="5.3" fill="rgb(228,228,230)"/><rect x="30.43" y="10.0" width="4.97" height="5.3" fill="rgb(223,223,225)"/><rect x="2.40" y="15.3" width="4.97" height="5.3" fill="rgb(218,218,220)"/><rect x="7.07" y="15.3" width="4.97" height="5.3" fill="rgb(202,202,204)"/><rect x="11.74" y="15.3" width="4.97" height="5.3" fill="rgb(196,196,198)"/><rect x="16.41" y="15.3" width="4.97" height="5.3" fill="rgb(202,202,204)"/><rect x="21.09" y="15.3" width="4.97" height="5.3" fill="rgb(200,200,202)"/><rect x="25.76" y="15.3" width="4.97" height="5.3" fill="rgb(214,214,216)"/><rect x="30.43" y="15.3" width="4.97" height="5.3" fill="rgb(206,206,208)"/><rect x="2.40" y="20.6" width="4.97" height="5.3" fill="rgb(254,254,256)"/><rect x="7.07" y="20.6" width="4.97" height="5.3" fill="rgb(241,241,243)"/><rect x="11.74" y="20.6" width="4.97" height="5.3" fill="rgb(247,247,249)"/><rect x="16.41" y="20.6" width="4.97" height="5.3" fill="rgb(251,251,253)"/><rect x="21.09" y="20.6" width="4.97" height="5.3" fill="rgb(242,242,244)"/><rect x="25.76" y="20.6" width="4.97" height="5.3" fill="rgb(243,243,245)"/><rect x="30.43" y="20.6" width="4.97" height="5.3" fill="rgb(254,254,256)"/></g><rect x="0" y="26.6" width="35.10" height="5.2" fill="#f1f5fb"/></svg>
<svg class="ab" style="left:163.00px;top:198.40px;overflow:visible" width="151.00" height="32" viewBox="0 0 151.00 32"><g filter="url(#mb)"><rect x="0.00" y="10.0" width="5.33" height="5.3" fill="rgb(230,230,232)"/><rect x="5.03" y="10.0" width="5.33" height="5.3" fill="rgb(237,237,239)"/><rect x="10.07" y="10.0" width="5.33" height="5.3" fill="rgb(218,218,220)"/><rect x="15.10" y="10.0" width="5.33" height="5.3" fill="rgb(229,229,231)"/><rect x="20.13" y="10.0" width="5.33" height="5.3" fill="rgb(223,223,225)"/><rect x="25.17" y="10.0" width="5.33" height="5.3" fill="rgb(219,219,221)"/><rect x="30.20" y="10.0" width="5.33" height="5.3" fill="rgb(228,228,230)"/><rect x="35.23" y="10.0" width="5.33" height="5.3" fill="rgb(230,230,232)"/><rect x="40.27" y="10.0" width="5.33" height="5.3" fill="rgb(224,224,226)"/><rect x="45.30" y="10.0" width="5.33" height="5.3" fill="rgb(229,229,231)"/><rect x="50.33" y="10.0" width="5.33" height="5.3" fill="rgb(221,221,223)"/><rect x="55.37" y="10.0" width="5.33" height="5.3" fill="rgb(244,244,246)"/><rect x="60.40" y="10.0" width="5.33" height="5.3" fill="rgb(228,228,230)"/><rect x="65.43" y="10.0" width="5.33" height="5.3" fill="rgb(248,248,250)"/><rect x="70.47" y="10.0" width="5.33" height="5.3" fill="rgb(234,234,236)"/><rect x="75.50" y="10.0" width="5.33" height="5.3" fill="rgb(211,211,213)"/><rect x="80.53" y="10.0" width="5.33" height="5.3" fill="rgb(227,227,229)"/><rect x="85.57" y="10.0" width="5.33" height="5.3" fill="rgb(218,218,220)"/><rect x="90.60" y="10.0" width="5.33" height="5.3" fill="rgb(215,215,217)"/><rect x="95.63" y="10.0" width="5.33" height="5.3" fill="rgb(217,217,219)"/><rect x="100.67" y="10.0" width="5.33" height="5.3" fill="rgb(224,224,226)"/><rect x="105.70" y="10.0" width="5.33" height="5.3" fill="rgb(224,224,226)"/><rect x="110.73" y="10.0" width="5.33" height="5.3" fill="rgb(212,212,214)"/><rect x="115.77" y="10.0" width="5.33" height="5.3" fill="rgb(221,221,223)"/><rect x="120.80" y="10.0" width="5.33" height="5.3" fill="rgb(210,210,212)"/><rect x="125.83" y="10.0" width="5.33" height="5.3" fill="rgb(225,225,227)"/><rect x="130.87" y="10.0" width="5.33" height="5.3" fill="rgb(232,232,234)"/><rect x="135.90" y="10.0" width="5.33" height="5.3" fill="rgb(234,234,236)"/><rect x="140.93" y="10.0" width="5.33" height="5.3" fill="rgb(238,238,240)"/><rect x="145.97" y="10.0" width="5.33" height="5.3" fill="rgb(221,221,223)"/><rect x="0.00" y="15.3" width="5.33" height="5.3" fill="rgb(213,213,215)"/><rect x="5.03" y="15.3" width="5.33" height="5.3" fill="rgb(213,213,215)"/><rect x="10.07" y="15.3" width="5.33" height="5.3" fill="rgb(201,201,203)"/><rect x="15.10" y="15.3" width="5.33" height="5.3" fill="rgb(206,206,208)"/><rect x="20.13" y="15.3" width="5.33" height="5.3" fill="rgb(199,199,201)"/><rect x="25.17" y="15.3" width="5.33" height="5.3" fill="rgb(196,196,198)"/><rect x="30.20" y="15.3" width="5.33" height="5.3" fill="rgb(207,207,209)"/><rect x="35.23" y="15.3" width="5.33" height="5.3" fill="rgb(214,214,216)"/><rect x="40.27" y="15.3" width="5.33" height="5.3" fill="rgb(201,201,203)"/><rect x="45.30" y="15.3" width="5.33" height="5.3" fill="rgb(213,213,215)"/><rect x="50.33" y="15.3" width="5.33" height="5.3" fill="rgb(210,210,212)"/><rect x="55.37" y="15.3" width="5.33" height="5.3" fill="rgb(225,225,227)"/><rect x="60.40" y="15.3" width="5.33" height="5.3" fill="rgb(217,217,219)"/><rect x="65.43" y="15.3" width="5.33" height="5.3" fill="rgb(232,232,234)"/><rect x="70.47" y="15.3" width="5.33" height="5.3" fill="rgb(216,216,218)"/><rect x="75.50" y="15.3" width="5.33" height="5.3" fill="rgb(196,196,198)"/><rect x="80.53" y="15.3" width="5.33" height="5.3" fill="rgb(209,209,211)"/><rect x="85.57" y="15.3" width="5.33" height="5.3" fill="rgb(200,200,202)"/><rect x="90.60" y="15.3" width="5.33" height="5.3" fill="rgb(199,199,201)"/><rect x="95.63" y="15.3" width="5.33" height="5.3" fill="rgb(201,201,203)"/><rect x="100.67" y="15.3" width="5.33" height="5.3" fill="rgb(200,200,202)"/><rect x="105.70" y="15.3" width="5.33" height="5.3" fill="rgb(214,214,216)"/><rect x="110.73" y="15.3" width="5.33" height="5.3" fill="rgb(197,197,199)"/><rect x="115.77" y="15.3" width="5.33" height="5.3" fill="rgb(197,197,199)"/><rect x="120.80" y="15.3" width="5.33" height="5.3" fill="rgb(200,200,202)"/><rect x="125.83" y="15.3" width="5.33" height="5.3" fill="rgb(211,211,213)"/><rect x="130.87" y="15.3" width="5.33" height="5.3" fill="rgb(211,211,213)"/><rect x="135.90" y="15.3" width="5.33" height="5.3" fill="rgb(215,215,217)"/><rect x="140.93" y="15.3" width="5.33" height="5.3" fill="rgb(214,214,216)"/><rect x="145.97" y="15.3" width="5.33" height="5.3" fill="rgb(205,205,207)"/><rect x="0.00" y="20.6" width="5.33" height="5.3" fill="rgb(251,251,253)"/><rect x="5.03" y="20.6" width="5.33" height="5.3" fill="rgb(246,246,248)"/><rect x="10.07" y="20.6" width="5.33" height="5.3" fill="rgb(249,249,251)"/><rect x="15.10" y="20.6" width="5.33" height="5.3" fill="rgb(245,245,247)"/><rect x="20.13" y="20.6" width="5.33" height="5.3" fill="rgb(252,252,254)"/><rect x="25.17" y="20.6" width="5.33" height="5.3" fill="rgb(252,252,254)"/><rect x="30.20" y="20.6" width="5.33" height="5.3" fill="rgb(244,244,246)"/><rect x="35.23" y="20.6" width="5.33" height="5.3" fill="rgb(254,254,256)"/><rect x="40.27" y="20.6" width="5.33" height="5.3" fill="rgb(249,249,251)"/><rect x="45.30" y="20.6" width="5.33" height="5.3" fill="rgb(254,254,256)"/><rect x="50.33" y="20.6" width="5.33" height="5.3" fill="rgb(241,241,243)"/><rect x="55.37" y="20.6" width="5.33" height="5.3" fill="rgb(243,243,245)"/><rect x="60.40" y="20.6" width="5.33" height="5.3" fill="rgb(241,241,243)"/><rect x="65.43" y="20.6" width="5.33" height="5.3" fill="rgb(253,253,255)"/><rect x="70.47" y="20.6" width="5.33" height="5.3" fill="rgb(247,247,249)"/><rect x="75.50" y="20.6" width="5.33" height="5.3" fill="rgb(243,243,245)"/><rect x="80.53" y="20.6" width="5.33" height="5.3" fill="rgb(248,248,250)"/><rect x="85.57" y="20.6" width="5.33" height="5.3" fill="rgb(253,253,255)"/><rect x="90.60" y="20.6" width="5.33" height="5.3" fill="rgb(246,246,248)"/><rect x="95.63" y="20.6" width="5.33" height="5.3" fill="rgb(240,240,242)"/><rect x="100.67" y="20.6" width="5.33" height="5.3" fill="rgb(247,247,249)"/><rect x="105.70" y="20.6" width="5.33" height="5.3" fill="rgb(251,251,253)"/><rect x="110.73" y="20.6" width="5.33" height="5.3" fill="rgb(241,241,243)"/><rect x="115.77" y="20.6" width="5.33" height="5.3" fill="rgb(248,248,250)"/><rect x="120.80" y="20.6" width="5.33" height="5.3" fill="rgb(254,254,256)"/><rect x="125.83" y="20.6" width="5.33" height="5.3" fill="rgb(243,243,245)"/><rect x="130.87" y="20.6" width="5.33" height="5.3" fill="rgb(248,248,250)"/><rect x="135.90" y="20.6" width="5.33" height="5.3" fill="rgb(244,244,246)"/><rect x="140.93" y="20.6" width="5.33" height="5.3" fill="rgb(250,250,252)"/><rect x="145.97" y="20.6" width="5.33" height="5.3" fill="rgb(246,246,248)"/></g><rect x="0" y="26.6" width="151.00" height="5.2" fill="#f1f5fb"/></svg>
<div class="bt" style="left:355.90px;top:200.90px;line-height:28.7px;">R144…</div>
<div class="bt" style="left:418.90px;top:200.90px;line-height:28.7px;">案卡逻辑</div>
<div class="bt" style="left:498.30px;top:200.90px;line-height:28.7px;">徐</div>
<svg class="ab" style="left:502.70px;top:198.40px;overflow:visible" width="33.00" height="32" viewBox="0 0 33.00 32"><g filter="url(#mb)"><rect x="0.00" y="10.0" width="5.38" height="5.3" fill="rgb(209,209,211)"/><rect x="5.08" y="10.0" width="5.38" height="5.3" fill="rgb(235,235,237)"/><rect x="10.17" y="10.0" width="5.38" height="5.3" fill="rgb(235,235,237)"/><rect x="15.25" y="10.0" width="5.38" height="5.3" fill="rgb(213,213,215)"/><rect x="20.33" y="10.0" width="5.38" height="5.3" fill="rgb(220,220,222)"/><rect x="25.42" y="10.0" width="5.38" height="5.3" fill="rgb(222,222,224)"/><rect x="0.00" y="15.3" width="5.38" height="5.3" fill="rgb(198,198,200)"/><rect x="5.08" y="15.3" width="5.38" height="5.3" fill="rgb(217,217,219)"/><rect x="10.17" y="15.3" width="5.38" height="5.3" fill="rgb(213,213,215)"/><rect x="15.25" y="15.3" width="5.38" height="5.3" fill="rgb(201,201,203)"/><rect x="20.33" y="15.3" width="5.38" height="5.3" fill="rgb(209,209,211)"/><rect x="25.42" y="15.3" width="5.38" height="5.3" fill="rgb(198,198,200)"/><rect x="0.00" y="20.6" width="5.38" height="5.3" fill="rgb(248,248,250)"/><rect x="5.08" y="20.6" width="5.38" height="5.3" fill="rgb(249,249,251)"/><rect x="10.17" y="20.6" width="5.38" height="5.3" fill="rgb(247,247,249)"/><rect x="15.25" y="20.6" width="5.38" height="5.3" fill="rgb(240,240,242)"/><rect x="20.33" y="20.6" width="5.38" height="5.3" fill="rgb(244,244,246)"/><rect x="25.42" y="20.6" width="5.38" height="5.3" fill="rgb(243,243,245)"/></g><rect x="0" y="26.6" width="33.00" height="5.2" fill="#f1f5fb"/></svg>
<div class="bt" style="left:562.20px;top:200.90px;line-height:28.7px;">新北区院</div>
<div class="bt" style="left:650.00px;top:200.90px;line-height:28.7px;">第四检察部</div>
<svg class="ab" style="left:736.70px;top:198.40px;overflow:visible" width="32.00" height="32" viewBox="0 0 32.00 32"><g filter="url(#mb)"><rect x="0.00" y="10.0" width="5.30" height="5.3" fill="rgb(206,206,208)"/><rect x="5.00" y="10.0" width="5.30" height="5.3" fill="rgb(212,212,214)"/><rect x="10.00" y="10.0" width="5.30" height="5.3" fill="rgb(220,220,222)"/><rect x="15.00" y="10.0" width="5.30" height="5.3" fill="rgb(225,225,227)"/><rect x="20.00" y="10.0" width="5.30" height="5.3" fill="rgb(248,248,250)"/><rect x="0.00" y="15.3" width="5.30" height="5.3" fill="rgb(196,196,198)"/><rect x="5.00" y="15.3" width="5.30" height="5.3" fill="rgb(198,198,200)"/><rect x="10.00" y="15.3" width="5.30" height="5.3" fill="rgb(210,210,212)"/><rect x="15.00" y="15.3" width="5.30" height="5.3" fill="rgb(208,208,210)"/><rect x="20.00" y="15.3" width="5.30" height="5.3" fill="rgb(227,227,229)"/><rect x="0.00" y="20.6" width="5.30" height="5.3" fill="rgb(245,245,247)"/><rect x="5.00" y="20.6" width="5.30" height="5.3" fill="rgb(244,244,246)"/><rect x="10.00" y="20.6" width="5.30" height="5.3" fill="rgb(245,245,247)"/><rect x="15.00" y="20.6" width="5.30" height="5.3" fill="rgb(247,247,249)"/><rect x="20.00" y="20.6" width="5.30" height="5.3" fill="rgb(242,242,244)"/></g><rect x="0" y="26.6" width="32.00" height="5.2" fill="#f1f5fb"/></svg>
<div class="bt" style="left:801.50px;top:200.90px;line-height:28.7px;">一审公诉案件</div>
<div class="bt" style="left:904.90px;top:200.90px;line-height:28.7px;">2023-07-21</div>
<div class="bt" style="left:984.70px;top:200.90px;line-height:28.7px;">2024-01-26</div>
<div class="bt" style="left:1056.30px;top:200.90px;line-height:28.7px;width:47px;text-align:center;">1</div>
<div class="cb" style="left:13.20px;top:238.45px;border-color:#e6e8ee"></div>
<div class="bt" style="left:40.10px;top:229.60px;line-height:28.7px;width:43.599999999999994px;text-align:center;">9</div>
<div class="bt" style="left:125.70px;top:229.60px;line-height:28.7px;">…</div>
<div class="bt" style="left:155.70px;top:229.60px;line-height:28.7px;">新</div>
<div class="bt" style="left:310.20px;top:229.60px;line-height:28.7px;">9号</div>
<svg class="ab" style="left:89.60px;top:227.10px;overflow:visible" width="35.10" height="32" viewBox="0 0 35.10 32"><g filter="url(#mb)"><rect x="2.40" y="10.0" width="4.97" height="5.3" fill="rgb(229,229,231)"/><rect x="7.07" y="10.0" width="4.97" height="5.3" fill="rgb(215,215,217)"/><rect x="11.74" y="10.0" width="4.97" height="5.3" fill="rgb(236,236,238)"/><rect x="16.41" y="10.0" width="4.97" height="5.3" fill="rgb(222,222,224)"/><rect x="21.09" y="10.0" width="4.97" height="5.3" fill="rgb(220,220,222)"/><rect x="25.76" y="10.0" width="4.97" height="5.3" fill="rgb(209,209,211)"/><rect x="30.43" y="10.0" width="4.97" height="5.3" fill="rgb(242,242,244)"/><rect x="2.40" y="15.3" width="4.97" height="5.3" fill="rgb(211,211,213)"/><rect x="7.07" y="15.3" width="4.97" height="5.3" fill="rgb(202,202,204)"/><rect x="11.74" y="15.3" width="4.97" height="5.3" fill="rgb(218,218,220)"/><rect x="16.41" y="15.3" width="4.97" height="5.3" fill="rgb(202,202,204)"/><rect x="21.09" y="15.3" width="4.97" height="5.3" fill="rgb(207,207,209)"/><rect x="25.76" y="15.3" width="4.97" height="5.3" fill="rgb(196,196,198)"/><rect x="30.43" y="15.3" width="4.97" height="5.3" fill="rgb(218,218,220)"/><rect x="2.40" y="20.6" width="4.97" height="5.3" fill="rgb(240,240,242)"/><rect x="7.07" y="20.6" width="4.97" height="5.3" fill="rgb(250,250,252)"/><rect x="11.74" y="20.6" width="4.97" height="5.3" fill="rgb(241,241,243)"/><rect x="16.41" y="20.6" width="4.97" height="5.3" fill="rgb(244,244,246)"/><rect x="21.09" y="20.6" width="4.97" height="5.3" fill="rgb(251,251,253)"/><rect x="25.76" y="20.6" width="4.97" height="5.3" fill="rgb(253,253,255)"/><rect x="30.43" y="20.6" width="4.97" height="5.3" fill="rgb(245,245,247)"/></g><rect x="0" y="26.6" width="35.10" height="5.2" fill="#f1f5fb"/></svg>
<svg class="ab" style="left:163.00px;top:227.10px;overflow:visible" width="151.00" height="32" viewBox="0 0 151.00 32"><g filter="url(#mb)"><rect x="0.00" y="10.0" width="5.33" height="5.3" fill="rgb(222,222,224)"/><rect x="5.03" y="10.0" width="5.33" height="5.3" fill="rgb(240,240,242)"/><rect x="10.07" y="10.0" width="5.33" height="5.3" fill="rgb(226,226,228)"/><rect x="15.10" y="10.0" width="5.33" height="5.3" fill="rgb(234,234,236)"/><rect x="20.13" y="10.0" width="5.33" height="5.3" fill="rgb(216,216,218)"/><rect x="25.17" y="10.0" width="5.33" height="5.3" fill="rgb(220,220,222)"/><rect x="30.20" y="10.0" width="5.33" height="5.3" fill="rgb(246,246,248)"/><rect x="35.23" y="10.0" width="5.33" height="5.3" fill="rgb(220,220,222)"/><rect x="40.27" y="10.0" width="5.33" height="5.3" fill="rgb(227,227,229)"/><rect x="45.30" y="10.0" width="5.33" height="5.3" fill="rgb(217,217,219)"/><rect x="50.33" y="10.0" width="5.33" height="5.3" fill="rgb(230,230,232)"/><rect x="55.37" y="10.0" width="5.33" height="5.3" fill="rgb(228,228,230)"/><rect x="60.40" y="10.0" width="5.33" height="5.3" fill="rgb(223,223,225)"/><rect x="65.43" y="10.0" width="5.33" height="5.3" fill="rgb(224,224,226)"/><rect x="70.47" y="10.0" width="5.33" height="5.3" fill="rgb(227,227,229)"/><rect x="75.50" y="10.0" width="5.33" height="5.3" fill="rgb(242,242,244)"/><rect x="80.53" y="10.0" width="5.33" height="5.3" fill="rgb(218,218,220)"/><rect x="85.57" y="10.0" width="5.33" height="5.3" fill="rgb(230,230,232)"/><rect x="90.60" y="10.0" width="5.33" height="5.3" fill="rgb(242,242,244)"/><rect x="95.63" y="10.0" width="5.33" height="5.3" fill="rgb(247,247,249)"/><rect x="100.67" y="10.0" width="5.33" height="5.3" fill="rgb(221,221,223)"/><rect x="105.70" y="10.0" width="5.33" height="5.3" fill="rgb(217,217,219)"/><rect x="110.73" y="10.0" width="5.33" height="5.3" fill="rgb(224,224,226)"/><rect x="115.77" y="10.0" width="5.33" height="5.3" fill="rgb(226,226,228)"/><rect x="120.80" y="10.0" width="5.33" height="5.3" fill="rgb(208,208,210)"/><rect x="125.83" y="10.0" width="5.33" height="5.3" fill="rgb(211,211,213)"/><rect x="130.87" y="10.0" width="5.33" height="5.3" fill="rgb(216,216,218)"/><rect x="135.90" y="10.0" width="5.33" height="5.3" fill="rgb(230,230,232)"/><rect x="140.93" y="10.0" width="5.33" height="5.3" fill="rgb(224,224,226)"/><rect x="145.97" y="10.0" width="5.33" height="5.3" fill="rgb(242,242,244)"/><rect x="0.00" y="15.3" width="5.33" height="5.3" fill="rgb(204,204,206)"/><rect x="5.03" y="15.3" width="5.33" height="5.3" fill="rgb(218,218,220)"/><rect x="10.07" y="15.3" width="5.33" height="5.3" fill="rgb(206,206,208)"/><rect x="15.10" y="15.3" width="5.33" height="5.3" fill="rgb(210,210,212)"/><rect x="20.13" y="15.3" width="5.33" height="5.3" fill="rgb(201,201,203)"/><rect x="25.17" y="15.3" width="5.33" height="5.3" fill="rgb(205,205,207)"/><rect x="30.20" y="15.3" width="5.33" height="5.3" fill="rgb(226,226,228)"/><rect x="35.23" y="15.3" width="5.33" height="5.3" fill="rgb(203,203,205)"/><rect x="40.27" y="15.3" width="5.33" height="5.3" fill="rgb(205,205,207)"/><rect x="45.30" y="15.3" width="5.33" height="5.3" fill="rgb(207,207,209)"/><rect x="50.33" y="15.3" width="5.33" height="5.3" fill="rgb(212,212,214)"/><rect x="55.37" y="15.3" width="5.33" height="5.3" fill="rgb(214,214,216)"/><rect x="60.40" y="15.3" width="5.33" height="5.3" fill="rgb(205,205,207)"/><rect x="65.43" y="15.3" width="5.33" height="5.3" fill="rgb(201,201,203)"/><rect x="70.47" y="15.3" width="5.33" height="5.3" fill="rgb(204,204,206)"/><rect x="75.50" y="15.3" width="5.33" height="5.3" fill="rgb(222,222,224)"/><rect x="80.53" y="15.3" width="5.33" height="5.3" fill="rgb(198,198,200)"/><rect x="85.57" y="15.3" width="5.33" height="5.3" fill="rgb(212,212,214)"/><rect x="90.60" y="15.3" width="5.33" height="5.3" fill="rgb(221,221,223)"/><rect x="95.63" y="15.3" width="5.33" height="5.3" fill="rgb(229,229,231)"/><rect x="100.67" y="15.3" width="5.33" height="5.3" fill="rgb(209,209,211)"/><rect x="105.70" y="15.3" width="5.33" height="5.3" fill="rgb(198,198,200)"/><rect x="110.73" y="15.3" width="5.33" height="5.3" fill="rgb(202,202,204)"/><rect x="115.77" y="15.3" width="5.33" height="5.3" fill="rgb(204,204,206)"/><rect x="120.80" y="15.3" width="5.33" height="5.3" fill="rgb(196,196,198)"/><rect x="125.83" y="15.3" width="5.33" height="5.3" fill="rgb(200,200,202)"/><rect x="130.87" y="15.3" width="5.33" height="5.3" fill="rgb(197,197,199)"/><rect x="135.90" y="15.3" width="5.33" height="5.3" fill="rgb(214,214,216)"/><rect x="140.93" y="15.3" width="5.33" height="5.3" fill="rgb(211,211,213)"/><rect x="145.97" y="15.3" width="5.33" height="5.3" fill="rgb(222,222,224)"/><rect x="0.00" y="20.6" width="5.33" height="5.3" fill="rgb(247,247,249)"/><rect x="5.03" y="20.6" width="5.33" height="5.3" fill="rgb(248,248,250)"/><rect x="10.07" y="20.6" width="5.33" height="5.3" fill="rgb(252,252,254)"/><rect x="15.10" y="20.6" width="5.33" height="5.3" fill="rgb(244,244,246)"/><rect x="20.13" y="20.6" width="5.33" height="5.3" fill="rgb(252,252,254)"/><rect x="25.17" y="20.6" width="5.33" height="5.3" fill="rgb(251,251,253)"/><rect x="30.20" y="20.6" width="5.33" height="5.3" fill="rgb(252,252,254)"/><rect x="35.23" y="20.6" width="5.33" height="5.3" fill="rgb(251,251,253)"/><rect x="40.27" y="20.6" width="5.33" height="5.3" fill="rgb(243,243,245)"/><rect x="45.30" y="20.6" width="5.33" height="5.3" fill="rgb(244,244,246)"/><rect x="50.33" y="20.6" width="5.33" height="5.3" fill="rgb(247,247,249)"/><rect x="55.37" y="20.6" width="5.33" height="5.3" fill="rgb(248,248,250)"/><rect x="60.40" y="20.6" width="5.33" height="5.3" fill="rgb(243,243,245)"/><rect x="65.43" y="20.6" width="5.33" height="5.3" fill="rgb(253,253,255)"/><rect x="70.47" y="20.6" width="5.33" height="5.3" fill="rgb(249,249,251)"/><rect x="75.50" y="20.6" width="5.33" height="5.3" fill="rgb(249,249,251)"/><rect x="80.53" y="20.6" width="5.33" height="5.3" fill="rgb(247,247,249)"/><rect x="85.57" y="20.6" width="5.33" height="5.3" fill="rgb(244,244,246)"/><rect x="90.60" y="20.6" width="5.33" height="5.3" fill="rgb(240,240,242)"/><rect x="95.63" y="20.6" width="5.33" height="5.3" fill="rgb(243,243,245)"/><rect x="100.67" y="20.6" width="5.33" height="5.3" fill="rgb(249,249,251)"/><rect x="105.70" y="20.6" width="5.33" height="5.3" fill="rgb(251,251,253)"/><rect x="110.73" y="20.6" width="5.33" height="5.3" fill="rgb(240,240,242)"/><rect x="115.77" y="20.6" width="5.33" height="5.3" fill="rgb(249,249,251)"/><rect x="120.80" y="20.6" width="5.33" height="5.3" fill="rgb(247,247,249)"/><rect x="125.83" y="20.6" width="5.33" height="5.3" fill="rgb(253,253,255)"/><rect x="130.87" y="20.6" width="5.33" height="5.3" fill="rgb(254,254,256)"/><rect x="135.90" y="20.6" width="5.33" height="5.3" fill="rgb(242,242,244)"/><rect x="140.93" y="20.6" width="5.33" height="5.3" fill="rgb(245,245,247)"/><rect x="145.97" y="20.6" width="5.33" height="5.3" fill="rgb(242,242,244)"/></g><rect x="0" y="26.6" width="151.00" height="5.2" fill="#f1f5fb"/></svg>
<div class="bt" style="left:355.90px;top:229.60px;line-height:28.7px;">R144…</div>
<div class="bt" style="left:418.90px;top:229.60px;line-height:28.7px;">案卡逻辑</div>
<div class="bt" style="left:498.30px;top:229.60px;line-height:28.7px;">赵</div>
<svg class="ab" style="left:502.70px;top:227.10px;overflow:visible" width="33.00" height="32" viewBox="0 0 33.00 32"><g filter="url(#mb)"><rect x="0.00" y="10.0" width="5.38" height="5.3" fill="rgb(234,234,236)"/><rect x="5.08" y="10.0" width="5.38" height="5.3" fill="rgb(231,231,233)"/><rect x="10.17" y="10.0" width="5.38" height="5.3" fill="rgb(225,225,227)"/><rect x="15.25" y="10.0" width="5.38" height="5.3" fill="rgb(209,209,211)"/><rect x="20.33" y="10.0" width="5.38" height="5.3" fill="rgb(244,244,246)"/><rect x="25.42" y="10.0" width="5.38" height="5.3" fill="rgb(225,225,227)"/><rect x="0.00" y="15.3" width="5.38" height="5.3" fill="rgb(215,215,217)"/><rect x="5.08" y="15.3" width="5.38" height="5.3" fill="rgb(209,209,211)"/><rect x="10.17" y="15.3" width="5.38" height="5.3" fill="rgb(204,204,206)"/><rect x="15.25" y="15.3" width="5.38" height="5.3" fill="rgb(196,196,198)"/><rect x="20.33" y="15.3" width="5.38" height="5.3" fill="rgb(225,225,227)"/><rect x="25.42" y="15.3" width="5.38" height="5.3" fill="rgb(213,213,215)"/><rect x="0.00" y="20.6" width="5.38" height="5.3" fill="rgb(240,240,242)"/><rect x="5.08" y="20.6" width="5.38" height="5.3" fill="rgb(244,244,246)"/><rect x="10.17" y="20.6" width="5.38" height="5.3" fill="rgb(246,246,248)"/><rect x="15.25" y="20.6" width="5.38" height="5.3" fill="rgb(240,240,242)"/><rect x="20.33" y="20.6" width="5.38" height="5.3" fill="rgb(251,251,253)"/><rect x="25.42" y="20.6" width="5.38" height="5.3" fill="rgb(245,245,247)"/></g><rect x="0" y="26.6" width="33.00" height="5.2" fill="#f1f5fb"/></svg>
<div class="bt" style="left:562.20px;top:229.60px;line-height:28.7px;">新北区院</div>
<div class="bt" style="left:650.00px;top:229.60px;line-height:28.7px;">第四检察部</div>
<svg class="ab" style="left:736.70px;top:227.10px;overflow:visible" width="32.00" height="32" viewBox="0 0 32.00 32"><g filter="url(#mb)"><rect x="0.00" y="10.0" width="5.30" height="5.3" fill="rgb(224,224,226)"/><rect x="5.00" y="10.0" width="5.30" height="5.3" fill="rgb(231,231,233)"/><rect x="10.00" y="10.0" width="5.30" height="5.3" fill="rgb(237,237,239)"/><rect x="15.00" y="10.0" width="5.30" height="5.3" fill="rgb(221,221,223)"/><rect x="20.00" y="10.0" width="5.30" height="5.3" fill="rgb(226,226,228)"/><rect x="0.00" y="15.3" width="5.30" height="5.3" fill="rgb(212,212,214)"/><rect x="5.00" y="15.3" width="5.30" height="5.3" fill="rgb(214,214,216)"/><rect x="10.00" y="15.3" width="5.30" height="5.3" fill="rgb(216,216,218)"/><rect x="15.00" y="15.3" width="5.30" height="5.3" fill="rgb(201,201,203)"/><rect x="20.00" y="15.3" width="5.30" height="5.3" fill="rgb(203,203,205)"/><rect x="0.00" y="20.6" width="5.30" height="5.3" fill="rgb(249,249,251)"/><rect x="5.00" y="20.6" width="5.30" height="5.3" fill="rgb(252,252,254)"/><rect x="10.00" y="20.6" width="5.30" height="5.3" fill="rgb(247,247,249)"/><rect x="15.00" y="20.6" width="5.30" height="5.3" fill="rgb(240,240,242)"/><rect x="20.00" y="20.6" width="5.30" height="5.3" fill="rgb(245,245,247)"/></g><rect x="0" y="26.6" width="32.00" height="5.2" fill="#f1f5fb"/></svg>
<div class="bt" style="left:801.50px;top:229.60px;line-height:28.7px;">一审公诉案件</div>
<div class="bt" style="left:904.90px;top:229.60px;line-height:28.7px;">2023-07-21</div>
<div class="bt" style="left:984.70px;top:229.60px;line-height:28.7px;">2024-01-26</div>
<div class="bt" style="left:1056.30px;top:229.60px;line-height:28.7px;width:47px;text-align:center;">1</div>
<div class="cb" style="left:13.20px;top:267.15px;border-color:#e6e8ee"></div>
<div class="bt" style="left:40.10px;top:258.30px;line-height:28.7px;width:43.599999999999994px;text-align:center;">10</div>
<div class="bt" style="left:125.70px;top:258.30px;line-height:28.7px;">…</div>
<div class="bt" style="left:155.70px;top:258.30px;line-height:28.7px;">新</div>
<div class="bt" style="left:310.20px;top:258.30px;line-height:28.7px;">9号</div>
<svg class="ab" style="left:89.60px;top:255.80px;overflow:visible" width="35.10" height="32" viewBox="0 0 35.10 32"><g filter="url(#mb)"><rect x="2.40" y="10.0" width="4.97" height="5.3" fill="rgb(231,231,233)"/><rect x="7.07" y="10.0" width="4.97" height="5.3" fill="rgb(236,236,238)"/><rect x="11.74" y="10.0" width="4.97" height="5.3" fill="rgb(209,209,211)"/><rect x="16.41" y="10.0" width="4.97" height="5.3" fill="rgb(235,235,237)"/><rect x="21.09" y="10.0" width="4.97" height="5.3" fill="rgb(248,248,250)"/><rect x="25.76" y="10.0" width="4.97" height="5.3" fill="rgb(215,215,217)"/><rect x="30.43" y="10.0" width="4.97" height="5.3" fill="rgb(247,247,249)"/><rect x="2.40" y="15.3" width="4.97" height="5.3" fill="rgb(207,207,209)"/><rect x="7.07" y="15.3" width="4.97" height="5.3" fill="rgb(218,218,220)"/><rect x="11.74" y="15.3" width="4.97" height="5.3" fill="rgb(197,197,199)"/><rect x="16.41" y="15.3" width="4.97" height="5.3" fill="rgb(224,224,226)"/><rect x="21.09" y="15.3" width="4.97" height="5.3" fill="rgb(234,234,236)"/><rect x="25.76" y="15.3" width="4.97" height="5.3" fill="rgb(197,197,199)"/><rect x="30.43" y="15.3" width="4.97" height="5.3" fill="rgb(233,233,235)"/><rect x="2.40" y="20.6" width="4.97" height="5.3" fill="rgb(247,247,249)"/><rect x="7.07" y="20.6" width="4.97" height="5.3" fill="rgb(246,246,248)"/><rect x="11.74" y="20.6" width="4.97" height="5.3" fill="rgb(254,254,256)"/><rect x="16.41" y="20.6" width="4.97" height="5.3" fill="rgb(241,241,243)"/><rect x="21.09" y="20.6" width="4.97" height="5.3" fill="rgb(240,240,242)"/><rect x="25.76" y="20.6" width="4.97" height="5.3" fill="rgb(250,250,252)"/><rect x="30.43" y="20.6" width="4.97" height="5.3" fill="rgb(251,251,253)"/></g><rect x="0" y="26.6" width="35.10" height="5.2" fill="#f1f5fb"/></svg>
<svg class="ab" style="left:163.00px;top:255.80px;overflow:visible" width="151.00" height="32" viewBox="0 0 151.00 32"><g filter="url(#mb)"><rect x="0.00" y="10.0" width="5.33" height="5.3" fill="rgb(226,226,228)"/><rect x="5.03" y="10.0" width="5.33" height="5.3" fill="rgb(219,219,221)"/><rect x="10.07" y="10.0" width="5.33" height="5.3" fill="rgb(237,237,239)"/><rect x="15.10" y="10.0" width="5.33" height="5.3" fill="rgb(210,210,212)"/><rect x="20.13" y="10.0" width="5.33" height="5.3" fill="rgb(228,228,230)"/><rect x="25.17" y="10.0" width="5.33" height="5.3" fill="rgb(239,239,241)"/><rect x="30.20" y="10.0" width="5.33" height="5.3" fill="rgb(223,223,225)"/><rect x="35.23" y="10.0" width="5.33" height="5.3" fill="rgb(231,231,233)"/><rect x="40.27" y="10.0" width="5.33" height="5.3" fill="rgb(218,218,220)"/><rect x="45.30" y="10.0" width="5.33" height="5.3" fill="rgb(236,236,238)"/><rect x="50.33" y="10.0" width="5.33" height="5.3" fill="rgb(214,214,216)"/><rect x="55.37" y="10.0" width="5.33" height="5.3" fill="rgb(229,229,231)"/><rect x="60.40" y="10.0" width="5.33" height="5.3" fill="rgb(225,225,227)"/><rect x="65.43" y="10.0" width="5.33" height="5.3" fill="rgb(221,221,223)"/><rect x="70.47" y="10.0" width="5.33" height="5.3" fill="rgb(218,218,220)"/><rect x="75.50" y="10.0" width="5.33" height="5.3" fill="rgb(223,223,225)"/><rect x="80.53" y="10.0" width="5.33" height="5.3" fill="rgb(226,226,228)"/><rect x="85.57" y="10.0" width="5.33" height="5.3" fill="rgb(225,225,227)"/><rect x="90.60" y="10.0" width="5.33" height="5.3" fill="rgb(221,221,223)"/><rect x="95.63" y="10.0" width="5.33" height="5.3" fill="rgb(228,228,230)"/><rect x="100.67" y="10.0" width="5.33" height="5.3" fill="rgb(228,228,230)"/><rect x="105.70" y="10.0" width="5.33" height="5.3" fill="rgb(234,234,236)"/><rect x="110.73" y="10.0" width="5.33" height="5.3" fill="rgb(232,232,234)"/><rect x="115.77" y="10.0" width="5.33" height="5.3" fill="rgb(213,213,215)"/><rect x="120.80" y="10.0" width="5.33" height="5.3" fill="rgb(222,222,224)"/><rect x="125.83" y="10.0" width="5.33" height="5.3" fill="rgb(229,229,231)"/><rect x="130.87" y="10.0" width="5.33" height="5.3" fill="rgb(247,247,249)"/><rect x="135.90" y="10.0" width="5.33" height="5.3" fill="rgb(236,236,238)"/><rect x="140.93" y="10.0" width="5.33" height="5.3" fill="rgb(234,234,236)"/><rect x="145.97" y="10.0" width="5.33" height="5.3" fill="rgb(224,224,226)"/><rect x="0.00" y="15.3" width="5.33" height="5.3" fill="rgb(215,215,217)"/><rect x="5.03" y="15.3" width="5.33" height="5.3" fill="rgb(204,204,206)"/><rect x="10.07" y="15.3" width="5.33" height="5.3" fill="rgb(227,227,229)"/><rect x="15.10" y="15.3" width="5.33" height="5.3" fill="rgb(198,198,200)"/><rect x="20.13" y="15.3" width="5.33" height="5.3" fill="rgb(207,207,209)"/><rect x="25.17" y="15.3" width="5.33" height="5.3" fill="rgb(215,215,217)"/><rect x="30.20" y="15.3" width="5.33" height="5.3" fill="rgb(201,201,203)"/><rect x="35.23" y="15.3" width="5.33" height="5.3" fill="rgb(216,216,218)"/><rect x="40.27" y="15.3" width="5.33" height="5.3" fill="rgb(206,206,208)"/><rect x="45.30" y="15.3" width="5.33" height="5.3" fill="rgb(214,214,216)"/><rect x="50.33" y="15.3" width="5.33" height="5.3" fill="rgb(201,201,203)"/><rect x="55.37" y="15.3" width="5.33" height="5.3" fill="rgb(208,208,210)"/><rect x="60.40" y="15.3" width="5.33" height="5.3" fill="rgb(202,202,204)"/><rect x="65.43" y="15.3" width="5.33" height="5.3" fill="rgb(197,197,199)"/><rect x="70.47" y="15.3" width="5.33" height="5.3" fill="rgb(207,207,209)"/><rect x="75.50" y="15.3" width="5.33" height="5.3" fill="rgb(213,213,215)"/><rect x="80.53" y="15.3" width="5.33" height="5.3" fill="rgb(211,211,213)"/><rect x="85.57" y="15.3" width="5.33" height="5.3" fill="rgb(202,202,204)"/><rect x="90.60" y="15.3" width="5.33" height="5.3" fill="rgb(205,205,207)"/><rect x="95.63" y="15.3" width="5.33" height="5.3" fill="rgb(211,211,213)"/><rect x="100.67" y="15.3" width="5.33" height="5.3" fill="rgb(217,217,219)"/><rect x="105.70" y="15.3" width="5.33" height="5.3" fill="rgb(211,211,213)"/><rect x="110.73" y="15.3" width="5.33" height="5.3" fill="rgb(208,208,210)"/><rect x="115.77" y="15.3" width="5.33" height="5.3" fill="rgb(197,197,199)"/><rect x="120.80" y="15.3" width="5.33" height="5.3" fill="rgb(207,207,209)"/><rect x="125.83" y="15.3" width="5.33" height="5.3" fill="rgb(215,215,217)"/><rect x="130.87" y="15.3" width="5.33" height="5.3" fill="rgb(225,225,227)"/><rect x="135.90" y="15.3" width="5.33" height="5.3" fill="rgb(212,212,214)"/><rect x="140.93" y="15.3" width="5.33" height="5.3" fill="rgb(216,216,218)"/><rect x="145.97" y="15.3" width="5.33" height="5.3" fill="rgb(204,204,206)"/><rect x="0.00" y="20.6" width="5.33" height="5.3" fill="rgb(240,240,242)"/><rect x="5.03" y="20.6" width="5.33" height="5.3" fill="rgb(244,244,246)"/><rect x="10.07" y="20.6" width="5.33" height="5.3" fill="rgb(246,246,248)"/><rect x="15.10" y="20.6" width="5.33" height="5.3" fill="rgb(249,249,251)"/><rect x="20.13" y="20.6" width="5.33" height="5.3" fill="rgb(243,243,245)"/><rect x="25.17" y="20.6" width="5.33" height="5.3" fill="rgb(247,247,249)"/><rect x="30.20" y="20.6" width="5.33" height="5.3" fill="rgb(240,240,242)"/><rect x="35.23" y="20.6" width="5.33" height="5.3" fill="rgb(243,243,245)"/><rect x="40.27" y="20.6" width="5.33" height="5.3" fill="rgb(242,242,244)"/><rect x="45.30" y="20.6" width="5.33" height="5.3" fill="rgb(248,248,250)"/><rect x="50.33" y="20.6" width="5.33" height="5.3" fill="rgb(249,249,251)"/><rect x="55.37" y="20.6" width="5.33" height="5.3" fill="rgb(242,242,244)"/><rect x="60.40" y="20.6" width="5.33" height="5.3" fill="rgb(240,240,242)"/><rect x="65.43" y="20.6" width="5.33" height="5.3" fill="rgb(243,243,245)"/><rect x="70.47" y="20.6" width="5.33" height="5.3" fill="rgb(244,244,246)"/><rect x="75.50" y="20.6" width="5.33" height="5.3" fill="rgb(246,246,248)"/><rect x="80.53" y="20.6" width="5.33" height="5.3" fill="rgb(246,246,248)"/><rect x="85.57" y="20.6" width="5.33" height="5.3" fill="rgb(247,247,249)"/><rect x="90.60" y="20.6" width="5.33" height="5.3" fill="rgb(248,248,250)"/><rect x="95.63" y="20.6" width="5.33" height="5.3" fill="rgb(251,251,253)"/><rect x="100.67" y="20.6" width="5.33" height="5.3" fill="rgb(242,242,244)"/><rect x="105.70" y="20.6" width="5.33" height="5.3" fill="rgb(248,248,250)"/><rect x="110.73" y="20.6" width="5.33" height="5.3" fill="rgb(251,251,253)"/><rect x="115.77" y="20.6" width="5.33" height="5.3" fill="rgb(248,248,250)"/><rect x="120.80" y="20.6" width="5.33" height="5.3" fill="rgb(244,244,246)"/><rect x="125.83" y="20.6" width="5.33" height="5.3" fill="rgb(245,245,247)"/><rect x="130.87" y="20.6" width="5.33" height="5.3" fill="rgb(251,251,253)"/><rect x="135.90" y="20.6" width="5.33" height="5.3" fill="rgb(247,247,249)"/><rect x="140.93" y="20.6" width="5.33" height="5.3" fill="rgb(250,250,252)"/><rect x="145.97" y="20.6" width="5.33" height="5.3" fill="rgb(246,246,248)"/></g><rect x="0" y="26.6" width="151.00" height="5.2" fill="#f1f5fb"/></svg>
<div class="bt" style="left:355.90px;top:258.30px;line-height:28.7px;">R154-…</div>
<div class="bt" style="left:418.90px;top:258.30px;line-height:28.7px;">案卡逻辑</div>
<div class="bt" style="left:498.30px;top:258.30px;line-height:28.7px;">赵</div>
<svg class="ab" style="left:502.70px;top:255.80px;overflow:visible" width="33.00" height="32" viewBox="0 0 33.00 32"><g filter="url(#mb)"><rect x="0.00" y="10.0" width="5.38" height="5.3" fill="rgb(239,239,241)"/><rect x="5.08" y="10.0" width="5.38" height="5.3" fill="rgb(225,225,227)"/><rect x="10.17" y="10.0" width="5.38" height="5.3" fill="rgb(218,218,220)"/><rect x="15.25" y="10.0" width="5.38" height="5.3" fill="rgb(248,248,250)"/><rect x="20.33" y="10.0" width="5.38" height="5.3" fill="rgb(215,215,217)"/><rect x="25.42" y="10.0" width="5.38" height="5.3" fill="rgb(236,236,238)"/><rect x="0.00" y="15.3" width="5.38" height="5.3" fill="rgb(226,226,228)"/><rect x="5.08" y="15.3" width="5.38" height="5.3" fill="rgb(213,213,215)"/><rect x="10.17" y="15.3" width="5.38" height="5.3" fill="rgb(208,208,210)"/><rect x="15.25" y="15.3" width="5.38" height="5.3" fill="rgb(231,231,233)"/><rect x="20.33" y="15.3" width="5.38" height="5.3" fill="rgb(205,205,207)"/><rect x="25.42" y="15.3" width="5.38" height="5.3" fill="rgb(215,215,217)"/><rect x="0.00" y="20.6" width="5.38" height="5.3" fill="rgb(250,250,252)"/><rect x="5.08" y="20.6" width="5.38" height="5.3" fill="rgb(247,247,249)"/><rect x="10.17" y="20.6" width="5.38" height="5.3" fill="rgb(249,249,251)"/><rect x="15.25" y="20.6" width="5.38" height="5.3" fill="rgb(240,240,242)"/><rect x="20.33" y="20.6" width="5.38" height="5.3" fill="rgb(252,252,254)"/><rect x="25.42" y="20.6" width="5.38" height="5.3" fill="rgb(252,252,254)"/></g><rect x="0" y="26.6" width="33.00" height="5.2" fill="#f1f5fb"/></svg>
<div class="bt" style="left:562.20px;top:258.30px;line-height:28.7px;">新北区院</div>
<div class="bt" style="left:650.00px;top:258.30px;line-height:28.7px;">第四检察部</div>
<svg class="ab" style="left:736.70px;top:255.80px;overflow:visible" width="32.00" height="32" viewBox="0 0 32.00 32"><g filter="url(#mb)"><rect x="0.00" y="10.0" width="5.30" height="5.3" fill="rgb(218,218,220)"/><rect x="5.00" y="10.0" width="5.30" height="5.3" fill="rgb(220,220,222)"/><rect x="10.00" y="10.0" width="5.30" height="5.3" fill="rgb(222,222,224)"/><rect x="15.00" y="10.0" width="5.30" height="5.3" fill="rgb(221,221,223)"/><rect x="20.00" y="10.0" width="5.30" height="5.3" fill="rgb(218,218,220)"/><rect x="0.00" y="15.3" width="5.30" height="5.3" fill="rgb(205,205,207)"/><rect x="5.00" y="15.3" width="5.30" height="5.3" fill="rgb(198,198,200)"/><rect x="10.00" y="15.3" width="5.30" height="5.3" fill="rgb(202,202,204)"/><rect x="15.00" y="15.3" width="5.30" height="5.3" fill="rgb(207,207,209)"/><rect x="20.00" y="15.3" width="5.30" height="5.3" fill="rgb(207,207,209)"/><rect x="0.00" y="20.6" width="5.30" height="5.3" fill="rgb(252,252,254)"/><rect x="5.00" y="20.6" width="5.30" height="5.3" fill="rgb(246,246,248)"/><rect x="10.00" y="20.6" width="5.30" height="5.3" fill="rgb(241,241,243)"/><rect x="15.00" y="20.6" width="5.30" height="5.3" fill="rgb(246,246,248)"/><rect x="20.00" y="20.6" width="5.30" height="5.3" fill="rgb(247,247,249)"/></g><rect x="0" y="26.6" width="32.00" height="5.2" fill="#f1f5fb"/></svg>
<div class="bt" style="left:801.50px;top:258.30px;line-height:28.7px;">一审公诉案件</div>
<div class="bt" style="left:904.90px;top:258.30px;line-height:28.7px;">2023-07-21</div>
<div class="bt" style="left:984.70px;top:258.30px;line-height:28.7px;">2024-01-26</div>
<div class="bt" style="left:1056.30px;top:258.30px;line-height:28.7px;width:47px;text-align:center;">1</div>
<div class="cb" style="left:13.20px;top:295.85px;border-color:#e6e8ee"></div>
<div class="bt" style="left:40.10px;top:287.00px;line-height:28.7px;width:43.599999999999994px;text-align:center;">11</div>
<div class="bt" style="left:125.70px;top:287.00px;line-height:28.7px;">…</div>
<div class="bt" style="left:155.70px;top:287.00px;line-height:28.7px;">新</div>
<div class="bt" style="left:310.20px;top:287.00px;line-height:28.7px;">7号</div>
<svg class="ab" style="left:89.60px;top:284.50px;overflow:visible" width="35.10" height="32" viewBox="0 0 35.10 32"><g filter="url(#mb)"><rect x="2.40" y="10.0" width="4.97" height="5.3" fill="rgb(248,248,250)"/><rect x="7.07" y="10.0" width="4.97" height="5.3" fill="rgb(220,220,222)"/><rect x="11.74" y="10.0" width="4.97" height="5.3" fill="rgb(228,228,230)"/><rect x="16.41" y="10.0" width="4.97" height="5.3" fill="rgb(224,224,226)"/><rect x="21.09" y="10.0" width="4.97" height="5.3" fill="rgb(223,223,225)"/><rect x="25.76" y="10.0" width="4.97" height="5.3" fill="rgb(230,230,232)"/><rect x="30.43" y="10.0" width="4.97" height="5.3" fill="rgb(215,215,217)"/><rect x="2.40" y="15.3" width="4.97" height="5.3" fill="rgb(232,232,234)"/><rect x="7.07" y="15.3" width="4.97" height="5.3" fill="rgb(205,205,207)"/><rect x="11.74" y="15.3" width="4.97" height="5.3" fill="rgb(204,204,206)"/><rect x="16.41" y="15.3" width="4.97" height="5.3" fill="rgb(208,208,210)"/><rect x="21.09" y="15.3" width="4.97" height="5.3" fill="rgb(201,201,203)"/><rect x="25.76" y="15.3" width="4.97" height="5.3" fill="rgb(218,218,220)"/><rect x="30.43" y="15.3" width="4.97" height="5.3" fill="rgb(198,198,200)"/><rect x="2.40" y="20.6" width="4.97" height="5.3" fill="rgb(249,249,251)"/><rect x="7.07" y="20.6" width="4.97" height="5.3" fill="rgb(244,244,246)"/><rect x="11.74" y="20.6" width="4.97" height="5.3" fill="rgb(251,251,253)"/><rect x="16.41" y="20.6" width="4.97" height="5.3" fill="rgb(253,253,255)"/><rect x="21.09" y="20.6" width="4.97" height="5.3" fill="rgb(248,248,250)"/><rect x="25.76" y="20.6" width="4.97" height="5.3" fill="rgb(244,244,246)"/><rect x="30.43" y="20.6" width="4.97" height="5.3" fill="rgb(251,251,253)"/></g><rect x="0" y="26.6" width="35.10" height="5.2" fill="#f1f5fb"/></svg>
<svg class="ab" style="left:163.00px;top:284.50px;overflow:visible" width="151.00" height="32" viewBox="0 0 151.00 32"><g filter="url(#mb)"><rect x="0.00" y="10.0" width="5.33" height="5.3" fill="rgb(231,231,233)"/><rect x="5.03" y="10.0" width="5.33" height="5.3" fill="rgb(242,242,244)"/><rect x="10.07" y="10.0" width="5.33" height="5.3" fill="rgb(226,226,228)"/><rect x="15.10" y="10.0" width="5.33" height="5.3" fill="rgb(248,248,250)"/><rect x="20.13" y="10.0" width="5.33" height="5.3" fill="rgb(216,216,218)"/><rect x="25.17" y="10.0" width="5.33" height="5.3" fill="rgb(225,225,227)"/><rect x="30.20" y="10.0" width="5.33" height="5.3" fill="rgb(221,221,223)"/><rect x="35.23" y="10.0" width="5.33" height="5.3" fill="rgb(248,248,250)"/><rect x="40.27" y="10.0" width="5.33" height="5.3" fill="rgb(231,231,233)"/><rect x="45.30" y="10.0" width="5.33" height="5.3" fill="rgb(227,227,229)"/><rect x="50.33" y="10.0" width="5.33" height="5.3" fill="rgb(222,222,224)"/><rect x="55.37" y="10.0" width="5.33" height="5.3" fill="rgb(230,230,232)"/><rect x="60.40" y="10.0" width="5.33" height="5.3" fill="rgb(222,222,224)"/><rect x="65.43" y="10.0" width="5.33" height="5.3" fill="rgb(240,240,242)"/><rect x="70.47" y="10.0" width="5.33" height="5.3" fill="rgb(231,231,233)"/><rect x="75.50" y="10.0" width="5.33" height="5.3" fill="rgb(244,244,246)"/><rect x="80.53" y="10.0" width="5.33" height="5.3" fill="rgb(222,222,224)"/><rect x="85.57" y="10.0" width="5.33" height="5.3" fill="rgb(220,220,222)"/><rect x="90.60" y="10.0" width="5.33" height="5.3" fill="rgb(223,223,225)"/><rect x="95.63" y="10.0" width="5.33" height="5.3" fill="rgb(230,230,232)"/><rect x="100.67" y="10.0" width="5.33" height="5.3" fill="rgb(245,245,247)"/><rect x="105.70" y="10.0" width="5.33" height="5.3" fill="rgb(217,217,219)"/><rect x="110.73" y="10.0" width="5.33" height="5.3" fill="rgb(228,228,230)"/><rect x="115.77" y="10.0" width="5.33" height="5.3" fill="rgb(212,212,214)"/><rect x="120.80" y="10.0" width="5.33" height="5.3" fill="rgb(246,246,248)"/><rect x="125.83" y="10.0" width="5.33" height="5.3" fill="rgb(216,216,218)"/><rect x="130.87" y="10.0" width="5.33" height="5.3" fill="rgb(216,216,218)"/><rect x="135.90" y="10.0" width="5.33" height="5.3" fill="rgb(236,236,238)"/><rect x="140.93" y="10.0" width="5.33" height="5.3" fill="rgb(208,208,210)"/><rect x="145.97" y="10.0" width="5.33" height="5.3" fill="rgb(223,223,225)"/><rect x="0.00" y="15.3" width="5.33" height="5.3" fill="rgb(208,208,210)"/><rect x="5.03" y="15.3" width="5.33" height="5.3" fill="rgb(222,222,224)"/><rect x="10.07" y="15.3" width="5.33" height="5.3" fill="rgb(204,204,206)"/><rect x="15.10" y="15.3" width="5.33" height="5.3" fill="rgb(235,235,237)"/><rect x="20.13" y="15.3" width="5.33" height="5.3" fill="rgb(205,205,207)"/><rect x="25.17" y="15.3" width="5.33" height="5.3" fill="rgb(206,206,208)"/><rect x="30.20" y="15.3" width="5.33" height="5.3" fill="rgb(198,198,200)"/><rect x="35.23" y="15.3" width="5.33" height="5.3" fill="rgb(231,231,233)"/><rect x="40.27" y="15.3" width="5.33" height="5.3" fill="rgb(207,207,209)"/><rect x="45.30" y="15.3" width="5.33" height="5.3" fill="rgb(204,204,206)"/><rect x="50.33" y="15.3" width="5.33" height="5.3" fill="rgb(201,201,203)"/><rect x="55.37" y="15.3" width="5.33" height="5.3" fill="rgb(208,208,210)"/><rect x="60.40" y="15.3" width="5.33" height="5.3" fill="rgb(207,207,209)"/><rect x="65.43" y="15.3" width="5.33" height="5.3" fill="rgb(226,226,228)"/><rect x="70.47" y="15.3" width="5.33" height="5.3" fill="rgb(216,216,218)"/><rect x="75.50" y="15.3" width="5.33" height="5.3" fill="rgb(233,233,235)"/><rect x="80.53" y="15.3" width="5.33" height="5.3" fill="rgb(198,198,200)"/><rect x="85.57" y="15.3" width="5.33" height="5.3" fill="rgb(210,210,212)"/><rect x="90.60" y="15.3" width="5.33" height="5.3" fill="rgb(208,208,210)"/><rect x="95.63" y="15.3" width="5.33" height="5.3" fill="rgb(208,208,210)"/><rect x="100.67" y="15.3" width="5.33" height="5.3" fill="rgb(224,224,226)"/><rect x="105.70" y="15.3" width="5.33" height="5.3" fill="rgb(204,204,206)"/><rect x="110.73" y="15.3" width="5.33" height="5.3" fill="rgb(207,207,209)"/><rect x="115.77" y="15.3" width="5.33" height="5.3" fill="rgb(196,196,198)"/><rect x="120.80" y="15.3" width="5.33" height="5.3" fill="rgb(226,226,228)"/><rect x="125.83" y="15.3" width="5.33" height="5.3" fill="rgb(204,204,206)"/><rect x="130.87" y="15.3" width="5.33" height="5.3" fill="rgb(203,203,205)"/><rect x="135.90" y="15.3" width="5.33" height="5.3" fill="rgb(213,213,215)"/><rect x="140.93" y="15.3" width="5.33" height="5.3" fill="rgb(196,196,198)"/><rect x="145.97" y="15.3" width="5.33" height="5.3" fill="rgb(211,211,213)"/><rect x="0.00" y="20.6" width="5.33" height="5.3" fill="rgb(245,245,247)"/><rect x="5.03" y="20.6" width="5.33" height="5.3" fill="rgb(249,249,251)"/><rect x="10.07" y="20.6" width="5.33" height="5.3" fill="rgb(251,251,253)"/><rect x="15.10" y="20.6" width="5.33" height="5.3" fill="rgb(247,247,249)"/><rect x="20.13" y="20.6" width="5.33" height="5.3" fill="rgb(252,252,254)"/><rect x="25.17" y="20.6" width="5.33" height="5.3" fill="rgb(249,249,251)"/><rect x="30.20" y="20.6" width="5.33" height="5.3" fill="rgb(244,244,246)"/><rect x="35.23" y="20.6" width="5.33" height="5.3" fill="rgb(245,245,247)"/><rect x="40.27" y="20.6" width="5.33" height="5.3" fill="rgb(246,246,248)"/><rect x="45.30" y="20.6" width="5.33" height="5.3" fill="rgb(244,244,246)"/><rect x="50.33" y="20.6" width="5.33" height="5.3" fill="rgb(245,245,247)"/><rect x="55.37" y="20.6" width="5.33" height="5.3" fill="rgb(251,251,253)"/><rect x="60.40" y="20.6" width="5.33" height="5.3" fill="rgb(250,250,252)"/><rect x="65.43" y="20.6" width="5.33" height="5.3" fill="rgb(248,248,250)"/><rect x="70.47" y="20.6" width="5.33" height="5.3" fill="rgb(247,247,249)"/><rect x="75.50" y="20.6" width="5.33" height="5.3" fill="rgb(243,243,245)"/><rect x="80.53" y="20.6" width="5.33" height="5.3" fill="rgb(250,250,252)"/><rect x="85.57" y="20.6" width="5.33" height="5.3" fill="rgb(243,243,245)"/><rect x="90.60" y="20.6" width="5.33" height="5.3" fill="rgb(245,245,247)"/><rect x="95.63" y="20.6" width="5.33" height="5.3" fill="rgb(245,245,247)"/><rect x="100.67" y="20.6" width="5.33" height="5.3" fill="rgb(251,251,253)"/><rect x="105.70" y="20.6" width="5.33" height="5.3" fill="rgb(242,242,244)"/><rect x="110.73" y="20.6" width="5.33" height="5.3" fill="rgb(254,254,256)"/><rect x="115.77" y="20.6" width="5.33" height="5.3" fill="rgb(248,248,250)"/><rect x="120.80" y="20.6" width="5.33" height="5.3" fill="rgb(251,251,253)"/><rect x="125.83" y="20.6" width="5.33" height="5.3" fill="rgb(242,242,244)"/><rect x="130.87" y="20.6" width="5.33" height="5.3" fill="rgb(254,254,256)"/><rect x="135.90" y="20.6" width="5.33" height="5.3" fill="rgb(241,241,243)"/><rect x="140.93" y="20.6" width="5.33" height="5.3" fill="rgb(241,241,243)"/><rect x="145.97" y="20.6" width="5.33" height="5.3" fill="rgb(253,253,255)"/></g><rect x="0" y="26.6" width="151.00" height="5.2" fill="#f1f5fb"/></svg>
<div class="bt" style="left:355.90px;top:287.00px;line-height:28.7px;">R124-…</div>
<div class="bt" style="left:418.90px;top:287.00px;line-height:28.7px;">案卡逻辑</div>
<div class="bt" style="left:498.30px;top:287.00px;line-height:28.7px;">李</div>
<svg class="ab" style="left:502.70px;top:284.50px;overflow:visible" width="33.00" height="32" viewBox="0 0 33.00 32"><g filter="url(#mb)"><rect x="0.00" y="10.0" width="5.38" height="5.3" fill="rgb(244,244,246)"/><rect x="5.08" y="10.0" width="5.38" height="5.3" fill="rgb(248,248,250)"/><rect x="10.17" y="10.0" width="5.38" height="5.3" fill="rgb(233,233,235)"/><rect x="15.25" y="10.0" width="5.38" height="5.3" fill="rgb(219,219,221)"/><rect x="20.33" y="10.0" width="5.38" height="5.3" fill="rgb(230,230,232)"/><rect x="25.42" y="10.0" width="5.38" height="5.3" fill="rgb(219,219,221)"/><rect x="0.00" y="15.3" width="5.38" height="5.3" fill="rgb(229,229,231)"/><rect x="5.08" y="15.3" width="5.38" height="5.3" fill="rgb(234,234,236)"/><rect x="10.17" y="15.3" width="5.38" height="5.3" fill="rgb(217,217,219)"/><rect x="15.25" y="15.3" width="5.38" height="5.3" fill="rgb(201,201,203)"/><rect x="20.33" y="15.3" width="5.38" height="5.3" fill="rgb(209,209,211)"/><rect x="25.42" y="15.3" width="5.38" height="5.3" fill="rgb(197,197,199)"/><rect x="0.00" y="20.6" width="5.38" height="5.3" fill="rgb(251,251,253)"/><rect x="5.08" y="20.6" width="5.38" height="5.3" fill="rgb(246,246,248)"/><rect x="10.17" y="20.6" width="5.38" height="5.3" fill="rgb(244,244,246)"/><rect x="15.25" y="20.6" width="5.38" height="5.3" fill="rgb(251,251,253)"/><rect x="20.33" y="20.6" width="5.38" height="5.3" fill="rgb(250,250,252)"/><rect x="25.42" y="20.6" width="5.38" height="5.3" fill="rgb(244,244,246)"/></g><rect x="0" y="26.6" width="33.00" height="5.2" fill="#f1f5fb"/></svg>
<div class="bt" style="left:562.20px;top:287.00px;line-height:28.7px;">新北区院</div>
<div class="bt" style="left:650.00px;top:287.00px;line-height:28.7px;">第四检察部</div>
<svg class="ab" style="left:736.70px;top:284.50px;overflow:visible" width="32.00" height="32" viewBox="0 0 32.00 32"><g filter="url(#mb)"><rect x="0.00" y="10.0" width="5.30" height="5.3" fill="rgb(237,237,239)"/><rect x="5.00" y="10.0" width="5.30" height="5.3" fill="rgb(227,227,229)"/><rect x="10.00" y="10.0" width="5.30" height="5.3" fill="rgb(214,214,216)"/><rect x="15.00" y="10.0" width="5.30" height="5.3" fill="rgb(219,219,221)"/><rect x="20.00" y="10.0" width="5.30" height="5.3" fill="rgb(230,230,232)"/><rect x="0.00" y="15.3" width="5.30" height="5.3" fill="rgb(217,217,219)"/><rect x="5.00" y="15.3" width="5.30" height="5.3" fill="rgb(206,206,208)"/><rect x="10.00" y="15.3" width="5.30" height="5.3" fill="rgb(202,202,204)"/><rect x="15.00" y="15.3" width="5.30" height="5.3" fill="rgb(200,200,202)"/><rect x="20.00" y="15.3" width="5.30" height="5.3" fill="rgb(209,209,211)"/><rect x="0.00" y="20.6" width="5.30" height="5.3" fill="rgb(253,253,255)"/><rect x="5.00" y="20.6" width="5.30" height="5.3" fill="rgb(244,244,246)"/><rect x="10.00" y="20.6" width="5.30" height="5.3" fill="rgb(252,252,254)"/><rect x="15.00" y="20.6" width="5.30" height="5.3" fill="rgb(242,242,244)"/><rect x="20.00" y="20.6" width="5.30" height="5.3" fill="rgb(242,242,244)"/></g><rect x="0" y="26.6" width="32.00" height="5.2" fill="#f1f5fb"/></svg>
<div class="bt" style="left:801.50px;top:287.00px;line-height:28.7px;">一审公诉案件</div>
<div class="bt" style="left:904.90px;top:287.00px;line-height:28.7px;">2023-08-25</div>
<div class="bt" style="left:984.70px;top:287.00px;line-height:28.7px;">2024-01-24</div>
<div class="bt" style="left:1056.30px;top:287.00px;line-height:28.7px;width:47px;text-align:center;">3</div>
<div class="cb" style="left:13.20px;top:324.55px;border-color:#e6e8ee"></div>
<div class="bt" style="left:40.10px;top:315.70px;line-height:28.7px;width:43.599999999999994px;text-align:center;">12</div>
<div class="bt" style="left:125.70px;top:315.70px;line-height:28.7px;">…</div>
<div class="bt" style="left:155.70px;top:315.70px;line-height:28.7px;">新</div>
<div class="bt" style="left:310.20px;top:315.70px;line-height:28.7px;">9号</div>
<svg class="ab" style="left:89.60px;top:313.20px;overflow:visible" width="35.10" height="32" viewBox="0 0 35.10 32"><g filter="url(#mb)"><rect x="2.40" y="10.0" width="4.97" height="5.3" fill="rgb(235,235,237)"/><rect x="7.07" y="10.0" width="4.97" height="5.3" fill="rgb(219,219,221)"/><rect x="11.74" y="10.0" width="4.97" height="5.3" fill="rgb(212,212,214)"/><rect x="16.41" y="10.0" width="4.97" height="5.3" fill="rgb(242,242,244)"/><rect x="21.09" y="10.0" width="4.97" height="5.3" fill="rgb(220,220,222)"/><rect x="25.76" y="10.0" width="4.97" height="5.3" fill="rgb(216,216,218)"/><rect x="30.43" y="10.0" width="4.97" height="5.3" fill="rgb(226,226,228)"/><rect x="2.40" y="15.3" width="4.97" height="5.3" fill="rgb(215,215,217)"/><rect x="7.07" y="15.3" width="4.97" height="5.3" fill="rgb(203,203,205)"/><rect x="11.74" y="15.3" width="4.97" height="5.3" fill="rgb(196,196,198)"/><rect x="16.41" y="15.3" width="4.97" height="5.3" fill="rgb(218,218,220)"/><rect x="21.09" y="15.3" width="4.97" height="5.3" fill="rgb(200,200,202)"/><rect x="25.76" y="15.3" width="4.97" height="5.3" fill="rgb(204,204,206)"/><rect x="30.43" y="15.3" width="4.97" height="5.3" fill="rgb(216,216,218)"/><rect x="2.40" y="20.6" width="4.97" height="5.3" fill="rgb(242,242,244)"/><rect x="7.07" y="20.6" width="4.97" height="5.3" fill="rgb(251,251,253)"/><rect x="11.74" y="20.6" width="4.97" height="5.3" fill="rgb(241,241,243)"/><rect x="16.41" y="20.6" width="4.97" height="5.3" fill="rgb(253,253,255)"/><rect x="21.09" y="20.6" width="4.97" height="5.3" fill="rgb(240,240,242)"/><rect x="25.76" y="20.6" width="4.97" height="5.3" fill="rgb(243,243,245)"/><rect x="30.43" y="20.6" width="4.97" height="5.3" fill="rgb(244,244,246)"/></g><rect x="0" y="26.6" width="35.10" height="5.2" fill="#f1f5fb"/></svg>
<svg class="ab" style="left:163.00px;top:313.20px;overflow:visible" width="151.00" height="32" viewBox="0 0 151.00 32"><g filter="url(#mb)"><rect x="0.00" y="10.0" width="5.33" height="5.3" fill="rgb(229,229,231)"/><rect x="5.03" y="10.0" width="5.33" height="5.3" fill="rgb(217,217,219)"/><rect x="10.07" y="10.0" width="5.33" height="5.3" fill="rgb(206,206,208)"/><rect x="15.10" y="10.0" width="5.33" height="5.3" fill="rgb(224,224,226)"/><rect x="20.13" y="10.0" width="5.33" height="5.3" fill="rgb(216,216,218)"/><rect x="25.17" y="10.0" width="5.33" height="5.3" fill="rgb(235,235,237)"/><rect x="30.20" y="10.0" width="5.33" height="5.3" fill="rgb(228,228,230)"/><rect x="35.23" y="10.0" width="5.33" height="5.3" fill="rgb(232,232,234)"/><rect x="40.27" y="10.0" width="5.33" height="5.3" fill="rgb(233,233,235)"/><rect x="45.30" y="10.0" width="5.33" height="5.3" fill="rgb(232,232,234)"/><rect x="50.33" y="10.0" width="5.33" height="5.3" fill="rgb(219,219,221)"/><rect x="55.37" y="10.0" width="5.33" height="5.3" fill="rgb(213,213,215)"/><rect x="60.40" y="10.0" width="5.33" height="5.3" fill="rgb(213,213,215)"/><rect x="65.43" y="10.0" width="5.33" height="5.3" fill="rgb(227,227,229)"/><rect x="70.47" y="10.0" width="5.33" height="5.3" fill="rgb(222,222,224)"/><rect x="75.50" y="10.0" width="5.33" height="5.3" fill="rgb(248,248,250)"/><rect x="80.53" y="10.0" width="5.33" height="5.3" fill="rgb(221,221,223)"/><rect x="85.57" y="10.0" width="5.33" height="5.3" fill="rgb(219,219,221)"/><rect x="90.60" y="10.0" width="5.33" height="5.3" fill="rgb(231,231,233)"/><rect x="95.63" y="10.0" width="5.33" height="5.3" fill="rgb(224,224,226)"/><rect x="100.67" y="10.0" width="5.33" height="5.3" fill="rgb(236,236,238)"/><rect x="105.70" y="10.0" width="5.33" height="5.3" fill="rgb(216,216,218)"/><rect x="110.73" y="10.0" width="5.33" height="5.3" fill="rgb(223,223,225)"/><rect x="115.77" y="10.0" width="5.33" height="5.3" fill="rgb(239,239,241)"/><rect x="120.80" y="10.0" width="5.33" height="5.3" fill="rgb(208,208,210)"/><rect x="125.83" y="10.0" width="5.33" height="5.3" fill="rgb(229,229,231)"/><rect x="130.87" y="10.0" width="5.33" height="5.3" fill="rgb(237,237,239)"/><rect x="135.90" y="10.0" width="5.33" height="5.3" fill="rgb(229,229,231)"/><rect x="140.93" y="10.0" width="5.33" height="5.3" fill="rgb(220,220,222)"/><rect x="145.97" y="10.0" width="5.33" height="5.3" fill="rgb(227,227,229)"/><rect x="0.00" y="15.3" width="5.33" height="5.3" fill="rgb(213,213,215)"/><rect x="5.03" y="15.3" width="5.33" height="5.3" fill="rgb(199,199,201)"/><rect x="10.07" y="15.3" width="5.33" height="5.3" fill="rgb(196,196,198)"/><rect x="15.10" y="15.3" width="5.33" height="5.3" fill="rgb(211,211,213)"/><rect x="20.13" y="15.3" width="5.33" height="5.3" fill="rgb(198,198,200)"/><rect x="25.17" y="15.3" width="5.33" height="5.3" fill="rgb(216,216,218)"/><rect x="30.20" y="15.3" width="5.33" height="5.3" fill="rgb(208,208,210)"/><rect x="35.23" y="15.3" width="5.33" height="5.3" fill="rgb(209,209,211)"/><rect x="40.27" y="15.3" width="5.33" height="5.3" fill="rgb(214,214,216)"/><rect x="45.30" y="15.3" width="5.33" height="5.3" fill="rgb(218,218,220)"/><rect x="50.33" y="15.3" width="5.33" height="5.3" fill="rgb(205,205,207)"/><rect x="55.37" y="15.3" width="5.33" height="5.3" fill="rgb(200,200,202)"/><rect x="60.40" y="15.3" width="5.33" height="5.3" fill="rgb(199,199,201)"/><rect x="65.43" y="15.3" width="5.33" height="5.3" fill="rgb(204,204,206)"/><rect x="70.47" y="15.3" width="5.33" height="5.3" fill="rgb(209,209,211)"/><rect x="75.50" y="15.3" width="5.33" height="5.3" fill="rgb(230,230,232)"/><rect x="80.53" y="15.3" width="5.33" height="5.3" fill="rgb(204,204,206)"/><rect x="85.57" y="15.3" width="5.33" height="5.3" fill="rgb(200,200,202)"/><rect x="90.60" y="15.3" width="5.33" height="5.3" fill="rgb(208,208,210)"/><rect x="95.63" y="15.3" width="5.33" height="5.3" fill="rgb(203,203,205)"/><rect x="100.67" y="15.3" width="5.33" height="5.3" fill="rgb(226,226,228)"/><rect x="105.70" y="15.3" width="5.33" height="5.3" fill="rgb(204,204,206)"/><rect x="110.73" y="15.3" width="5.33" height="5.3" fill="rgb(200,200,202)"/><rect x="115.77" y="15.3" width="5.33" height="5.3" fill="rgb(229,229,231)"/><rect x="120.80" y="15.3" width="5.33" height="5.3" fill="rgb(196,196,198)"/><rect x="125.83" y="15.3" width="5.33" height="5.3" fill="rgb(211,211,213)"/><rect x="130.87" y="15.3" width="5.33" height="5.3" fill="rgb(226,226,228)"/><rect x="135.90" y="15.3" width="5.33" height="5.3" fill="rgb(209,209,211)"/><rect x="140.93" y="15.3" width="5.33" height="5.3" fill="rgb(209,209,211)"/><rect x="145.97" y="15.3" width="5.33" height="5.3" fill="rgb(213,213,215)"/><rect x="0.00" y="20.6" width="5.33" height="5.3" fill="rgb(245,245,247)"/><rect x="5.03" y="20.6" width="5.33" height="5.3" fill="rgb(240,240,242)"/><rect x="10.07" y="20.6" width="5.33" height="5.3" fill="rgb(252,252,254)"/><rect x="15.10" y="20.6" width="5.33" height="5.3" fill="rgb(248,248,250)"/><rect x="20.13" y="20.6" width="5.33" height="5.3" fill="rgb(244,244,246)"/><rect x="25.17" y="20.6" width="5.33" height="5.3" fill="rgb(241,241,243)"/><rect x="30.20" y="20.6" width="5.33" height="5.3" fill="rgb(248,248,250)"/><rect x="35.23" y="20.6" width="5.33" height="5.3" fill="rgb(247,247,249)"/><rect x="40.27" y="20.6" width="5.33" height="5.3" fill="rgb(240,240,242)"/><rect x="45.30" y="20.6" width="5.33" height="5.3" fill="rgb(254,254,256)"/><rect x="50.33" y="20.6" width="5.33" height="5.3" fill="rgb(243,243,245)"/><rect x="55.37" y="20.6" width="5.33" height="5.3" fill="rgb(241,241,243)"/><rect x="60.40" y="20.6" width="5.33" height="5.3" fill="rgb(245,245,247)"/><rect x="65.43" y="20.6" width="5.33" height="5.3" fill="rgb(240,240,242)"/><rect x="70.47" y="20.6" width="5.33" height="5.3" fill="rgb(252,252,254)"/><rect x="75.50" y="20.6" width="5.33" height="5.3" fill="rgb(248,248,250)"/><rect x="80.53" y="20.6" width="5.33" height="5.3" fill="rgb(244,244,246)"/><rect x="85.57" y="20.6" width="5.33" height="5.3" fill="rgb(252,252,254)"/><rect x="90.60" y="20.6" width="5.33" height="5.3" fill="rgb(243,243,245)"/><rect x="95.63" y="20.6" width="5.33" height="5.3" fill="rgb(252,252,254)"/><rect x="100.67" y="20.6" width="5.33" height="5.3" fill="rgb(254,254,256)"/><rect x="105.70" y="20.6" width="5.33" height="5.3" fill="rgb(251,251,253)"/><rect x="110.73" y="20.6" width="5.33" height="5.3" fill="rgb(247,247,249)"/><rect x="115.77" y="20.6" width="5.33" height="5.3" fill="rgb(246,246,248)"/><rect x="120.80" y="20.6" width="5.33" height="5.3" fill="rgb(244,244,246)"/><rect x="125.83" y="20.6" width="5.33" height="5.3" fill="rgb(252,252,254)"/><rect x="130.87" y="20.6" width="5.33" height="5.3" fill="rgb(248,248,250)"/><rect x="135.90" y="20.6" width="5.33" height="5.3" fill="rgb(253,253,255)"/><rect x="140.93" y="20.6" width="5.33" height="5.3" fill="rgb(250,250,252)"/><rect x="145.97" y="20.6" width="5.33" height="5.3" fill="rgb(252,252,254)"/></g><rect x="0" y="26.6" width="151.00" height="5.2" fill="#f1f5fb"/></svg>
<div class="bt" style="left:355.90px;top:315.70px;line-height:28.7px;">A056-…</div>
<div class="bt" style="left:418.90px;top:315.70px;line-height:28.7px;">案卡逻辑</div>
<div class="bt" style="left:562.20px;top:315.70px;line-height:28.7px;">新北区院</div>
<div class="bt" style="left:650.00px;top:315.70px;line-height:28.7px;">第二检察部</div>
<svg class="ab" style="left:736.70px;top:313.20px;overflow:visible" width="32.00" height="32" viewBox="0 0 32.00 32"><g filter="url(#mb)"><rect x="0.00" y="10.0" width="5.63" height="5.3" fill="rgb(220,220,222)"/><rect x="5.33" y="10.0" width="5.63" height="5.3" fill="rgb(226,226,228)"/><rect x="10.67" y="10.0" width="5.63" height="5.3" fill="rgb(236,236,238)"/><rect x="16.00" y="10.0" width="5.63" height="5.3" fill="rgb(235,235,237)"/><rect x="21.33" y="10.0" width="5.63" height="5.3" fill="rgb(238,238,240)"/><rect x="26.67" y="10.0" width="5.63" height="5.3" fill="rgb(230,230,232)"/><rect x="0.00" y="15.3" width="5.63" height="5.3" fill="rgb(199,199,201)"/><rect x="5.33" y="15.3" width="5.63" height="5.3" fill="rgb(211,211,213)"/><rect x="10.67" y="15.3" width="5.63" height="5.3" fill="rgb(218,218,220)"/><rect x="16.00" y="15.3" width="5.63" height="5.3" fill="rgb(215,215,217)"/><rect x="21.33" y="15.3" width="5.63" height="5.3" fill="rgb(224,224,226)"/><rect x="26.67" y="15.3" width="5.63" height="5.3" fill="rgb(208,208,210)"/><rect x="0.00" y="20.6" width="5.63" height="5.3" fill="rgb(245,245,247)"/><rect x="5.33" y="20.6" width="5.63" height="5.3" fill="rgb(250,250,252)"/><rect x="10.67" y="20.6" width="5.63" height="5.3" fill="rgb(250,250,252)"/><rect x="16.00" y="20.6" width="5.63" height="5.3" fill="rgb(247,247,249)"/><rect x="21.33" y="20.6" width="5.63" height="5.3" fill="rgb(245,245,247)"/><rect x="26.67" y="20.6" width="5.63" height="5.3" fill="rgb(244,244,246)"/></g><rect x="0" y="26.6" width="32.00" height="5.2" fill="#f1f5fb"/></svg>
<div class="bt" style="left:801.50px;top:315.70px;line-height:28.7px;">一审公诉案件</div>
<div class="bt" style="left:904.90px;top:315.70px;line-height:28.7px;">2023-07-12</div>
<div class="bt" style="left:984.70px;top:315.70px;line-height:28.7px;">2024-01-24</div>
<div class="bt" style="left:1056.30px;top:315.70px;line-height:28.7px;width:47px;text-align:center;">3</div>
<div class="cb" style="left:13.20px;top:353.25px;border-color:#e6e8ee"></div>
<div class="bt" style="left:40.10px;top:344.40px;line-height:28.7px;width:43.599999999999994px;text-align:center;">13</div>
<div class="bt" style="left:125.70px;top:344.40px;line-height:28.7px;">…</div>
<div class="bt" style="left:155.70px;top:344.40px;line-height:28.7px;">新</div>
<div class="bt" style="left:310.20px;top:344.40px;line-height:28.7px;">7号</div>
<svg class="ab" style="left:89.60px;top:341.90px;overflow:visible" width="35.10" height="32" viewBox="0 0 35.10 32"><g filter="url(#mb)"><rect x="2.40" y="10.0" width="4.97" height="5.3" fill="rgb(227,227,229)"/><rect x="7.07" y="10.0" width="4.97" height="5.3" fill="rgb(211,211,213)"/><rect x="11.74" y="10.0" width="4.97" height="5.3" fill="rgb(214,214,216)"/><rect x="16.41" y="10.0" width="4.97" height="5.3" fill="rgb(217,217,219)"/><rect x="21.09" y="10.0" width="4.97" height="5.3" fill="rgb(239,239,241)"/><rect x="25.76" y="10.0" width="4.97" height="5.3" fill="rgb(229,229,231)"/><rect x="30.43" y="10.0" width="4.97" height="5.3" fill="rgb(223,223,225)"/><rect x="2.40" y="15.3" width="4.97" height="5.3" fill="rgb(216,216,218)"/><rect x="7.07" y="15.3" width="4.97" height="5.3" fill="rgb(199,199,201)"/><rect x="11.74" y="15.3" width="4.97" height="5.3" fill="rgb(202,202,204)"/><rect x="16.41" y="15.3" width="4.97" height="5.3" fill="rgb(202,202,204)"/><rect x="21.09" y="15.3" width="4.97" height="5.3" fill="rgb(224,224,226)"/><rect x="25.76" y="15.3" width="4.97" height="5.3" fill="rgb(217,217,219)"/><rect x="30.43" y="15.3" width="4.97" height="5.3" fill="rgb(207,207,209)"/><rect x="2.40" y="20.6" width="4.97" height="5.3" fill="rgb(240,240,242)"/><rect x="7.07" y="20.6" width="4.97" height="5.3" fill="rgb(240,240,242)"/><rect x="11.74" y="20.6" width="4.97" height="5.3" fill="rgb(246,246,248)"/><rect x="16.41" y="20.6" width="4.97" height="5.3" fill="rgb(248,248,250)"/><rect x="21.09" y="20.6" width="4.97" height="5.3" fill="rgb(240,240,242)"/><rect x="25.76" y="20.6" width="4.97" height="5.3" fill="rgb(246,246,248)"/><rect x="30.43" y="20.6" width="4.97" height="5.3" fill="rgb(241,241,243)"/></g><rect x="0" y="26.6" width="35.10" height="5.2" fill="#f1f5fb"/></svg>
<svg class="ab" style="left:163.00px;top:341.90px;overflow:visible" width="151.00" height="32" viewBox="0 0 151.00 32"><g filter="url(#mb)"><rect x="0.00" y="10.0" width="5.33" height="5.3" fill="rgb(231,231,233)"/><rect x="5.03" y="10.0" width="5.33" height="5.3" fill="rgb(219,219,221)"/><rect x="10.07" y="10.0" width="5.33" height="5.3" fill="rgb(240,240,242)"/><rect x="15.10" y="10.0" width="5.33" height="5.3" fill="rgb(228,228,230)"/><rect x="20.13" y="10.0" width="5.33" height="5.3" fill="rgb(248,248,250)"/><rect x="25.17" y="10.0" width="5.33" height="5.3" fill="rgb(222,222,224)"/><rect x="30.20" y="10.0" width="5.33" height="5.3" fill="rgb(233,233,235)"/><rect x="35.23" y="10.0" width="5.33" height="5.3" fill="rgb(217,217,219)"/><rect x="40.27" y="10.0" width="5.33" height="5.3" fill="rgb(248,248,250)"/><rect x="45.30" y="10.0" width="5.33" height="5.3" fill="rgb(223,223,225)"/><rect x="50.33" y="10.0" width="5.33" height="5.3" fill="rgb(225,225,227)"/><rect x="55.37" y="10.0" width="5.33" height="5.3" fill="rgb(212,212,214)"/><rect x="60.40" y="10.0" width="5.33" height="5.3" fill="rgb(242,242,244)"/><rect x="65.43" y="10.0" width="5.33" height="5.3" fill="rgb(220,220,222)"/><rect x="70.47" y="10.0" width="5.33" height="5.3" fill="rgb(227,227,229)"/><rect x="75.50" y="10.0" width="5.33" height="5.3" fill="rgb(232,232,234)"/><rect x="80.53" y="10.0" width="5.33" height="5.3" fill="rgb(240,240,242)"/><rect x="85.57" y="10.0" width="5.33" height="5.3" fill="rgb(231,231,233)"/><rect x="90.60" y="10.0" width="5.33" height="5.3" fill="rgb(210,210,212)"/><rect x="95.63" y="10.0" width="5.33" height="5.3" fill="rgb(231,231,233)"/><rect x="100.67" y="10.0" width="5.33" height="5.3" fill="rgb(221,221,223)"/><rect x="105.70" y="10.0" width="5.33" height="5.3" fill="rgb(232,232,234)"/><rect x="110.73" y="10.0" width="5.33" height="5.3" fill="rgb(236,236,238)"/><rect x="115.77" y="10.0" width="5.33" height="5.3" fill="rgb(235,235,237)"/><rect x="120.80" y="10.0" width="5.33" height="5.3" fill="rgb(219,219,221)"/><rect x="125.83" y="10.0" width="5.33" height="5.3" fill="rgb(209,209,211)"/><rect x="130.87" y="10.0" width="5.33" height="5.3" fill="rgb(233,233,235)"/><rect x="135.90" y="10.0" width="5.33" height="5.3" fill="rgb(225,225,227)"/><rect x="140.93" y="10.0" width="5.33" height="5.3" fill="rgb(243,243,245)"/><rect x="145.97" y="10.0" width="5.33" height="5.3" fill="rgb(211,211,213)"/><rect x="0.00" y="15.3" width="5.33" height="5.3" fill="rgb(213,213,215)"/><rect x="5.03" y="15.3" width="5.33" height="5.3" fill="rgb(202,202,204)"/><rect x="10.07" y="15.3" width="5.33" height="5.3" fill="rgb(225,225,227)"/><rect x="15.10" y="15.3" width="5.33" height="5.3" fill="rgb(214,214,216)"/><rect x="20.13" y="15.3" width="5.33" height="5.3" fill="rgb(230,230,232)"/><rect x="25.17" y="15.3" width="5.33" height="5.3" fill="rgb(203,203,205)"/><rect x="30.20" y="15.3" width="5.33" height="5.3" fill="rgb(218,218,220)"/><rect x="35.23" y="15.3" width="5.33" height="5.3" fill="rgb(204,204,206)"/><rect x="40.27" y="15.3" width="5.33" height="5.3" fill="rgb(232,232,234)"/><rect x="45.30" y="15.3" width="5.33" height="5.3" fill="rgb(206,206,208)"/><rect x="50.33" y="15.3" width="5.33" height="5.3" fill="rgb(207,207,209)"/><rect x="55.37" y="15.3" width="5.33" height="5.3" fill="rgb(196,196,198)"/><rect x="60.40" y="15.3" width="5.33" height="5.3" fill="rgb(232,232,234)"/><rect x="65.43" y="15.3" width="5.33" height="5.3" fill="rgb(197,197,199)"/><rect x="70.47" y="15.3" width="5.33" height="5.3" fill="rgb(215,215,217)"/><rect x="75.50" y="15.3" width="5.33" height="5.3" fill="rgb(210,210,212)"/><rect x="80.53" y="15.3" width="5.33" height="5.3" fill="rgb(216,216,218)"/><rect x="85.57" y="15.3" width="5.33" height="5.3" fill="rgb(214,214,216)"/><rect x="90.60" y="15.3" width="5.33" height="5.3" fill="rgb(199,199,201)"/><rect x="95.63" y="15.3" width="5.33" height="5.3" fill="rgb(218,218,220)"/><rect x="100.67" y="15.3" width="5.33" height="5.3" fill="rgb(209,209,211)"/><rect x="105.70" y="15.3" width="5.33" height="5.3" fill="rgb(209,209,211)"/><rect x="110.73" y="15.3" width="5.33" height="5.3" fill="rgb(212,212,214)"/><rect x="115.77" y="15.3" width="5.33" height="5.3" fill="rgb(215,215,217)"/><rect x="120.80" y="15.3" width="5.33" height="5.3" fill="rgb(197,197,199)"/><rect x="125.83" y="15.3" width="5.33" height="5.3" fill="rgb(197,197,199)"/><rect x="130.87" y="15.3" width="5.33" height="5.3" fill="rgb(210,210,212)"/><rect x="135.90" y="15.3" width="5.33" height="5.3" fill="rgb(214,214,216)"/><rect x="140.93" y="15.3" width="5.33" height="5.3" fill="rgb(221,221,223)"/><rect x="145.97" y="15.3" width="5.33" height="5.3" fill="rgb(200,200,202)"/><rect x="0.00" y="20.6" width="5.33" height="5.3" fill="rgb(248,248,250)"/><rect x="5.03" y="20.6" width="5.33" height="5.3" fill="rgb(244,244,246)"/><rect x="10.07" y="20.6" width="5.33" height="5.3" fill="rgb(244,244,246)"/><rect x="15.10" y="20.6" width="5.33" height="5.3" fill="rgb(241,241,243)"/><rect x="20.13" y="20.6" width="5.33" height="5.3" fill="rgb(242,242,244)"/><rect x="25.17" y="20.6" width="5.33" height="5.3" fill="rgb(253,253,255)"/><rect x="30.20" y="20.6" width="5.33" height="5.3" fill="rgb(240,240,242)"/><rect x="35.23" y="20.6" width="5.33" height="5.3" fill="rgb(251,251,253)"/><rect x="40.27" y="20.6" width="5.33" height="5.3" fill="rgb(245,245,247)"/><rect x="45.30" y="20.6" width="5.33" height="5.3" fill="rgb(244,244,246)"/><rect x="50.33" y="20.6" width="5.33" height="5.3" fill="rgb(248,248,250)"/><rect x="55.37" y="20.6" width="5.33" height="5.3" fill="rgb(252,252,254)"/><rect x="60.40" y="20.6" width="5.33" height="5.3" fill="rgb(245,245,247)"/><rect x="65.43" y="20.6" width="5.33" height="5.3" fill="rgb(247,247,249)"/><rect x="70.47" y="20.6" width="5.33" height="5.3" fill="rgb(243,243,245)"/><rect x="75.50" y="20.6" width="5.33" height="5.3" fill="rgb(248,248,250)"/><rect x="80.53" y="20.6" width="5.33" height="5.3" fill="rgb(240,240,242)"/><rect x="85.57" y="20.6" width="5.33" height="5.3" fill="rgb(253,253,255)"/><rect x="90.60" y="20.6" width="5.33" height="5.3" fill="rgb(246,246,248)"/><rect x="95.63" y="20.6" width="5.33" height="5.3" fill="rgb(243,243,245)"/><rect x="100.67" y="20.6" width="5.33" height="5.3" fill="rgb(247,247,249)"/><rect x="105.70" y="20.6" width="5.33" height="5.3" fill="rgb(244,244,246)"/><rect x="110.73" y="20.6" width="5.33" height="5.3" fill="rgb(250,250,252)"/><rect x="115.77" y="20.6" width="5.33" height="5.3" fill="rgb(243,243,245)"/><rect x="120.80" y="20.6" width="5.33" height="5.3" fill="rgb(241,241,243)"/><rect x="125.83" y="20.6" width="5.33" height="5.3" fill="rgb(241,241,243)"/><rect x="130.87" y="20.6" width="5.33" height="5.3" fill="rgb(248,248,250)"/><rect x="135.90" y="20.6" width="5.33" height="5.3" fill="rgb(247,247,249)"/><rect x="140.93" y="20.6" width="5.33" height="5.3" fill="rgb(252,252,254)"/><rect x="145.97" y="20.6" width="5.33" height="5.3" fill="rgb(252,252,254)"/></g><rect x="0" y="26.6" width="151.00" height="5.2" fill="#f1f5fb"/></svg>
<div class="bt" style="left:355.90px;top:344.40px;line-height:28.7px;">R144-…</div>
<div class="bt" style="left:418.90px;top:344.40px;line-height:28.7px;">案卡逻辑</div>
<div class="bt" style="left:498.30px;top:344.40px;line-height:28.7px;">张</div>
<svg class="ab" style="left:502.70px;top:341.90px;overflow:visible" width="33.00" height="32" viewBox="0 0 33.00 32"><g filter="url(#mb)"><rect x="0.00" y="10.0" width="5.38" height="5.3" fill="rgb(214,214,216)"/><rect x="5.08" y="10.0" width="5.38" height="5.3" fill="rgb(248,248,250)"/><rect x="10.17" y="10.0" width="5.38" height="5.3" fill="rgb(223,223,225)"/><rect x="15.25" y="10.0" width="5.38" height="5.3" fill="rgb(222,222,224)"/><rect x="20.33" y="10.0" width="5.38" height="5.3" fill="rgb(215,215,217)"/><rect x="25.42" y="10.0" width="5.38" height="5.3" fill="rgb(224,224,226)"/><rect x="0.00" y="15.3" width="5.38" height="5.3" fill="rgb(203,203,205)"/><rect x="5.08" y="15.3" width="5.38" height="5.3" fill="rgb(235,235,237)"/><rect x="10.17" y="15.3" width="5.38" height="5.3" fill="rgb(213,213,215)"/><rect x="15.25" y="15.3" width="5.38" height="5.3" fill="rgb(198,198,200)"/><rect x="20.33" y="15.3" width="5.38" height="5.3" fill="rgb(200,200,202)"/><rect x="25.42" y="15.3" width="5.38" height="5.3" fill="rgb(201,201,203)"/><rect x="0.00" y="20.6" width="5.38" height="5.3" fill="rgb(243,243,245)"/><rect x="5.08" y="20.6" width="5.38" height="5.3" fill="rgb(253,253,255)"/><rect x="10.17" y="20.6" width="5.38" height="5.3" fill="rgb(244,244,246)"/><rect x="15.25" y="20.6" width="5.38" height="5.3" fill="rgb(241,241,243)"/><rect x="20.33" y="20.6" width="5.38" height="5.3" fill="rgb(246,246,248)"/><rect x="25.42" y="20.6" width="5.38" height="5.3" fill="rgb(242,242,244)"/></g><rect x="0" y="26.6" width="33.00" height="5.2" fill="#f1f5fb"/></svg>
<div class="bt" style="left:562.20px;top:344.40px;line-height:28.7px;">新北区院</div>
<div class="bt" style="left:650.00px;top:344.40px;line-height:28.7px;">第四检察部</div>
<svg class="ab" style="left:736.70px;top:341.90px;overflow:visible" width="32.00" height="32" viewBox="0 0 32.00 32"><g filter="url(#mb)"><rect x="0.00" y="10.0" width="5.63" height="5.3" fill="rgb(214,214,216)"/><rect x="5.33" y="10.0" width="5.63" height="5.3" fill="rgb(235,235,237)"/><rect x="10.67" y="10.0" width="5.63" height="5.3" fill="rgb(227,227,229)"/><rect x="16.00" y="10.0" width="5.63" height="5.3" fill="rgb(242,242,244)"/><rect x="21.33" y="10.0" width="5.63" height="5.3" fill="rgb(216,216,218)"/><rect x="26.67" y="10.0" width="5.63" height="5.3" fill="rgb(225,225,227)"/><rect x="0.00" y="15.3" width="5.63" height="5.3" fill="rgb(196,196,198)"/><rect x="5.33" y="15.3" width="5.63" height="5.3" fill="rgb(215,215,217)"/><rect x="10.67" y="15.3" width="5.63" height="5.3" fill="rgb(211,211,213)"/><rect x="16.00" y="15.3" width="5.63" height="5.3" fill="rgb(226,226,228)"/><rect x="21.33" y="15.3" width="5.63" height="5.3" fill="rgb(206,206,208)"/><rect x="26.67" y="15.3" width="5.63" height="5.3" fill="rgb(202,202,204)"/><rect x="0.00" y="20.6" width="5.63" height="5.3" fill="rgb(245,245,247)"/><rect x="5.33" y="20.6" width="5.63" height="5.3" fill="rgb(251,251,253)"/><rect x="10.67" y="20.6" width="5.63" height="5.3" fill="rgb(245,245,247)"/><rect x="16.00" y="20.6" width="5.63" height="5.3" fill="rgb(253,253,255)"/><rect x="21.33" y="20.6" width="5.63" height="5.3" fill="rgb(250,250,252)"/><rect x="26.67" y="20.6" width="5.63" height="5.3" fill="rgb(244,244,246)"/></g><rect x="0" y="26.6" width="32.00" height="5.2" fill="#f1f5fb"/></svg>
<div class="bt" style="left:801.50px;top:344.40px;line-height:28.7px;">一审公诉案件</div>
<div class="bt" style="left:904.90px;top:344.40px;line-height:28.7px;">2023-08-25</div>
<div class="bt" style="left:984.70px;top:344.40px;line-height:28.7px;">2024-01-24</div>
<div class="bt" style="left:1056.30px;top:344.40px;line-height:28.7px;width:47px;text-align:center;">3</div>
</div>
<div class="ab" style="left:1283.6px;top:181.0px;width:48.4px;height:390.29999999999995px;background:#fff;box-shadow:-5px 0 7px -3px rgba(0,0,0,0.10);overflow:hidden">
<div class="ab" style="left:0;top:0;width:48.4px;height:29.0px;background:#eaf2fc"></div>
<div class="hl" style="left:0;top:0;width:48.4px"></div>
<div class="hl" style="left:0;top:28.50px;width:48.4px"></div>
<div class="hl" style="left:0;top:57.20px;width:48.4px"></div>
<div class="hl" style="left:0;top:85.90px;width:48.4px"></div>
<div class="hl" style="left:0;top:114.60px;width:48.4px"></div>
<div class="hl" style="left:0;top:143.30px;width:48.4px"></div>
<div class="hl" style="left:0;top:172.00px;width:48.4px"></div>
<div class="hl" style="left:0;top:200.70px;width:48.4px"></div>
<div class="hl" style="left:0;top:229.40px;width:48.4px"></div>
<div class="hl" style="left:0;top:258.10px;width:48.4px"></div>
<div class="hl" style="left:0;top:286.80px;width:48.4px"></div>
<div class="hl" style="left:0;top:315.50px;width:48.4px"></div>
<div class="hl" style="left:0;top:344.20px;width:48.4px"></div>
<div class="hl" style="left:0;top:372.90px;width:48.4px"></div>
<div class="ht" style="left:0;top:0;width:48.4px;text-align:center">操作</div>
<div class="bt" style="left:0;top:29.00px;width:48.4px;text-align:center;line-height:28.7px;color:#409eff;font-size:10.4px;-webkit-text-stroke:0.2px #409eff">查看</div>
<div class="bt" style="left:0;top:57.70px;width:48.4px;text-align:center;line-height:28.7px;color:#409eff;font-size:10.4px;-webkit-text-stroke:0.2px #409eff">查看</div>
<div class="bt" style="left:0;top:86.40px;width:48.4px;text-align:center;line-height:28.7px;color:#409eff;font-size:10.4px;-webkit-text-stroke:0.2px #409eff">查看</div>
<div class="bt" style="left:0;top:115.10px;width:48.4px;text-align:center;line-height:28.7px;color:#409eff;font-size:10.4px;-webkit-text-stroke:0.2px #409eff">查看</div>
<div class="bt" style="left:0;top:143.80px;width:48.4px;text-align:center;line-height:28.7px;color:#409eff;font-size:10.4px;-webkit-text-stroke:0.2px #409eff">查看</div>
<div class="bt" style="left:0;top:172.50px;width:48.4px;text-align:center;line-height:28.7px;color:#409eff;font-size:10.4px;-webkit-text-stroke:0.2px #409eff">查看</div>
<div class="bt" style="left:0;top:201.20px;width:48.4px;text-align:center;line-height:28.7px;color:#409eff;font-size:10.4px;-webkit-text-stroke:0.2px #409eff">查看</div>
<div class="bt" style="left:0;top:229.90px;width:48.4px;text-align:center;line-height:28.7px;color:#409eff;font-size:10.4px;-webkit-text-stroke:0.2px #409eff">查看</div>
<div class="bt" style="left:0;top:258.60px;width:48.4px;text-align:center;line-height:28.7px;color:#409eff;font-size:10.4px;-webkit-text-stroke:0.2px #409eff">查看</div>
<div class="bt" style="left:0;top:287.30px;width:48.4px;text-align:center;line-height:28.7px;color:#409eff;font-size:10.4px;-webkit-text-stroke:0.2px #409eff">查看</div>
<div class="bt" style="left:0;top:316.00px;width:48.4px;text-align:center;line-height:28.7px;color:#409eff;font-size:10.4px;-webkit-text-stroke:0.2px #409eff">查看</div>
<div class="bt" style="left:0;top:344.70px;width:48.4px;text-align:center;line-height:28.7px;color:#409eff;font-size:10.4px;-webkit-text-stroke:0.2px #409eff">查看</div>
<div class="bt" style="left:0;top:373.40px;width:48.4px;text-align:center;line-height:28.7px;color:#409eff;font-size:10.4px;-webkit-text-stroke:0.2px #409eff">查看</div>
</div>
<div class="vl" style="left:1331.5px;top:181.0px;height:390.29999999999995px"></div>
<div class="hl" style="left:1331px;top:181.0px;width:5px"></div>
<div class="vl" style="left:1335.5px;top:181.0px;height:29.0px"></div>
<div class="hl" style="left:1331px;top:209.5px;width:5px"></div>
<div class="ab" style="left:1332px;top:210.0px;width:4px;height:365.0px;background:#f4f4f4"></div>
<div class="ab" style="left:1332px;top:210.0px;width:4px;height:227.0px;background:#8e8e8e"></div>
<div class="ab" style="left:184.3px;top:571.3px;width:1151.7px;height:3.7px;background:#f4f4f4"></div>
<div class="ab" style="left:185px;top:571.3px;width:1141px;height:3.7px;background:#8e8e8e"></div>
<div class="ab" style="left:1335.5px;top:210.0px;width:1px;height:365.5px;background:#e2e6ec"></div>
<div class="ab" style="left:1326px;top:575px;width:10.5px;height:1px;background:#e2e6ec"></div>
<div class="t" style="left:184px;top:595.5px;font-size:10.8px;line-height:15px;color:#606266">共 1125 条</div>
<div class="ab" style="left:245px;top:591.2px;width:79.7px;height:22.6px;border:1px solid #dcdfe6;border-radius:2px;background:#fff"></div>
<div class="t" style="left:259.5px;top:595.5px;font-size:11px;line-height:15px;color:#606266">20条/页</div>
<svg class="ab" style="left:310px;top:601px" width="9" height="6" viewBox="0 0 9 6"><path d="M1 1 L4.5 4.5 L8 1" fill="none" stroke="#c0c4cc" stroke-width="1"/></svg>
<svg class="ab" style="left:348.5px;top:598.5px" width="7" height="10" viewBox="0 0 7 10"><path d="M5.2 1.2 L1.6 5 L5.2 8.8" fill="none" stroke="#c0c4cc" stroke-width="1"/></svg>
<div class="ab" style="left:370.6px;top:591.2px;width:24.3px;height:22.6px;border:1px solid #409eff;border-radius:2px;background:#fff"></div>
<div class="pg" style="left:370.6px;width:24.3px;color:#409eff;top:592.5px">1</div>
<div class="pg" style="left:399.60px;width:24px;top:591.8px">2</div>
<div class="pg" style="left:427.80px;width:24px;top:591.8px">3</div>
<div class="pg" style="left:456.50px;width:24px;top:591.8px">4</div>
<div class="pg" style="left:485.50px;width:24px;top:591.8px">5</div>
<div class="pg" style="left:513.70px;width:24px;top:591.8px">6</div>
<div class="pg" style="left:542.40px;width:24px;top:591.8px">···</div>
<div class="pg" style="left:571.40px;width:24px;top:591.8px">57</div>
<svg class="ab" style="left:610px;top:598.5px" width="7" height="10" viewBox="0 0 7 10"><path d="M1.6 1.2 L5.2 5 L1.6 8.8" fill="none" stroke="#303133" stroke-width="1"/></svg>
<div class="t" style="left:649.4px;top:596px;font-size:10.8px;line-height:15px;color:#606266">前往</div>
<div class="ab" style="left:672.9px;top:591.2px;width:36.1px;height:22.6px;border:1px solid #dcdfe6;border-radius:2px;background:#fff;font-size:10.8px;line-height:21px;text-align:center;color:#606266">1</div>
<div class="t" style="left:713px;top:596px;font-size:10.8px;line-height:15px;color:#606266">页</div>
</body></html>
